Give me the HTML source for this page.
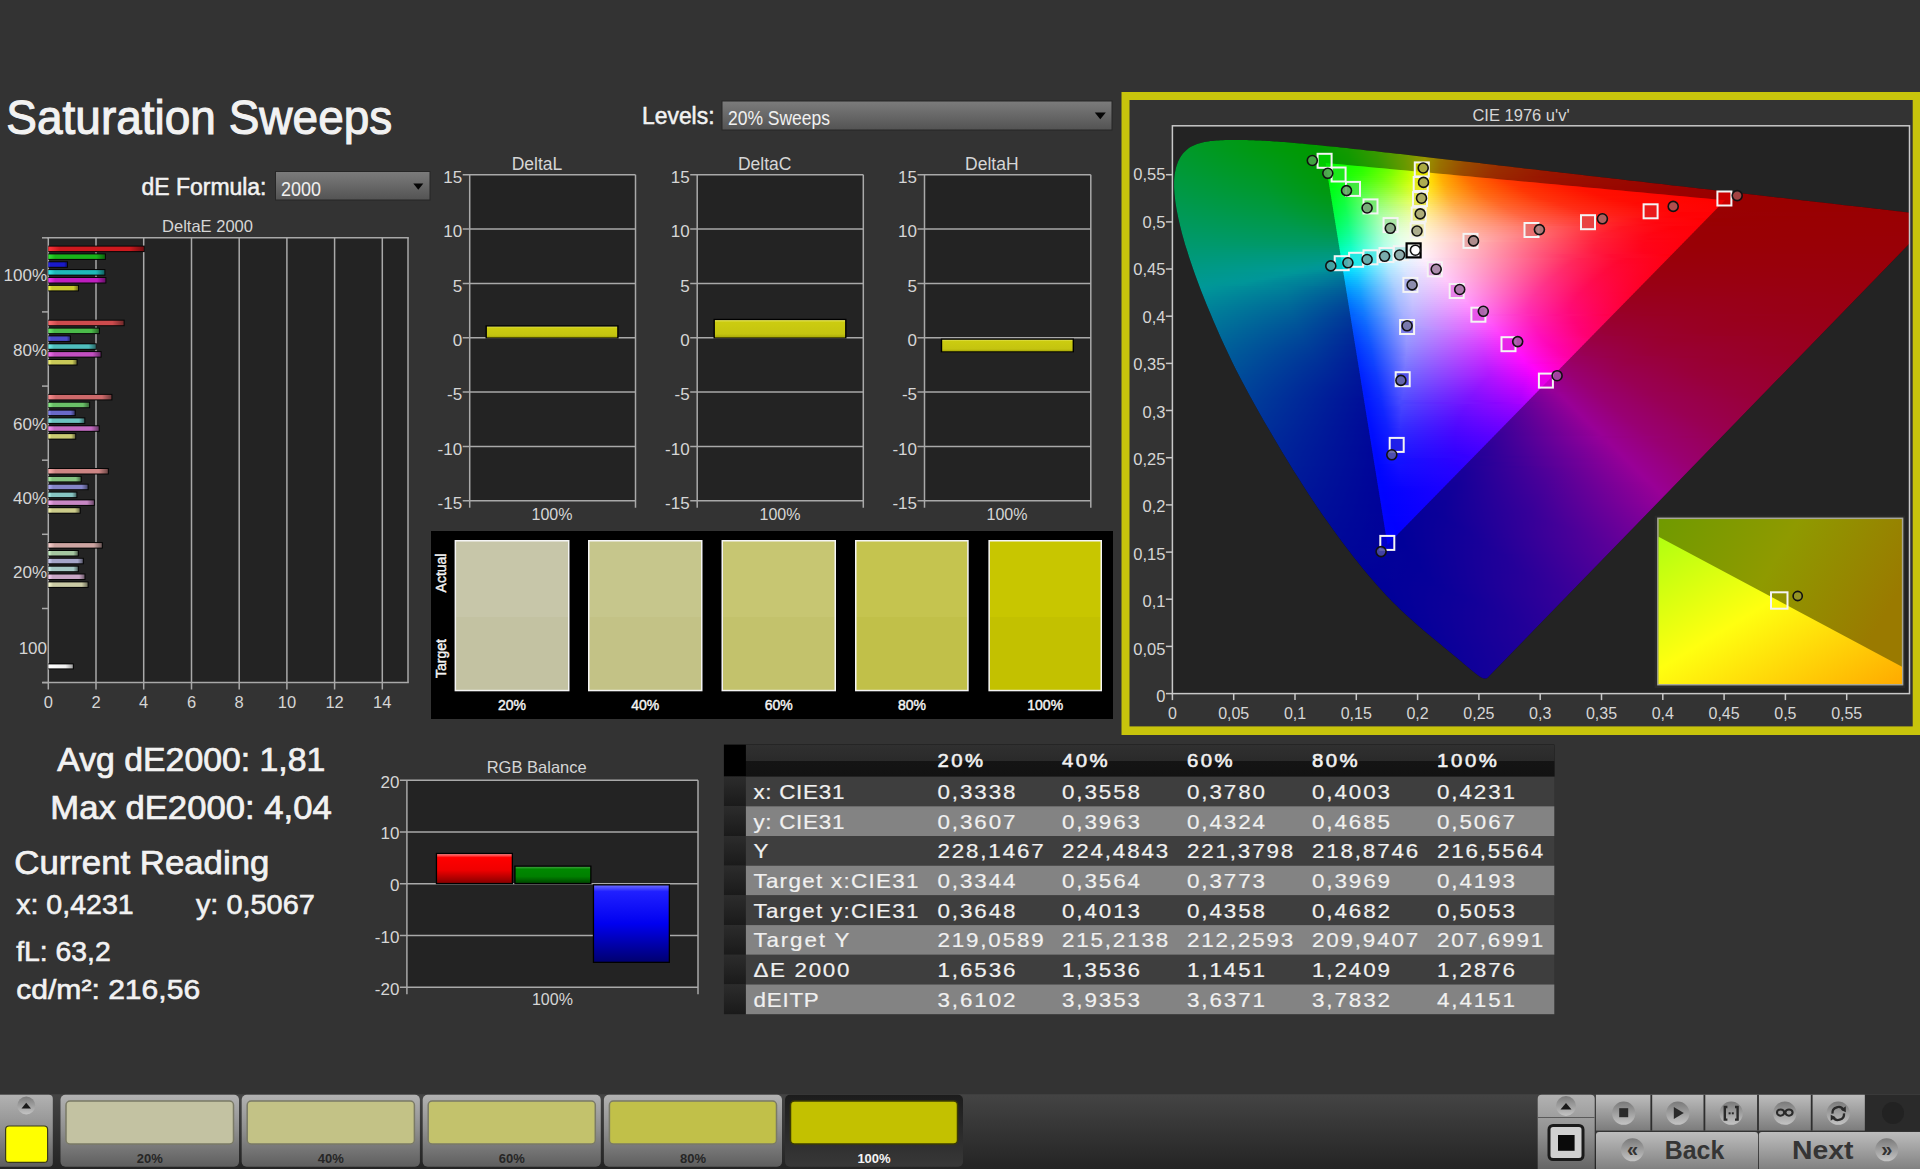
<!DOCTYPE html>
<html><head><meta charset="utf-8"><title>Saturation Sweeps</title>
<style>html,body{margin:0;padding:0;width:1920px;height:1169px;overflow:hidden;background:#333333;font-family:"Liberation Sans", sans-serif;}</style>
</head><body><svg width="1920" height="1169" viewBox="0 0 1920 1169" style="position:absolute;left:0;top:0;font-family:'Liberation Sans', sans-serif"><defs><linearGradient id="dd" x1="0" y1="0" x2="0" y2="1"><stop offset="0" stop-color="#7c7c7c"/><stop offset="1" stop-color="#535353"/></linearGradient><linearGradient id="b00" x1="0" y1="0" x2="1" y2="0"><stop offset="0" stop-color="rgb(255, 53, 59)"/><stop offset="0.12" stop-color="rgb(205, 25, 30)"/><stop offset="0.85" stop-color="rgb(205, 25, 30)"/><stop offset="1" stop-color="rgb(112, 13, 16)"/></linearGradient><linearGradient id="b01" x1="0" y1="0" x2="1" y2="0"><stop offset="0" stop-color="rgb(53, 231, 53)"/><stop offset="0.12" stop-color="rgb(25, 180, 25)"/><stop offset="0.85" stop-color="rgb(25, 180, 25)"/><stop offset="1" stop-color="rgb(13, 99, 13)"/></linearGradient><linearGradient id="b02" x1="0" y1="0" x2="1" y2="0"><stop offset="0" stop-color="rgb(53, 53, 254)"/><stop offset="0.12" stop-color="rgb(25, 25, 200)"/><stop offset="0.85" stop-color="rgb(25, 25, 200)"/><stop offset="1" stop-color="rgb(13, 13, 110)"/></linearGradient><linearGradient id="b03" x1="0" y1="0" x2="1" y2="0"><stop offset="0" stop-color="rgb(59, 237, 237)"/><stop offset="0.12" stop-color="rgb(30, 185, 185)"/><stop offset="0.85" stop-color="rgb(30, 185, 185)"/><stop offset="1" stop-color="rgb(16, 101, 101)"/></linearGradient><linearGradient id="b04" x1="0" y1="0" x2="1" y2="0"><stop offset="0" stop-color="rgb(243, 59, 243)"/><stop offset="0.12" stop-color="rgb(190, 30, 190)"/><stop offset="0.85" stop-color="rgb(190, 30, 190)"/><stop offset="1" stop-color="rgb(104, 16, 104)"/></linearGradient><linearGradient id="b05" x1="0" y1="0" x2="1" y2="0"><stop offset="0" stop-color="rgb(254, 254, 76)"/><stop offset="0.12" stop-color="rgb(200, 200, 45)"/><stop offset="0.85" stop-color="rgb(200, 200, 45)"/><stop offset="1" stop-color="rgb(110, 110, 24)"/></linearGradient><linearGradient id="b10" x1="0" y1="0" x2="1" y2="0"><stop offset="0" stop-color="rgb(255, 111, 113)"/><stop offset="0.12" stop-color="rgb(205, 75, 77)"/><stop offset="0.85" stop-color="rgb(205, 75, 77)"/><stop offset="1" stop-color="rgb(112, 41, 42)"/></linearGradient><linearGradient id="b11" x1="0" y1="0" x2="1" y2="0"><stop offset="0" stop-color="rgb(111, 240, 110)"/><stop offset="0.12" stop-color="rgb(75, 187, 74)"/><stop offset="0.85" stop-color="rgb(75, 187, 74)"/><stop offset="1" stop-color="rgb(41, 102, 40)"/></linearGradient><linearGradient id="b12" x1="0" y1="0" x2="1" y2="0"><stop offset="0" stop-color="rgb(111, 111, 254)"/><stop offset="0.12" stop-color="rgb(75, 75, 200)"/><stop offset="0.85" stop-color="rgb(75, 75, 200)"/><stop offset="1" stop-color="rgb(41, 41, 110)"/></linearGradient><linearGradient id="b13" x1="0" y1="0" x2="1" y2="0"><stop offset="0" stop-color="rgb(115, 243, 242)"/><stop offset="0.12" stop-color="rgb(79, 190, 189)"/><stop offset="0.85" stop-color="rgb(79, 190, 189)"/><stop offset="1" stop-color="rgb(43, 104, 103)"/></linearGradient><linearGradient id="b14" x1="0" y1="0" x2="1" y2="0"><stop offset="0" stop-color="rgb(248, 115, 245)"/><stop offset="0.12" stop-color="rgb(194, 79, 192)"/><stop offset="0.85" stop-color="rgb(194, 79, 192)"/><stop offset="1" stop-color="rgb(106, 43, 105)"/></linearGradient><linearGradient id="b15" x1="0" y1="0" x2="1" y2="0"><stop offset="0" stop-color="rgb(255, 255, 126)"/><stop offset="0.12" stop-color="rgb(201, 201, 88)"/><stop offset="0.85" stop-color="rgb(201, 201, 88)"/><stop offset="1" stop-color="rgb(110, 110, 48)"/></linearGradient><linearGradient id="b20" x1="0" y1="0" x2="1" y2="0"><stop offset="0" stop-color="rgb(255, 145, 146)"/><stop offset="0.12" stop-color="rgb(205, 105, 106)"/><stop offset="0.85" stop-color="rgb(205, 105, 106)"/><stop offset="1" stop-color="rgb(112, 57, 58)"/></linearGradient><linearGradient id="b21" x1="0" y1="0" x2="1" y2="0"><stop offset="0" stop-color="rgb(145, 244, 143)"/><stop offset="0.12" stop-color="rgb(105, 191, 103)"/><stop offset="0.85" stop-color="rgb(105, 191, 103)"/><stop offset="1" stop-color="rgb(57, 105, 56)"/></linearGradient><linearGradient id="b22" x1="0" y1="0" x2="1" y2="0"><stop offset="0" stop-color="rgb(145, 145, 254)"/><stop offset="0.12" stop-color="rgb(105, 105, 200)"/><stop offset="0.85" stop-color="rgb(105, 105, 200)"/><stop offset="1" stop-color="rgb(57, 57, 110)"/></linearGradient><linearGradient id="b23" x1="0" y1="0" x2="1" y2="0"><stop offset="0" stop-color="rgb(149, 248, 244)"/><stop offset="0.12" stop-color="rgb(108, 194, 191)"/><stop offset="0.85" stop-color="rgb(108, 194, 191)"/><stop offset="1" stop-color="rgb(59, 106, 105)"/></linearGradient><linearGradient id="b24" x1="0" y1="0" x2="1" y2="0"><stop offset="0" stop-color="rgb(250, 149, 248)"/><stop offset="0.12" stop-color="rgb(196, 108, 194)"/><stop offset="0.85" stop-color="rgb(196, 108, 194)"/><stop offset="1" stop-color="rgb(107, 59, 106)"/></linearGradient><linearGradient id="b25" x1="0" y1="0" x2="1" y2="0"><stop offset="0" stop-color="rgb(255, 255, 156)"/><stop offset="0.12" stop-color="rgb(202, 202, 114)"/><stop offset="0.85" stop-color="rgb(202, 202, 114)"/><stop offset="1" stop-color="rgb(111, 111, 62)"/></linearGradient><linearGradient id="b30" x1="0" y1="0" x2="1" y2="0"><stop offset="0" stop-color="rgb(255, 177, 176)"/><stop offset="0.12" stop-color="rgb(205, 133, 132)"/><stop offset="0.85" stop-color="rgb(205, 133, 132)"/><stop offset="1" stop-color="rgb(112, 73, 72)"/></linearGradient><linearGradient id="b31" x1="0" y1="0" x2="1" y2="0"><stop offset="0" stop-color="rgb(177, 249, 174)"/><stop offset="0.12" stop-color="rgb(133, 195, 130)"/><stop offset="0.85" stop-color="rgb(133, 195, 130)"/><stop offset="1" stop-color="rgb(73, 107, 71)"/></linearGradient><linearGradient id="b32" x1="0" y1="0" x2="1" y2="0"><stop offset="0" stop-color="rgb(177, 177, 254)"/><stop offset="0.12" stop-color="rgb(133, 133, 200)"/><stop offset="0.85" stop-color="rgb(133, 133, 200)"/><stop offset="1" stop-color="rgb(73, 73, 110)"/></linearGradient><linearGradient id="b33" x1="0" y1="0" x2="1" y2="0"><stop offset="0" stop-color="rgb(180, 251, 248)"/><stop offset="0.12" stop-color="rgb(135, 197, 194)"/><stop offset="0.85" stop-color="rgb(135, 197, 194)"/><stop offset="1" stop-color="rgb(74, 108, 106)"/></linearGradient><linearGradient id="b34" x1="0" y1="0" x2="1" y2="0"><stop offset="0" stop-color="rgb(253, 180, 250)"/><stop offset="0.12" stop-color="rgb(199, 135, 196)"/><stop offset="0.85" stop-color="rgb(199, 135, 196)"/><stop offset="1" stop-color="rgb(109, 74, 107)"/></linearGradient><linearGradient id="b35" x1="0" y1="0" x2="1" y2="0"><stop offset="0" stop-color="rgb(255, 255, 183)"/><stop offset="0.12" stop-color="rgb(203, 203, 138)"/><stop offset="0.85" stop-color="rgb(203, 203, 138)"/><stop offset="1" stop-color="rgb(111, 111, 75)"/></linearGradient><linearGradient id="b40" x1="0" y1="0" x2="1" y2="0"><stop offset="0" stop-color="rgb(255, 214, 211)"/><stop offset="0.12" stop-color="rgb(205, 165, 162)"/><stop offset="0.85" stop-color="rgb(205, 165, 162)"/><stop offset="1" stop-color="rgb(112, 90, 89)"/></linearGradient><linearGradient id="b41" x1="0" y1="0" x2="1" y2="0"><stop offset="0" stop-color="rgb(214, 253, 210)"/><stop offset="0.12" stop-color="rgb(165, 199, 161)"/><stop offset="0.85" stop-color="rgb(165, 199, 161)"/><stop offset="1" stop-color="rgb(90, 109, 88)"/></linearGradient><linearGradient id="b42" x1="0" y1="0" x2="1" y2="0"><stop offset="0" stop-color="rgb(214, 214, 254)"/><stop offset="0.12" stop-color="rgb(165, 165, 200)"/><stop offset="0.85" stop-color="rgb(165, 165, 200)"/><stop offset="1" stop-color="rgb(90, 90, 110)"/></linearGradient><linearGradient id="b43" x1="0" y1="0" x2="1" y2="0"><stop offset="0" stop-color="rgb(215, 254, 250)"/><stop offset="0.12" stop-color="rgb(166, 200, 196)"/><stop offset="0.85" stop-color="rgb(166, 200, 196)"/><stop offset="1" stop-color="rgb(91, 110, 107)"/></linearGradient><linearGradient id="b44" x1="0" y1="0" x2="1" y2="0"><stop offset="0" stop-color="rgb(255, 215, 251)"/><stop offset="0.12" stop-color="rgb(201, 166, 197)"/><stop offset="0.85" stop-color="rgb(201, 166, 197)"/><stop offset="1" stop-color="rgb(110, 91, 108)"/></linearGradient><linearGradient id="b45" x1="0" y1="0" x2="1" y2="0"><stop offset="0" stop-color="rgb(255, 255, 214)"/><stop offset="0.12" stop-color="rgb(203, 203, 165)"/><stop offset="0.85" stop-color="rgb(203, 203, 165)"/><stop offset="1" stop-color="rgb(111, 111, 90)"/></linearGradient><linearGradient id="bw" x1="0" y1="0" x2="1" y2="0"><stop offset="0" stop-color="#ffffff"/><stop offset="0.7" stop-color="#f0f0f0"/><stop offset="1" stop-color="#a0a0a0"/></linearGradient><linearGradient id="yb" x1="0" y1="0" x2="0" y2="1"><stop offset="0" stop-color="#e6e660"/><stop offset="0.12" stop-color="#cccc10"/><stop offset="0.8" stop-color="#c4c410"/><stop offset="1" stop-color="#a8a808"/></linearGradient><clipPath id="loc"><path d="M1487.3 678.1 L1487.3 678.1 L1487.2 678.1 L1487.2 678.1 L1487.1 678.1 L1487.0 678.1 L1486.9 678.1 L1486.8 678.2 L1486.7 678.2 L1486.7 678.2 L1486.6 678.3 L1486.5 678.3 L1486.4 678.4 L1486.3 678.4 L1486.2 678.5 L1486.1 678.5 L1486.0 678.6 L1485.8 678.6 L1485.7 678.6 L1485.5 678.6 L1485.3 678.6 L1485.1 678.7 L1484.9 678.6 L1484.7 678.6 L1484.4 678.6 L1484.1 678.5 L1483.8 678.4 L1483.5 678.4 L1483.1 678.3 L1482.8 678.1 L1482.4 678.0 L1482.0 677.8 L1481.6 677.7 L1481.3 677.5 L1480.9 677.3 L1480.5 677.0 L1480.1 676.8 L1479.7 676.5 L1479.3 676.2 L1478.9 675.9 L1478.4 675.6 L1478.0 675.2 L1477.5 674.9 L1477.0 674.5 L1476.5 674.1 L1475.9 673.7 L1475.3 673.2 L1474.7 672.8 L1474.1 672.3 L1473.4 671.7 L1472.7 671.2 L1472.0 670.6 L1471.3 670.0 L1470.5 669.4 L1469.7 668.7 L1468.9 668.1 L1468.0 667.3 L1467.1 666.6 L1466.2 665.8 L1465.3 665.0 L1464.3 664.2 L1463.4 663.4 L1462.3 662.5 L1461.3 661.6 L1460.2 660.7 L1459.1 659.7 L1457.9 658.8 L1456.8 657.8 L1455.5 656.8 L1454.3 655.8 L1453.0 654.7 L1451.7 653.6 L1450.3 652.4 L1448.8 651.2 L1447.3 650.0 L1445.8 648.7 L1444.2 647.4 L1442.5 646.0 L1440.8 644.6 L1439.1 643.2 L1437.4 641.7 L1435.5 640.2 L1433.7 638.7 L1431.8 637.2 L1429.9 635.6 L1427.9 633.9 L1425.9 632.2 L1423.8 630.5 L1421.6 628.6 L1419.4 626.7 L1417.2 624.7 L1414.9 622.7 L1412.5 620.6 L1410.1 618.5 L1407.6 616.2 L1405.1 613.9 L1402.5 611.4 L1399.8 608.9 L1397.2 606.3 L1394.5 603.7 L1391.7 600.9 L1388.9 598.1 L1385.9 595.0 L1382.8 591.6 L1379.6 588.0 L1376.2 584.2 L1372.6 580.1 L1368.9 575.8 L1365.1 571.3 L1361.2 566.6 L1357.3 561.6 L1353.2 556.5 L1349.1 551.1 L1344.8 545.6 L1340.5 539.8 L1336.1 533.8 L1331.6 527.5 L1327.0 521.1 L1322.3 514.5 L1317.7 507.7 L1313.0 500.7 L1308.2 493.5 L1303.4 486.0 L1298.5 478.3 L1293.5 470.5 L1288.6 462.5 L1283.7 454.4 L1278.8 446.2 L1273.9 438.1 L1269.1 429.8 L1264.2 421.4 L1259.4 412.9 L1254.5 404.3 L1249.8 395.7 L1245.1 387.1 L1240.6 378.6 L1236.3 370.3 L1232.2 361.9 L1228.2 353.6 L1224.3 345.2 L1220.5 336.9 L1216.9 328.7 L1213.4 320.7 L1210.1 312.8 L1206.9 305.2 L1203.9 297.7 L1201.0 290.4 L1198.3 283.2 L1195.7 276.2 L1193.3 269.4 L1191.0 262.8 L1188.9 256.4 L1187.0 250.3 L1185.1 244.4 L1183.5 238.8 L1182.0 233.4 L1180.7 228.3 L1179.5 223.3 L1178.4 218.5 L1177.5 213.9 L1176.6 209.5 L1175.9 205.3 L1175.3 201.3 L1174.9 197.6 L1174.5 194.0 L1174.3 190.6 L1174.1 187.3 L1174.1 184.2 L1174.1 181.1 L1174.3 178.2 L1174.5 175.5 L1174.9 172.8 L1175.4 170.4 L1175.9 168.0 L1176.6 165.8 L1177.3 163.7 L1178.1 161.6 L1179.0 159.7 L1179.9 157.9 L1181.0 156.2 L1182.2 154.6 L1183.4 153.1 L1184.7 151.7 L1186.0 150.4 L1187.4 149.2 L1188.9 148.1 L1190.4 147.1 L1192.0 146.2 L1193.7 145.4 L1195.4 144.7 L1197.1 144.1 L1198.9 143.5 L1200.7 142.9 L1202.6 142.4 L1204.5 142.0 L1206.4 141.7 L1208.4 141.4 L1210.4 141.1 L1212.4 140.9 L1214.5 140.8 L1216.5 140.6 L1218.6 140.4 L1220.7 140.3 L1222.9 140.2 L1225.1 140.1 L1227.2 140.1 L1229.4 140.0 L1231.6 140.0 L1233.8 140.0 L1236.0 140.0 L1238.1 140.0 L1240.3 140.0 L1242.5 140.0 L1244.6 140.1 L1246.8 140.1 L1249.0 140.2 L1251.3 140.2 L1253.5 140.3 L1255.7 140.4 L1258.0 140.5 L1260.3 140.6 L1262.5 140.7 L1264.9 140.8 L1267.2 140.9 L1269.5 141.1 L1271.9 141.2 L1274.3 141.4 L1276.7 141.5 L1279.2 141.7 L1281.6 141.9 L1284.1 142.1 L1286.6 142.3 L1289.2 142.5 L1291.8 142.7 L1294.4 142.9 L1297.0 143.2 L1299.6 143.4 L1302.3 143.6 L1305.0 143.9 L1307.8 144.2 L1310.6 144.4 L1313.4 144.7 L1316.2 145.0 L1319.1 145.3 L1322.0 145.6 L1325.0 145.9 L1328.0 146.2 L1331.0 146.5 L1334.1 146.8 L1337.2 147.1 L1340.4 147.5 L1343.5 147.8 L1346.8 148.1 L1350.0 148.5 L1353.4 148.9 L1356.7 149.2 L1360.1 149.6 L1363.6 150.0 L1367.0 150.4 L1370.6 150.7 L1374.2 151.1 L1377.8 151.5 L1381.4 152.0 L1385.2 152.4 L1388.9 152.8 L1392.7 153.2 L1396.6 153.7 L1400.5 154.1 L1404.4 154.6 L1408.4 155.0 L1412.5 155.5 L1416.6 155.9 L1420.8 156.4 L1425.0 156.9 L1429.2 157.4 L1433.5 157.9 L1437.9 158.4 L1442.3 158.9 L1446.7 159.4 L1451.2 159.9 L1455.8 160.4 L1460.4 161.0 L1465.1 161.5 L1469.8 162.0 L1474.5 162.6 L1479.3 163.1 L1484.2 163.7 L1489.1 164.3 L1494.0 164.8 L1499.0 165.4 L1504.1 166.0 L1509.2 166.6 L1514.3 167.2 L1519.5 167.8 L1524.7 168.4 L1529.9 169.0 L1535.2 169.6 L1540.5 170.2 L1545.9 170.8 L1551.3 171.4 L1556.8 172.0 L1562.3 172.7 L1567.7 173.3 L1573.3 173.9 L1578.8 174.6 L1584.3 175.2 L1590.0 175.9 L1595.6 176.5 L1601.2 177.2 L1606.9 177.8 L1612.5 178.5 L1618.1 179.1 L1623.7 179.7 L1629.2 180.4 L1634.7 181.0 L1640.1 181.6 L1645.6 182.3 L1651.0 182.9 L1656.4 183.5 L1661.7 184.1 L1667.1 184.7 L1672.5 185.4 L1677.8 186.0 L1683.2 186.6 L1688.6 187.2 L1693.9 187.8 L1699.1 188.4 L1704.3 189.0 L1709.4 189.6 L1714.4 190.2 L1719.3 190.7 L1724.2 191.3 L1729.0 191.8 L1733.7 192.4 L1738.4 192.9 L1743.0 193.4 L1747.5 194.0 L1752.0 194.5 L1756.4 195.0 L1760.8 195.5 L1765.0 196.0 L1769.2 196.5 L1773.4 196.9 L1777.4 197.4 L1781.3 197.8 L1785.2 198.3 L1789.0 198.7 L1792.7 199.2 L1796.4 199.6 L1799.9 200.0 L1803.4 200.4 L1806.8 200.8 L1810.2 201.2 L1813.4 201.5 L1816.6 201.9 L1819.8 202.3 L1822.8 202.6 L1825.8 203.0 L1828.7 203.3 L1831.5 203.6 L1834.4 203.9 L1837.1 204.3 L1839.8 204.6 L1842.4 204.9 L1844.9 205.2 L1847.4 205.4 L1849.9 205.7 L1852.3 206.0 L1854.6 206.3 L1857.0 206.5 L1859.3 206.8 L1861.6 207.1 L1863.8 207.3 L1866.0 207.6 L1868.1 207.8 L1870.2 208.1 L1872.3 208.3 L1874.2 208.5 L1876.1 208.7 L1877.8 208.9 L1879.5 209.1 L1881.2 209.3 L1883.1 209.6 L1885.0 209.8 L1887.2 210.0 L1889.6 210.3 L1892.3 210.6 L1895.1 210.9 L1898.0 211.3 L1900.9 211.6 L1903.7 211.9 L1906.3 212.2 L1908.6 212.5 L1910.6 212.7 L1912.4 212.9 L1914.0 213.1 L1915.5 213.3 L1917.0 213.5 L1918.4 213.6 L1919.8 213.8 L1921.2 213.9 L1922.8 214.1 L1924.3 214.3 L1925.9 214.5 L1927.4 214.7 L1928.8 214.8 L1930.2 215.0 L1931.4 215.1 L1932.5 215.2 L1933.3 215.3 L1934.1 215.4 L1934.7 215.5 L1935.3 215.6 L1935.7 215.6 L1936.1 215.7 L1936.4 215.7 L1936.6 215.7 Z"/></clipPath><clipPath id="plotc"><rect x="1172.4" y="125.8" width="737.0999999999999" height="567.8000000000001"/></clipPath><linearGradient id="g0" gradientUnits="userSpaceOnUse" x1="1233" y1="0" x2="1243" y2="0"><stop offset="0.0500" stop-color="#00ff23"/><stop offset="1.0500" stop-color="#00ff1e"/></linearGradient><linearGradient id="g1" gradientUnits="userSpaceOnUse" x1="1204" y1="0" x2="1284" y2="0"><stop offset="0.0063" stop-color="#00ff34"/><stop offset="1.0063" stop-color="#00ff07"/></linearGradient><linearGradient id="g2" gradientUnits="userSpaceOnUse" x1="1196" y1="0" x2="1308" y2="0"><stop offset="0.0045" stop-color="#00ff3a"/><stop offset="0.9866" stop-color="#00ff00"/><stop offset="1.0045" stop-color="#01ff00"/></linearGradient><linearGradient id="g3" gradientUnits="userSpaceOnUse" x1="1191" y1="0" x2="1327" y2="0"><stop offset="0.0037" stop-color="#00ff3e"/><stop offset="0.8640" stop-color="#00ff00"/><stop offset="1.0037" stop-color="#0dff00"/></linearGradient><linearGradient id="g4" gradientUnits="userSpaceOnUse" x1="1188" y1="0" x2="1346" y2="0"><stop offset="0.0032" stop-color="#00ff41"/><stop offset="0.7753" stop-color="#01ff00"/><stop offset="0.9652" stop-color="#1bff00"/><stop offset="1.0032" stop-color="#24ff00"/></linearGradient><linearGradient id="g5" gradientUnits="userSpaceOnUse" x1="1185" y1="0" x2="1366" y2="0"><stop offset="0.0028" stop-color="#00ff44"/><stop offset="0.7099" stop-color="#01ff00"/><stop offset="0.8702" stop-color="#1cff00"/><stop offset="1.0028" stop-color="#47ff00"/></linearGradient><linearGradient id="g6" gradientUnits="userSpaceOnUse" x1="1182" y1="0" x2="1384" y2="0"><stop offset="0.0025" stop-color="#00ff47"/><stop offset="0.5173" stop-color="#00ff0d"/><stop offset="0.6856" stop-color="#03ff00"/><stop offset="0.8342" stop-color="#26ff00"/><stop offset="0.9876" stop-color="#6aff00"/><stop offset="1.0025" stop-color="#72ff00"/></linearGradient><linearGradient id="g7" gradientUnits="userSpaceOnUse" x1="1181" y1="0" x2="1399" y2="0"><stop offset="0.0023" stop-color="#00ff49"/><stop offset="0.4610" stop-color="#00ff12"/><stop offset="0.6353" stop-color="#02ff00"/><stop offset="0.7683" stop-color="#21ff00"/><stop offset="0.9060" stop-color="#60ff00"/><stop offset="1.0023" stop-color="#9fff00"/></linearGradient><linearGradient id="g8" gradientUnits="userSpaceOnUse" x1="1180" y1="0" x2="1419" y2="0"><stop offset="0.0021" stop-color="#00ff4c"/><stop offset="0.4121" stop-color="#00ff16"/><stop offset="0.5879" stop-color="#01ff00"/><stop offset="0.7050" stop-color="#1fff00"/><stop offset="0.8305" stop-color="#5eff00"/><stop offset="0.9477" stop-color="#b7ff00"/><stop offset="1.0021" stop-color="#eaff00"/></linearGradient><linearGradient id="g9" gradientUnits="userSpaceOnUse" x1="1177" y1="0" x2="1436" y2="0"><stop offset="0.0019" stop-color="#00ff4f"/><stop offset="0.3764" stop-color="#00ff1b"/><stop offset="0.5579" stop-color="#01ff00"/><stop offset="0.6622" stop-color="#1dff00"/><stop offset="0.7741" stop-color="#5aff00"/><stop offset="0.8822" stop-color="#b2ff00"/><stop offset="0.9556" stop-color="#fffd00"/><stop offset="1.0019" stop-color="#ffce00"/></linearGradient><linearGradient id="g10" gradientUnits="userSpaceOnUse" x1="1176" y1="0" x2="1454" y2="0"><stop offset="0.0018" stop-color="#00ff51"/><stop offset="0.3471" stop-color="#00ff1e"/><stop offset="0.5270" stop-color="#01ff00"/><stop offset="0.6205" stop-color="#1bff00"/><stop offset="0.7248" stop-color="#58ff00"/><stop offset="0.8219" stop-color="#aeff00"/><stop offset="0.8939" stop-color="#fffc00"/><stop offset="0.9622" stop-color="#ffb700"/><stop offset="1.0018" stop-color="#ff9a00"/></linearGradient><linearGradient id="g11" gradientUnits="userSpaceOnUse" x1="1176" y1="0" x2="1468" y2="0"><stop offset="0.0017" stop-color="#00ff53"/><stop offset="0.3271" stop-color="#00ff21"/><stop offset="0.5086" stop-color="#01ff00"/><stop offset="0.5976" stop-color="#1cff00"/><stop offset="0.6935" stop-color="#58ff00"/><stop offset="0.7860" stop-color="#b1ff00"/><stop offset="0.8510" stop-color="#fffb00"/><stop offset="0.9127" stop-color="#ffb800"/><stop offset="1.0017" stop-color="#ff7c00"/></linearGradient><linearGradient id="g12" gradientUnits="userSpaceOnUse" x1="1175" y1="0" x2="1487" y2="0"><stop offset="0.0016" stop-color="#00ff55"/><stop offset="0.3029" stop-color="#00ff25"/><stop offset="0.4856" stop-color="#01ff00"/><stop offset="0.5657" stop-color="#1bff00"/><stop offset="0.6522" stop-color="#56ff00"/><stop offset="0.7356" stop-color="#acff00"/><stop offset="0.7965" stop-color="#ffff00"/><stop offset="0.8542" stop-color="#ffb900"/><stop offset="0.9343" stop-color="#ff7e00"/><stop offset="1.0016" stop-color="#ff5e00"/></linearGradient><linearGradient id="g13" gradientUnits="userSpaceOnUse" x1="1174" y1="0" x2="1507" y2="0"><stop offset="0.0015" stop-color="#00ff58"/><stop offset="0.2838" stop-color="#00ff28"/><stop offset="0.4610" stop-color="#00ff00"/><stop offset="0.5330" stop-color="#19ff00"/><stop offset="0.6141" stop-color="#54ff00"/><stop offset="0.6922" stop-color="#abff00"/><stop offset="0.7492" stop-color="#fffe00"/><stop offset="0.8003" stop-color="#ffba00"/><stop offset="0.8724" stop-color="#ff7f00"/><stop offset="0.9805" stop-color="#ff4e00"/><stop offset="1.0015" stop-color="#ff4700"/></linearGradient><linearGradient id="g14" gradientUnits="userSpaceOnUse" x1="1173" y1="0" x2="1522" y2="0"><stop offset="0.0014" stop-color="#00ff5a"/><stop offset="0.2708" stop-color="#00ff2b"/><stop offset="0.4484" stop-color="#01ff00"/><stop offset="0.5201" stop-color="#1bff00"/><stop offset="0.5946" stop-color="#57ff00"/><stop offset="0.6662" stop-color="#aeff00"/><stop offset="0.7178" stop-color="#fffd00"/><stop offset="0.7665" stop-color="#ffb900"/><stop offset="0.8352" stop-color="#ff7d00"/><stop offset="0.9355" stop-color="#ff4d00"/><stop offset="1.0014" stop-color="#ff3a00"/></linearGradient><linearGradient id="g15" gradientUnits="userSpaceOnUse" x1="1173" y1="0" x2="1538" y2="0"><stop offset="0.0014" stop-color="#00ff5c"/><stop offset="0.2562" stop-color="#00ff2e"/><stop offset="0.4288" stop-color="#01ff01"/><stop offset="0.5082" stop-color="#23ff00"/><stop offset="0.5658" stop-color="#52ff00"/><stop offset="0.6342" stop-color="#a9ff00"/><stop offset="0.6863" stop-color="#fffc00"/><stop offset="0.7329" stop-color="#ffb700"/><stop offset="0.7959" stop-color="#ff7d00"/><stop offset="0.8918" stop-color="#ff4c00"/><stop offset="1.0014" stop-color="#ff2e00"/></linearGradient><linearGradient id="g16" gradientUnits="userSpaceOnUse" x1="1173" y1="0" x2="1554" y2="0"><stop offset="0.0013" stop-color="#00ff5e"/><stop offset="0.2454" stop-color="#00ff30"/><stop offset="0.4134" stop-color="#02ff02"/><stop offset="0.4921" stop-color="#29ff01"/><stop offset="0.5604" stop-color="#66ff00"/><stop offset="0.6181" stop-color="#baff00"/><stop offset="0.6575" stop-color="#fffb00"/><stop offset="0.6995" stop-color="#ffb800"/><stop offset="0.7598" stop-color="#ff7d00"/><stop offset="0.8491" stop-color="#ff4c00"/><stop offset="0.9934" stop-color="#ff2600"/><stop offset="1.0013" stop-color="#ff2500"/></linearGradient><linearGradient id="g17" gradientUnits="userSpaceOnUse" x1="1172" y1="0" x2="1576" y2="0"><stop offset="0.0012" stop-color="#00ff60"/><stop offset="0.2314" stop-color="#00ff33"/><stop offset="0.3923" stop-color="#01ff04"/><stop offset="0.4691" stop-color="#2dff02"/><stop offset="0.5359" stop-color="#70ff01"/><stop offset="0.5903" stop-color="#c2ff00"/><stop offset="0.6200" stop-color="#ffff00"/><stop offset="0.6597" stop-color="#ffb900"/><stop offset="0.7141" stop-color="#ff7e00"/><stop offset="0.7958" stop-color="#ff4d00"/><stop offset="0.9270" stop-color="#ff2700"/><stop offset="1.0012" stop-color="#ff1b00"/></linearGradient><linearGradient id="g18" gradientUnits="userSpaceOnUse" x1="1172" y1="0" x2="1592" y2="0"><stop offset="0.0012" stop-color="#00ff62"/><stop offset="0.2226" stop-color="#00ff36"/><stop offset="0.3774" stop-color="#01ff05"/><stop offset="0.4536" stop-color="#32ff04"/><stop offset="0.5179" stop-color="#77ff02"/><stop offset="0.5702" stop-color="#c9ff01"/><stop offset="0.5964" stop-color="#fffe00"/><stop offset="0.6345" stop-color="#ffb700"/><stop offset="0.6869" stop-color="#ff7c00"/><stop offset="0.7631" stop-color="#ff4c00"/><stop offset="0.8893" stop-color="#ff2600"/><stop offset="1.0012" stop-color="#ff1600"/></linearGradient><linearGradient id="g19" gradientUnits="userSpaceOnUse" x1="1172" y1="0" x2="1609" y2="0"><stop offset="0.0011" stop-color="#00ff64"/><stop offset="0.2140" stop-color="#00ff38"/><stop offset="0.3627" stop-color="#01ff07"/><stop offset="0.4382" stop-color="#37ff07"/><stop offset="0.5023" stop-color="#81ff04"/><stop offset="0.5526" stop-color="#d5ff02"/><stop offset="0.5732" stop-color="#fffd01"/><stop offset="0.6144" stop-color="#ffb100"/><stop offset="0.6625" stop-color="#ff7800"/><stop offset="0.7380" stop-color="#ff4800"/><stop offset="0.8616" stop-color="#ff2300"/><stop offset="1.0011" stop-color="#ff1100"/></linearGradient><linearGradient id="g20" gradientUnits="userSpaceOnUse" x1="1172" y1="0" x2="1626" y2="0"><stop offset="0.0011" stop-color="#00ff67"/><stop offset="0.2059" stop-color="#00ff3b"/><stop offset="0.3491" stop-color="#01ff08"/><stop offset="0.3910" stop-color="#1fff0d"/><stop offset="0.4615" stop-color="#67ff08"/><stop offset="0.5165" stop-color="#baff05"/><stop offset="0.5518" stop-color="#fffc03"/><stop offset="0.5914" stop-color="#ffb201"/><stop offset="0.6443" stop-color="#ff7200"/><stop offset="0.6993" stop-color="#ff4b00"/><stop offset="0.8117" stop-color="#ff2500"/><stop offset="1.0011" stop-color="#ff0d00"/></linearGradient><linearGradient id="g21" gradientUnits="userSpaceOnUse" x1="1172" y1="0" x2="1643" y2="0"><stop offset="0.0011" stop-color="#00ff69"/><stop offset="0.1985" stop-color="#00ff3e"/><stop offset="0.3365" stop-color="#01ff0a"/><stop offset="0.3726" stop-color="#1eff13"/><stop offset="0.4448" stop-color="#6aff0d"/><stop offset="0.5000" stop-color="#c0ff08"/><stop offset="0.5318" stop-color="#fffb06"/><stop offset="0.5722" stop-color="#ffb103"/><stop offset="0.6274" stop-color="#ff6f01"/><stop offset="0.6975" stop-color="#ff3e00"/><stop offset="0.8227" stop-color="#ff1c00"/><stop offset="1.0011" stop-color="#ff0a00"/></linearGradient><linearGradient id="g22" gradientUnits="userSpaceOnUse" x1="1172" y1="0" x2="1659" y2="0"><stop offset="0.0010" stop-color="#00ff6b"/><stop offset="0.1920" stop-color="#00ff41"/><stop offset="0.3255" stop-color="#00ff0c"/><stop offset="0.3480" stop-color="#12ff16"/><stop offset="0.4343" stop-color="#74ff11"/><stop offset="0.4877" stop-color="#cbff0d"/><stop offset="0.5144" stop-color="#fffb0a"/><stop offset="0.5554" stop-color="#ffaf05"/><stop offset="0.6109" stop-color="#ff6e02"/><stop offset="0.6869" stop-color="#ff3900"/><stop offset="0.7772" stop-color="#ff1e00"/><stop offset="1.0010" stop-color="#ff0700"/></linearGradient><linearGradient id="g23" gradientUnits="userSpaceOnUse" x1="1172" y1="0" x2="1680" y2="0"><stop offset="0.0010" stop-color="#00ff6d"/><stop offset="0.1841" stop-color="#00ff43"/><stop offset="0.3120" stop-color="#00ff0e"/><stop offset="0.3337" stop-color="#11ff19"/><stop offset="0.3553" stop-color="#2dff1e"/><stop offset="0.4262" stop-color="#86ff16"/><stop offset="0.4774" stop-color="#e1ff11"/><stop offset="0.4931" stop-color="#fffa0f"/><stop offset="0.5344" stop-color="#ffae08"/><stop offset="0.5896" stop-color="#ff6d03"/><stop offset="0.6644" stop-color="#ff3900"/><stop offset="0.7530" stop-color="#ff1b00"/><stop offset="0.9892" stop-color="#ff0500"/><stop offset="1.0010" stop-color="#ff0500"/></linearGradient><linearGradient id="g24" gradientUnits="userSpaceOnUse" x1="1172" y1="0" x2="1696" y2="0"><stop offset="0.0010" stop-color="#00ff6f"/><stop offset="0.1784" stop-color="#00ff46"/><stop offset="0.3044" stop-color="#01ff11"/><stop offset="0.3254" stop-color="#13ff1e"/><stop offset="0.3426" stop-color="#2eff25"/><stop offset="0.4151" stop-color="#8dff1d"/><stop offset="0.4666" stop-color="#ebff17"/><stop offset="0.4781" stop-color="#fff915"/><stop offset="0.5200" stop-color="#ffad0b"/><stop offset="0.5754" stop-color="#ff6d05"/><stop offset="0.6517" stop-color="#ff3801"/><stop offset="0.7529" stop-color="#ff1500"/><stop offset="1.0010" stop-color="#ff0300"/></linearGradient><linearGradient id="g25" gradientUnits="userSpaceOnUse" x1="1172" y1="0" x2="1712" y2="0"><stop offset="0.0009" stop-color="#00ff71"/><stop offset="0.1750" stop-color="#00ff48"/><stop offset="0.2954" stop-color="#00ff13"/><stop offset="0.3157" stop-color="#12ff21"/><stop offset="0.3343" stop-color="#33ff2d"/><stop offset="0.4065" stop-color="#96ff23"/><stop offset="0.4583" stop-color="#f9ff1d"/><stop offset="0.4676" stop-color="#fff11a"/><stop offset="0.5102" stop-color="#ffa70f"/><stop offset="0.5676" stop-color="#ff6707"/><stop offset="0.6472" stop-color="#ff3302"/><stop offset="0.7602" stop-color="#ff1000"/><stop offset="1.0009" stop-color="#ff0200"/></linearGradient><linearGradient id="g26" gradientUnits="userSpaceOnUse" x1="1172" y1="0" x2="1731" y2="0"><stop offset="0.0009" stop-color="#00ff73"/><stop offset="0.1691" stop-color="#00ff4b"/><stop offset="0.2800" stop-color="#00ff16"/><stop offset="0.3014" stop-color="#0cff21"/><stop offset="0.3265" stop-color="#3bff34"/><stop offset="0.3998" stop-color="#a6ff2a"/><stop offset="0.4463" stop-color="#fffc24"/><stop offset="0.4875" stop-color="#ffb115"/><stop offset="0.5429" stop-color="#ff6f0a"/><stop offset="0.6199" stop-color="#ff3903"/><stop offset="0.7254" stop-color="#ff1400"/><stop offset="0.8810" stop-color="#ff0400"/><stop offset="1.0009" stop-color="#ff0100"/></linearGradient><linearGradient id="g27" gradientUnits="userSpaceOnUse" x1="1172" y1="0" x2="1750" y2="0"><stop offset="0.0009" stop-color="#00ff76"/><stop offset="0.1635" stop-color="#00ff4e"/><stop offset="0.2673" stop-color="#00ff1b"/><stop offset="0.2794" stop-color="#01ff1b"/><stop offset="0.2984" stop-color="#17ff2b"/><stop offset="0.3175" stop-color="#41ff3d"/><stop offset="0.3919" stop-color="#b2ff32"/><stop offset="0.4317" stop-color="#fffc2c"/><stop offset="0.4732" stop-color="#ffb11b"/><stop offset="0.5303" stop-color="#ff6e0d"/><stop offset="0.6081" stop-color="#ff3704"/><stop offset="0.7154" stop-color="#ff1200"/><stop offset="0.8625" stop-color="#ff0300"/><stop offset="1.0009" stop-color="#ff0000"/></linearGradient><linearGradient id="g28" gradientUnits="userSpaceOnUse" x1="1172" y1="0" x2="1768" y2="0"><stop offset="0.0008" stop-color="#00ff78"/><stop offset="0.1602" stop-color="#00ff51"/><stop offset="0.2592" stop-color="#00ff1e"/><stop offset="0.2693" stop-color="#00ff1c"/><stop offset="0.2878" stop-color="#13ff2d"/><stop offset="0.3112" stop-color="#49ff45"/><stop offset="0.3851" stop-color="#beff3a"/><stop offset="0.4186" stop-color="#fffb35"/><stop offset="0.4606" stop-color="#ffb021"/><stop offset="0.5193" stop-color="#ff6c11"/><stop offset="0.5982" stop-color="#ff3606"/><stop offset="0.7055" stop-color="#ff1101"/><stop offset="0.8599" stop-color="#ff0200"/><stop offset="1.0008" stop-color="#ff0000"/></linearGradient><linearGradient id="g29" gradientUnits="userSpaceOnUse" x1="1172" y1="0" x2="1784" y2="0"><stop offset="0.0008" stop-color="#00ff7a"/><stop offset="0.1560" stop-color="#00ff54"/><stop offset="0.2508" stop-color="#00ff23"/><stop offset="0.2623" stop-color="#00ff1f"/><stop offset="0.2802" stop-color="#12ff30"/><stop offset="0.3064" stop-color="#52ff4e"/><stop offset="0.3799" stop-color="#caff43"/><stop offset="0.4077" stop-color="#fffb3e"/><stop offset="0.4502" stop-color="#ffb027"/><stop offset="0.5090" stop-color="#ff6d15"/><stop offset="0.5891" stop-color="#ff3608"/><stop offset="0.6969" stop-color="#ff1001"/><stop offset="0.8554" stop-color="#ff0100"/><stop offset="1.0008" stop-color="#ff0000"/></linearGradient><linearGradient id="g30" gradientUnits="userSpaceOnUse" x1="1172" y1="0" x2="1802" y2="0"><stop offset="0.0008" stop-color="#00ff7c"/><stop offset="0.1532" stop-color="#00ff57"/><stop offset="0.2437" stop-color="#00ff27"/><stop offset="0.2563" stop-color="#01ff23"/><stop offset="0.2738" stop-color="#14ff36"/><stop offset="0.3008" stop-color="#5bff56"/><stop offset="0.3754" stop-color="#d9ff4c"/><stop offset="0.3944" stop-color="#fffe49"/><stop offset="0.4373" stop-color="#ffb22f"/><stop offset="0.4960" stop-color="#ff6e19"/><stop offset="0.5770" stop-color="#ff360a"/><stop offset="0.6833" stop-color="#ff1102"/><stop offset="0.8405" stop-color="#ff0100"/><stop offset="1.0008" stop-color="#ff0001"/></linearGradient><linearGradient id="g31" gradientUnits="userSpaceOnUse" x1="1172" y1="0" x2="1819" y2="0"><stop offset="0.0008" stop-color="#00ff7f"/><stop offset="0.1491" stop-color="#00ff5a"/><stop offset="0.2372" stop-color="#00ff2a"/><stop offset="0.2481" stop-color="#00ff25"/><stop offset="0.2651" stop-color="#11ff38"/><stop offset="0.2867" stop-color="#49ff55"/><stop offset="0.2975" stop-color="#66ff5f"/><stop offset="0.3717" stop-color="#e7ff55"/><stop offset="0.3841" stop-color="#fffd53"/><stop offset="0.4274" stop-color="#ffb236"/><stop offset="0.4876" stop-color="#ff6e1e"/><stop offset="0.5696" stop-color="#ff350c"/><stop offset="0.6777" stop-color="#ff0f03"/><stop offset="0.8369" stop-color="#ff0000"/><stop offset="1.0008" stop-color="#ff0001"/></linearGradient><linearGradient id="g32" gradientUnits="userSpaceOnUse" x1="1173" y1="0" x2="1837" y2="0"><stop offset="0.0008" stop-color="#00ff81"/><stop offset="0.1453" stop-color="#00ff5d"/><stop offset="0.2297" stop-color="#00ff2e"/><stop offset="0.2417" stop-color="#00ff29"/><stop offset="0.2583" stop-color="#13ff3d"/><stop offset="0.2809" stop-color="#52ff5e"/><stop offset="0.2914" stop-color="#6fff68"/><stop offset="0.3652" stop-color="#f2ff5f"/><stop offset="0.3742" stop-color="#fff95b"/><stop offset="0.4194" stop-color="#ffae3c"/><stop offset="0.4827" stop-color="#ff6921"/><stop offset="0.5670" stop-color="#ff310e"/><stop offset="0.6770" stop-color="#ff0d03"/><stop offset="0.8381" stop-color="#ff0000"/><stop offset="1.0008" stop-color="#ff0002"/></linearGradient><linearGradient id="g33" gradientUnits="userSpaceOnUse" x1="1173" y1="0" x2="1855" y2="0"><stop offset="0.0007" stop-color="#00ff83"/><stop offset="0.1430" stop-color="#00ff5f"/><stop offset="0.2236" stop-color="#00ff32"/><stop offset="0.2353" stop-color="#00ff2d"/><stop offset="0.2515" stop-color="#12ff41"/><stop offset="0.2720" stop-color="#4cff60"/><stop offset="0.2852" stop-color="#76ff71"/><stop offset="0.3600" stop-color="#fcff68"/><stop offset="0.4142" stop-color="#ffa841"/><stop offset="0.4802" stop-color="#ff6424"/><stop offset="0.5682" stop-color="#ff2d0f"/><stop offset="0.6796" stop-color="#ff0a03"/><stop offset="0.8453" stop-color="#ff0000"/><stop offset="1.0007" stop-color="#ff0002"/></linearGradient><linearGradient id="g34" gradientUnits="userSpaceOnUse" x1="1173" y1="0" x2="1871" y2="0"><stop offset="0.0007" stop-color="#00ff86"/><stop offset="0.1411" stop-color="#00ff62"/><stop offset="0.2199" stop-color="#00ff36"/><stop offset="0.2299" stop-color="#00ff30"/><stop offset="0.2457" stop-color="#11ff45"/><stop offset="0.2658" stop-color="#4bff64"/><stop offset="0.2815" stop-color="#7eff7a"/><stop offset="0.3546" stop-color="#fffc71"/><stop offset="0.4004" stop-color="#ffb04c"/><stop offset="0.4663" stop-color="#ff6a2b"/><stop offset="0.5537" stop-color="#ff3013"/><stop offset="0.6626" stop-color="#ff0c05"/><stop offset="0.8116" stop-color="#ff0001"/><stop offset="1.0007" stop-color="#ff0003"/></linearGradient><linearGradient id="g35" gradientUnits="userSpaceOnUse" x1="1173" y1="0" x2="1888" y2="0"><stop offset="0.0007" stop-color="#00ff88"/><stop offset="0.1392" stop-color="#00ff65"/><stop offset="0.2147" stop-color="#00ff3a"/><stop offset="0.2259" stop-color="#00ff35"/><stop offset="0.2413" stop-color="#13ff4b"/><stop offset="0.2622" stop-color="#54ff6d"/><stop offset="0.2776" stop-color="#87ff83"/><stop offset="0.3462" stop-color="#fffb7b"/><stop offset="0.3937" stop-color="#ffaf53"/><stop offset="0.4622" stop-color="#ff672f"/><stop offset="0.5517" stop-color="#ff2e15"/><stop offset="0.6608" stop-color="#ff0a06"/><stop offset="0.7993" stop-color="#ff0001"/><stop offset="1.0007" stop-color="#ff0003"/></linearGradient><linearGradient id="g36" gradientUnits="userSpaceOnUse" x1="1174" y1="0" x2="1906" y2="0"><stop offset="0.0007" stop-color="#00ff8a"/><stop offset="0.1359" stop-color="#00ff68"/><stop offset="0.2097" stop-color="#00ff3d"/><stop offset="0.2193" stop-color="#00ff39"/><stop offset="0.2343" stop-color="#12ff4f"/><stop offset="0.2534" stop-color="#4dff6f"/><stop offset="0.2725" stop-color="#90ff8c"/><stop offset="0.3367" stop-color="#fffb84"/><stop offset="0.3846" stop-color="#ffb05a"/><stop offset="0.4542" stop-color="#ff6734"/><stop offset="0.5458" stop-color="#ff2d17"/><stop offset="0.6551" stop-color="#ff0907"/><stop offset="0.7780" stop-color="#ff0001"/><stop offset="1.0007" stop-color="#ff0004"/></linearGradient><linearGradient id="g37" gradientUnits="userSpaceOnUse" x1="1174" y1="0" x2="1910" y2="0"><stop offset="0.0007" stop-color="#00ff8d"/><stop offset="0.1365" stop-color="#00ff6b"/><stop offset="0.2099" stop-color="#00ff41"/><stop offset="0.2181" stop-color="#00ff3d"/><stop offset="0.2330" stop-color="#11ff54"/><stop offset="0.2520" stop-color="#4cff74"/><stop offset="0.2738" stop-color="#98ff94"/><stop offset="0.3336" stop-color="#fffd8f"/><stop offset="0.3838" stop-color="#ffb062"/><stop offset="0.4572" stop-color="#ff6739"/><stop offset="0.5523" stop-color="#ff2b1a"/><stop offset="0.6678" stop-color="#ff0607"/><stop offset="0.8186" stop-color="#ff0002"/><stop offset="1.0007" stop-color="#ff0004"/></linearGradient><linearGradient id="g38" gradientUnits="userSpaceOnUse" x1="1175" y1="0" x2="1910" y2="0"><stop offset="0.0007" stop-color="#00ff8f"/><stop offset="0.1381" stop-color="#00ff6e"/><stop offset="0.2102" stop-color="#00ff45"/><stop offset="0.2184" stop-color="#00ff43"/><stop offset="0.2333" stop-color="#14ff5a"/><stop offset="0.2537" stop-color="#55ff7d"/><stop offset="0.2755" stop-color="#a0ff9c"/><stop offset="0.3327" stop-color="#fffd98"/><stop offset="0.3844" stop-color="#ffb169"/><stop offset="0.4619" stop-color="#ff663d"/><stop offset="0.5612" stop-color="#ff291c"/><stop offset="0.6878" stop-color="#ff0204"/><stop offset="1.0007" stop-color="#ff0005"/></linearGradient><linearGradient id="g39" gradientUnits="userSpaceOnUse" x1="1175" y1="0" x2="1910" y2="0"><stop offset="0.0007" stop-color="#00ff91"/><stop offset="0.1395" stop-color="#00ff71"/><stop offset="0.2116" stop-color="#00ff49"/><stop offset="0.2197" stop-color="#01ff49"/><stop offset="0.2347" stop-color="#16ff61"/><stop offset="0.2565" stop-color="#5eff86"/><stop offset="0.2769" stop-color="#a5ffa4"/><stop offset="0.3327" stop-color="#fffca1"/><stop offset="0.3871" stop-color="#ffb070"/><stop offset="0.4687" stop-color="#ff6542"/><stop offset="0.5721" stop-color="#ff271e"/><stop offset="0.6850" stop-color="#ff0205"/><stop offset="1.0007" stop-color="#ff0005"/></linearGradient><linearGradient id="g40" gradientUnits="userSpaceOnUse" x1="1175" y1="0" x2="1910" y2="0"><stop offset="0.0007" stop-color="#00ff94"/><stop offset="0.1408" stop-color="#00ff75"/><stop offset="0.2129" stop-color="#00ff4d"/><stop offset="0.2197" stop-color="#01ff4e"/><stop offset="0.2347" stop-color="#15ff66"/><stop offset="0.2551" stop-color="#58ff88"/><stop offset="0.2796" stop-color="#adffac"/><stop offset="0.3327" stop-color="#fffca9"/><stop offset="0.3898" stop-color="#ffb076"/><stop offset="0.4769" stop-color="#ff6245"/><stop offset="0.5844" stop-color="#ff2521"/><stop offset="0.6755" stop-color="#ff0307"/><stop offset="0.8170" stop-color="#ff0003"/><stop offset="1.0007" stop-color="#ff0005"/></linearGradient><linearGradient id="g41" gradientUnits="userSpaceOnUse" x1="1176" y1="0" x2="1910" y2="0"><stop offset="0.0007" stop-color="#00ff96"/><stop offset="0.1424" stop-color="#00ff78"/><stop offset="0.2132" stop-color="#00ff51"/><stop offset="0.2200" stop-color="#01ff54"/><stop offset="0.2350" stop-color="#17ff6d"/><stop offset="0.2582" stop-color="#66ff93"/><stop offset="0.2813" stop-color="#b4ffb3"/><stop offset="0.3317" stop-color="#fffcb0"/><stop offset="0.3917" stop-color="#ffaf7c"/><stop offset="0.4843" stop-color="#ff6049"/><stop offset="0.6328" stop-color="#ff0e13"/><stop offset="0.7132" stop-color="#ff0003"/><stop offset="1.0007" stop-color="#ff0006"/></linearGradient><linearGradient id="g42" gradientUnits="userSpaceOnUse" x1="1176" y1="0" x2="1910" y2="0"><stop offset="0.0007" stop-color="#00ff99"/><stop offset="0.1451" stop-color="#00ff7b"/><stop offset="0.2187" stop-color="#00ff57"/><stop offset="0.2337" stop-color="#13ff6f"/><stop offset="0.2527" stop-color="#50ff8f"/><stop offset="0.2800" stop-color="#b0ffb6"/><stop offset="0.3304" stop-color="#fffeb9"/><stop offset="0.3917" stop-color="#ffb284"/><stop offset="0.4884" stop-color="#ff614e"/><stop offset="0.6410" stop-color="#ff0a11"/><stop offset="0.7323" stop-color="#ff0003"/><stop offset="1.0007" stop-color="#ff0006"/></linearGradient><linearGradient id="g43" gradientUnits="userSpaceOnUse" x1="1177" y1="0" x2="1910" y2="0"><stop offset="0.0007" stop-color="#00ff9b"/><stop offset="0.1467" stop-color="#00ff7e"/><stop offset="0.2176" stop-color="#00ff5c"/><stop offset="0.2326" stop-color="#12ff74"/><stop offset="0.2517" stop-color="#4fff93"/><stop offset="0.2790" stop-color="#b0ffb9"/><stop offset="0.2926" stop-color="#cbffc0"/><stop offset="0.3308" stop-color="#fffbbf"/><stop offset="0.3963" stop-color="#ffaf88"/><stop offset="0.5014" stop-color="#ff5c4f"/><stop offset="0.5859" stop-color="#ff2529"/><stop offset="0.6528" stop-color="#ff060e"/><stop offset="0.7483" stop-color="#ff0004"/><stop offset="1.0007" stop-color="#ff0007"/></linearGradient><linearGradient id="g44" gradientUnits="userSpaceOnUse" x1="1177" y1="0" x2="1910" y2="0"><stop offset="0.0007" stop-color="#00ff9e"/><stop offset="0.1494" stop-color="#00ff81"/><stop offset="0.2176" stop-color="#00ff61"/><stop offset="0.2326" stop-color="#12ff79"/><stop offset="0.2517" stop-color="#4eff98"/><stop offset="0.2790" stop-color="#afffbd"/><stop offset="0.2926" stop-color="#cdffc6"/><stop offset="0.3308" stop-color="#fffbc5"/><stop offset="0.3990" stop-color="#ffae8d"/><stop offset="0.5109" stop-color="#ff5952"/><stop offset="0.5709" stop-color="#ff2f33"/><stop offset="0.6378" stop-color="#ff0a13"/><stop offset="0.7306" stop-color="#ff0004"/><stop offset="1.0007" stop-color="#ff0007"/></linearGradient><linearGradient id="g45" gradientUnits="userSpaceOnUse" x1="1177" y1="0" x2="1910" y2="0"><stop offset="0.0007" stop-color="#00ffa0"/><stop offset="0.1521" stop-color="#00ff85"/><stop offset="0.2190" stop-color="#00ff68"/><stop offset="0.2340" stop-color="#14ff81"/><stop offset="0.2544" stop-color="#57ffa1"/><stop offset="0.2804" stop-color="#b2ffc2"/><stop offset="0.2954" stop-color="#d2ffcc"/><stop offset="0.3308" stop-color="#fffbcb"/><stop offset="0.4004" stop-color="#ffb093"/><stop offset="0.5191" stop-color="#ff5856"/><stop offset="0.6078" stop-color="#ff1520"/><stop offset="0.6787" stop-color="#ff0109"/><stop offset="0.8206" stop-color="#ff0006"/><stop offset="1.0007" stop-color="#ff0007"/></linearGradient><linearGradient id="g46" gradientUnits="userSpaceOnUse" x1="1178" y1="0" x2="1910" y2="0"><stop offset="0.0007" stop-color="#00ffa3"/><stop offset="0.1537" stop-color="#00ff89"/><stop offset="0.2179" stop-color="#00ff6e"/><stop offset="0.2329" stop-color="#13ff86"/><stop offset="0.2520" stop-color="#51ffa4"/><stop offset="0.2794" stop-color="#b2ffc6"/><stop offset="0.2971" stop-color="#d8ffd2"/><stop offset="0.3299" stop-color="#fffbd1"/><stop offset="0.4023" stop-color="#ffb098"/><stop offset="0.5294" stop-color="#ff4e52"/><stop offset="0.6031" stop-color="#ff1623"/><stop offset="0.6742" stop-color="#ff010a"/><stop offset="0.7807" stop-color="#ff0006"/><stop offset="1.0007" stop-color="#ff0008"/></linearGradient><linearGradient id="g47" gradientUnits="userSpaceOnUse" x1="1178" y1="0" x2="1910" y2="0"><stop offset="0.0007" stop-color="#00ffa5"/><stop offset="0.1578" stop-color="#00ff8c"/><stop offset="0.2179" stop-color="#00ff74"/><stop offset="0.2329" stop-color="#12ff8c"/><stop offset="0.2520" stop-color="#50ffa9"/><stop offset="0.2794" stop-color="#b1ffca"/><stop offset="0.2985" stop-color="#dbffd7"/><stop offset="0.3286" stop-color="#fffcd7"/><stop offset="0.4023" stop-color="#ffb29e"/><stop offset="0.5130" stop-color="#ff5c60"/><stop offset="0.5922" stop-color="#ff1b29"/><stop offset="0.6605" stop-color="#ff030e"/><stop offset="0.7411" stop-color="#ff0006"/><stop offset="1.0007" stop-color="#ff0008"/></linearGradient><linearGradient id="g48" gradientUnits="userSpaceOnUse" x1="1179" y1="0" x2="1910" y2="0"><stop offset="0.0007" stop-color="#00ffa8"/><stop offset="0.1607" stop-color="#00ff90"/><stop offset="0.2182" stop-color="#00ff7c"/><stop offset="0.2332" stop-color="#14ff93"/><stop offset="0.2538" stop-color="#59ffb1"/><stop offset="0.2798" stop-color="#b4ffcf"/><stop offset="0.3003" stop-color="#e0ffdc"/><stop offset="0.3276" stop-color="#fffcdc"/><stop offset="0.4042" stop-color="#ffb2a3"/><stop offset="0.4959" stop-color="#ff6a6e"/><stop offset="0.5821" stop-color="#ff1f30"/><stop offset="0.6491" stop-color="#ff0411"/><stop offset="0.7285" stop-color="#ff0006"/><stop offset="1.0007" stop-color="#ff0009"/></linearGradient><linearGradient id="g49" gradientUnits="userSpaceOnUse" x1="1180" y1="0" x2="1910" y2="0"><stop offset="0.0007" stop-color="#00ffab"/><stop offset="0.1651" stop-color="#00ff93"/><stop offset="0.2171" stop-color="#00ff82"/><stop offset="0.2322" stop-color="#14ff99"/><stop offset="0.2514" stop-color="#52ffb5"/><stop offset="0.2788" stop-color="#b4ffd3"/><stop offset="0.3007" stop-color="#e2ffe0"/><stop offset="0.3267" stop-color="#fffce0"/><stop offset="0.4048" stop-color="#ffb2a8"/><stop offset="0.4815" stop-color="#ff767a"/><stop offset="0.5760" stop-color="#ff2134"/><stop offset="0.6418" stop-color="#ff0514"/><stop offset="0.7212" stop-color="#ff0007"/><stop offset="1.0007" stop-color="#ff0009"/></linearGradient><linearGradient id="g50" gradientUnits="userSpaceOnUse" x1="1180" y1="0" x2="1910" y2="0"><stop offset="0.0007" stop-color="#00ffad"/><stop offset="0.1705" stop-color="#00ff97"/><stop offset="0.2171" stop-color="#00ff88"/><stop offset="0.2322" stop-color="#13ff9f"/><stop offset="0.2514" stop-color="#51ffba"/><stop offset="0.2788" stop-color="#b3ffd7"/><stop offset="0.3007" stop-color="#e3ffe4"/><stop offset="0.3267" stop-color="#fffbe4"/><stop offset="0.4062" stop-color="#ffb3ac"/><stop offset="0.4719" stop-color="#ff7d83"/><stop offset="0.5705" stop-color="#ff2438"/><stop offset="0.6363" stop-color="#ff0617"/><stop offset="0.7144" stop-color="#ff0007"/><stop offset="1.0007" stop-color="#ff000a"/></linearGradient><linearGradient id="g51" gradientUnits="userSpaceOnUse" x1="1181" y1="0" x2="1910" y2="0"><stop offset="0.0007" stop-color="#00ffb0"/><stop offset="0.1763" stop-color="#00ff9b"/><stop offset="0.2174" stop-color="#00ff91"/><stop offset="0.2325" stop-color="#15ffa7"/><stop offset="0.2531" stop-color="#5bffc2"/><stop offset="0.2791" stop-color="#b7ffdb"/><stop offset="0.3011" stop-color="#e5ffe8"/><stop offset="0.3258" stop-color="#fffbe8"/><stop offset="0.4067" stop-color="#ffb4b0"/><stop offset="0.4945" stop-color="#ff6472"/><stop offset="0.5768" stop-color="#ff1d35"/><stop offset="0.6440" stop-color="#ff0314"/><stop offset="0.7154" stop-color="#ff0008"/><stop offset="1.0007" stop-color="#ff000a"/></linearGradient><linearGradient id="g52" gradientUnits="userSpaceOnUse" x1="1181" y1="0" x2="1910" y2="0"><stop offset="0.0007" stop-color="#00ffb3"/><stop offset="0.1831" stop-color="#00ff9f"/><stop offset="0.2174" stop-color="#00ff98"/><stop offset="0.2311" stop-color="#11ffac"/><stop offset="0.2490" stop-color="#4affc3"/><stop offset="0.2778" stop-color="#b2ffde"/><stop offset="0.2997" stop-color="#e3ffea"/><stop offset="0.3258" stop-color="#fffbeb"/><stop offset="0.4067" stop-color="#ffb6b5"/><stop offset="0.5645" stop-color="#ff243e"/><stop offset="0.6303" stop-color="#ff061a"/><stop offset="0.7071" stop-color="#ff0009"/><stop offset="1.0007" stop-color="#ff000a"/></linearGradient><linearGradient id="g53" gradientUnits="userSpaceOnUse" x1="1182" y1="0" x2="1910" y2="0"><stop offset="0.0007" stop-color="#00ffb6"/><stop offset="0.1916" stop-color="#00ffa4"/><stop offset="0.2177" stop-color="#01ffa1"/><stop offset="0.2315" stop-color="#13ffb4"/><stop offset="0.2507" stop-color="#53ffcb"/><stop offset="0.2768" stop-color="#b2ffe2"/><stop offset="0.2988" stop-color="#e3ffed"/><stop offset="0.3235" stop-color="#fffcf0"/><stop offset="0.4842" stop-color="#ff6a7c"/><stop offset="0.5694" stop-color="#ff1f3b"/><stop offset="0.6353" stop-color="#ff0418"/><stop offset="0.7067" stop-color="#ff0009"/><stop offset="1.0007" stop-color="#ff000b"/></linearGradient><linearGradient id="g54" gradientUnits="userSpaceOnUse" x1="1183" y1="0" x2="1910" y2="0"><stop offset="0.0007" stop-color="#00ffb8"/><stop offset="0.2029" stop-color="#00ffa8"/><stop offset="0.2166" stop-color="#00ffa8"/><stop offset="0.2304" stop-color="#12ffbb"/><stop offset="0.2497" stop-color="#52ffd1"/><stop offset="0.2772" stop-color="#b5ffe7"/><stop offset="0.2992" stop-color="#e5fff1"/><stop offset="0.3226" stop-color="#fffcf3"/><stop offset="0.4835" stop-color="#ff687d"/><stop offset="0.5660" stop-color="#ff1f3d"/><stop offset="0.6320" stop-color="#ff041a"/><stop offset="0.7022" stop-color="#ff000a"/><stop offset="1.0007" stop-color="#ff000b"/></linearGradient><linearGradient id="g55" gradientUnits="userSpaceOnUse" x1="1183" y1="0" x2="1910" y2="0"><stop offset="0.0007" stop-color="#00ffbb"/><stop offset="0.2166" stop-color="#00ffb0"/><stop offset="0.2304" stop-color="#12ffc2"/><stop offset="0.2483" stop-color="#4bffd5"/><stop offset="0.2758" stop-color="#b1ffea"/><stop offset="0.2978" stop-color="#e3fff3"/><stop offset="0.3226" stop-color="#fffcf5"/><stop offset="0.4849" stop-color="#ff657d"/><stop offset="0.5660" stop-color="#ff1e3e"/><stop offset="0.6320" stop-color="#ff041a"/><stop offset="0.6994" stop-color="#ff000b"/><stop offset="1.0007" stop-color="#ff000c"/></linearGradient><linearGradient id="g56" gradientUnits="userSpaceOnUse" x1="1184" y1="0" x2="1908" y2="0"><stop offset="0.0007" stop-color="#00ffbe"/><stop offset="0.2175" stop-color="#01ffb9"/><stop offset="0.2314" stop-color="#14ffca"/><stop offset="0.2507" stop-color="#55ffdd"/><stop offset="0.2769" stop-color="#b4ffef"/><stop offset="0.2990" stop-color="#e5fff7"/><stop offset="0.3225" stop-color="#fffcf8"/><stop offset="0.4883" stop-color="#ff607c"/><stop offset="0.5670" stop-color="#ff1c3f"/><stop offset="0.6333" stop-color="#ff031b"/><stop offset="0.6982" stop-color="#ff000c"/><stop offset="1.0007" stop-color="#ff000c"/></linearGradient><linearGradient id="g57" gradientUnits="userSpaceOnUse" x1="1184" y1="0" x2="1906" y2="0"><stop offset="0.0007" stop-color="#00ffc1"/><stop offset="0.2181" stop-color="#00ffc2"/><stop offset="0.2320" stop-color="#13ffd1"/><stop offset="0.2514" stop-color="#54ffe3"/><stop offset="0.2777" stop-color="#b4fff3"/><stop offset="0.2999" stop-color="#e5fffa"/><stop offset="0.3234" stop-color="#fffbfb"/><stop offset="0.4924" stop-color="#ff5b7b"/><stop offset="0.5686" stop-color="#ff1b40"/><stop offset="0.6350" stop-color="#ff031b"/><stop offset="0.6974" stop-color="#ff000d"/><stop offset="1.0007" stop-color="#ff000d"/></linearGradient><linearGradient id="g58" gradientUnits="userSpaceOnUse" x1="1184" y1="0" x2="1904" y2="0"><stop offset="0.0007" stop-color="#00ffc4"/><stop offset="0.2201" stop-color="#01ffcc"/><stop offset="0.2340" stop-color="#15ffda"/><stop offset="0.2535" stop-color="#58ffea"/><stop offset="0.2799" stop-color="#b7fff8"/><stop offset="0.3021" stop-color="#e7fffd"/><stop offset="0.3257" stop-color="#fffafc"/><stop offset="0.4993" stop-color="#ff5378"/><stop offset="0.5715" stop-color="#ff1940"/><stop offset="0.6396" stop-color="#ff021b"/><stop offset="0.6979" stop-color="#ff000e"/><stop offset="1.0007" stop-color="#ff000d"/></linearGradient><linearGradient id="g59" gradientUnits="userSpaceOnUse" x1="1185" y1="0" x2="1902" y2="0"><stop offset="0.0007" stop-color="#00ffc7"/><stop offset="0.2183" stop-color="#00ffd3"/><stop offset="0.2322" stop-color="#11ffe1"/><stop offset="0.2503" stop-color="#4cffee"/><stop offset="0.2782" stop-color="#b2fffb"/><stop offset="0.2992" stop-color="#e2feff"/><stop offset="0.3285" stop-color="#fff6fc"/><stop offset="0.5279" stop-color="#ff3762"/><stop offset="0.5934" stop-color="#ff0d33"/><stop offset="0.6729" stop-color="#ff0010"/><stop offset="1.0007" stop-color="#ff000e"/></linearGradient><linearGradient id="g60" gradientUnits="userSpaceOnUse" x1="1186" y1="0" x2="1900" y2="0"><stop offset="0.0007" stop-color="#00ffca"/><stop offset="0.2080" stop-color="#00ffd9"/><stop offset="0.2262" stop-color="#06ffe4"/><stop offset="0.2416" stop-color="#2cfff0"/><stop offset="0.2780" stop-color="#b2ffff"/><stop offset="0.3004" stop-color="#e1fbff"/><stop offset="0.3312" stop-color="#fff3fc"/><stop offset="0.5301" stop-color="#ff3462"/><stop offset="0.5959" stop-color="#ff0c33"/><stop offset="0.6800" stop-color="#ff0010"/><stop offset="1.0007" stop-color="#ff000e"/></linearGradient><linearGradient id="g61" gradientUnits="userSpaceOnUse" x1="1187" y1="0" x2="1898" y2="0"><stop offset="0.0007" stop-color="#00ffcd"/><stop offset="0.1920" stop-color="#00ffde"/><stop offset="0.2243" stop-color="#04ffec"/><stop offset="0.2384" stop-color="#22fff5"/><stop offset="0.2736" stop-color="#a1fbff"/><stop offset="0.2947" stop-color="#d5f8ff"/><stop offset="0.3270" stop-color="#fcf4ff"/><stop offset="0.4662" stop-color="#ff7198"/><stop offset="0.5520" stop-color="#ff2252"/><stop offset="0.6181" stop-color="#ff0528"/><stop offset="0.6871" stop-color="#ff0011"/><stop offset="1.0007" stop-color="#ff000f"/></linearGradient><linearGradient id="g62" gradientUnits="userSpaceOnUse" x1="1188" y1="0" x2="1896" y2="0"><stop offset="0.0007" stop-color="#00ffd0"/><stop offset="0.1801" stop-color="#00ffe3"/><stop offset="0.2239" stop-color="#04fff5"/><stop offset="0.2380" stop-color="#21fffd"/><stop offset="0.2790" stop-color="#aff6ff"/><stop offset="0.3016" stop-color="#def4ff"/><stop offset="0.3369" stop-color="#ffedfc"/><stop offset="0.5431" stop-color="#ff285b"/><stop offset="0.6081" stop-color="#ff072e"/><stop offset="0.6815" stop-color="#ff0012"/><stop offset="1.0007" stop-color="#ff0010"/></linearGradient><linearGradient id="g63" gradientUnits="userSpaceOnUse" x1="1189" y1="0" x2="1894" y2="0"><stop offset="0.0007" stop-color="#00ffd4"/><stop offset="0.1695" stop-color="#00ffe8"/><stop offset="0.2234" stop-color="#03ffff"/><stop offset="0.2390" stop-color="#23f8ff"/><stop offset="0.2801" stop-color="#aff2ff"/><stop offset="0.3028" stop-color="#def1ff"/><stop offset="0.3397" stop-color="#ffe9fc"/><stop offset="0.5411" stop-color="#ff285e"/><stop offset="0.6064" stop-color="#ff0730"/><stop offset="0.6801" stop-color="#ff0013"/><stop offset="1.0007" stop-color="#ff0010"/></linearGradient><linearGradient id="g64" gradientUnits="userSpaceOnUse" x1="1189" y1="0" x2="1892" y2="0"><stop offset="0.0007" stop-color="#00ffd7"/><stop offset="0.1629" stop-color="#00ffed"/><stop offset="0.2155" stop-color="#00faff"/><stop offset="0.2297" stop-color="#0af4ff"/><stop offset="0.2468" stop-color="#37efff"/><stop offset="0.2809" stop-color="#aceeff"/><stop offset="0.3037" stop-color="#dbefff"/><stop offset="0.3421" stop-color="#ffe8fe"/><stop offset="0.5384" stop-color="#ff2962"/><stop offset="0.6038" stop-color="#ff0834"/><stop offset="0.6792" stop-color="#ff0014"/><stop offset="1.0007" stop-color="#ff0011"/></linearGradient><linearGradient id="g65" gradientUnits="userSpaceOnUse" x1="1190" y1="0" x2="1891" y2="0"><stop offset="0.0007" stop-color="#00ffda"/><stop offset="0.1548" stop-color="#00fff2"/><stop offset="0.1990" stop-color="#00faff"/><stop offset="0.2261" stop-color="#05ecff"/><stop offset="0.2418" stop-color="#27e9ff"/><stop offset="0.2817" stop-color="#adeaff"/><stop offset="0.3046" stop-color="#dbecff"/><stop offset="0.3459" stop-color="#ffe3fc"/><stop offset="0.5357" stop-color="#ff2a65"/><stop offset="0.6013" stop-color="#ff0836"/><stop offset="0.6769" stop-color="#ff0015"/><stop offset="1.0007" stop-color="#ff0011"/></linearGradient><linearGradient id="g66" gradientUnits="userSpaceOnUse" x1="1190" y1="0" x2="1889" y2="0"><stop offset="0.0007" stop-color="#00ffdd"/><stop offset="0.1495" stop-color="#00fff6"/><stop offset="0.1867" stop-color="#00f9ff"/><stop offset="0.2268" stop-color="#05e3ff"/><stop offset="0.2425" stop-color="#25e2ff"/><stop offset="0.2840" stop-color="#ade7ff"/><stop offset="0.3069" stop-color="#dae9ff"/><stop offset="0.3498" stop-color="#ffdffc"/><stop offset="0.5329" stop-color="#ff2b6a"/><stop offset="0.5973" stop-color="#ff093a"/><stop offset="0.6745" stop-color="#ff0017"/><stop offset="1.0007" stop-color="#ff0012"/></linearGradient><linearGradient id="g67" gradientUnits="userSpaceOnUse" x1="1191" y1="0" x2="1887" y2="0"><stop offset="0.0007" stop-color="#00ffe1"/><stop offset="0.1430" stop-color="#00fffb"/><stop offset="0.1861" stop-color="#00f1ff"/><stop offset="0.2263" stop-color="#04dbff"/><stop offset="0.2421" stop-color="#23dcff"/><stop offset="0.2838" stop-color="#aae3ff"/><stop offset="0.3068" stop-color="#d8e7ff"/><stop offset="0.3527" stop-color="#ffdcfd"/><stop offset="0.5309" stop-color="#ff2c6d"/><stop offset="0.5955" stop-color="#ff093d"/><stop offset="0.6731" stop-color="#ff0018"/><stop offset="1.0007" stop-color="#ff0012"/></linearGradient><linearGradient id="g68" gradientUnits="userSpaceOnUse" x1="1192" y1="0" x2="1885" y2="0"><stop offset="0.0007" stop-color="#00ffe4"/><stop offset="0.1479" stop-color="#00fbff"/><stop offset="0.2244" stop-color="#02d3ff"/><stop offset="0.2403" stop-color="#1dd5ff"/><stop offset="0.2864" stop-color="#afe1ff"/><stop offset="0.3110" stop-color="#dbe4ff"/><stop offset="0.3571" stop-color="#ffd7fb"/><stop offset="0.5289" stop-color="#ff2c70"/><stop offset="0.5938" stop-color="#ff093f"/><stop offset="0.6717" stop-color="#ff0019"/><stop offset="1.0007" stop-color="#ff0013"/></linearGradient><linearGradient id="g69" gradientUnits="userSpaceOnUse" x1="1192" y1="0" x2="1883" y2="0"><stop offset="0.0007" stop-color="#00ffe8"/><stop offset="0.1324" stop-color="#00fbff"/><stop offset="0.2091" stop-color="#00d3ff"/><stop offset="0.2265" stop-color="#03cbff"/><stop offset="0.2424" stop-color="#1fcfff"/><stop offset="0.2873" stop-color="#acddff"/><stop offset="0.3119" stop-color="#d9e2ff"/><stop offset="0.3611" stop-color="#ffd3fb"/><stop offset="0.5260" stop-color="#ff2e75"/><stop offset="0.5912" stop-color="#ff0943"/><stop offset="0.6693" stop-color="#ff001b"/><stop offset="1.0007" stop-color="#ff0014"/></linearGradient><linearGradient id="g70" gradientUnits="userSpaceOnUse" x1="1193" y1="0" x2="1881" y2="0"><stop offset="0.0007" stop-color="#00ffeb"/><stop offset="0.1156" stop-color="#00fbff"/><stop offset="0.1999" stop-color="#00d2ff"/><stop offset="0.2246" stop-color="#02c3ff"/><stop offset="0.2406" stop-color="#1ac8ff"/><stop offset="0.2885" stop-color="#addaff"/><stop offset="0.3132" stop-color="#d9e0ff"/><stop offset="0.3641" stop-color="#ffcffb"/><stop offset="0.5240" stop-color="#ff2e79"/><stop offset="0.5894" stop-color="#ff0a45"/><stop offset="0.6679" stop-color="#ff001c"/><stop offset="1.0007" stop-color="#ff0014"/></linearGradient><linearGradient id="g71" gradientUnits="userSpaceOnUse" x1="1193" y1="0" x2="1879" y2="0"><stop offset="0.0007" stop-color="#00ffef"/><stop offset="0.0999" stop-color="#00fbff"/><stop offset="0.1902" stop-color="#00d2ff"/><stop offset="0.2238" stop-color="#01bcff"/><stop offset="0.2398" stop-color="#15c2ff"/><stop offset="0.2646" stop-color="#5fcdff"/><stop offset="0.2923" stop-color="#b1d8ff"/><stop offset="0.3171" stop-color="#daddff"/><stop offset="0.3681" stop-color="#ffccfb"/><stop offset="0.5211" stop-color="#ff307e"/><stop offset="0.5867" stop-color="#ff0a49"/><stop offset="0.6669" stop-color="#ff001e"/><stop offset="1.0007" stop-color="#ff0015"/></linearGradient><linearGradient id="g72" gradientUnits="userSpaceOnUse" x1="1194" y1="0" x2="1877" y2="0"><stop offset="0.0007" stop-color="#00fff2"/><stop offset="0.0842" stop-color="#00faff"/><stop offset="0.1808" stop-color="#00d2ff"/><stop offset="0.2233" stop-color="#00b4ff"/><stop offset="0.2394" stop-color="#13bcff"/><stop offset="0.2628" stop-color="#57c8ff"/><stop offset="0.2906" stop-color="#abd5ff"/><stop offset="0.3155" stop-color="#d7dbff"/><stop offset="0.3712" stop-color="#ffc8fb"/><stop offset="0.5190" stop-color="#ff3181"/><stop offset="0.5835" stop-color="#ff0b4d"/><stop offset="0.6654" stop-color="#ff0020"/><stop offset="1.0007" stop-color="#ff0016"/></linearGradient><linearGradient id="g73" gradientUnits="userSpaceOnUse" x1="1195" y1="0" x2="1875" y2="0"><stop offset="0.0007" stop-color="#00fff6"/><stop offset="0.0699" stop-color="#00f9ff"/><stop offset="0.1728" stop-color="#00d0ff"/><stop offset="0.2243" stop-color="#01aeff"/><stop offset="0.2404" stop-color="#15b7ff"/><stop offset="0.2654" stop-color="#5ec5ff"/><stop offset="0.2934" stop-color="#afd3ff"/><stop offset="0.3184" stop-color="#d8d9ff"/><stop offset="0.3743" stop-color="#ffc3fb"/><stop offset="0.5169" stop-color="#ff3185"/><stop offset="0.5816" stop-color="#ff0b50"/><stop offset="0.6640" stop-color="#ff0021"/><stop offset="1.0007" stop-color="#ff0016"/></linearGradient><linearGradient id="g74" gradientUnits="userSpaceOnUse" x1="1196" y1="0" x2="1873" y2="0"><stop offset="0.0007" stop-color="#00fffa"/><stop offset="0.0687" stop-color="#00f5ff"/><stop offset="0.1721" stop-color="#00cbff"/><stop offset="0.2238" stop-color="#01a8ff"/><stop offset="0.2400" stop-color="#14b1ff"/><stop offset="0.2637" stop-color="#56c0ff"/><stop offset="0.2932" stop-color="#acd0ff"/><stop offset="0.3183" stop-color="#d6d7ff"/><stop offset="0.3774" stop-color="#ffbffb"/><stop offset="0.5148" stop-color="#ff3289"/><stop offset="0.5798" stop-color="#ff0b53"/><stop offset="0.6625" stop-color="#ff0023"/><stop offset="1.0007" stop-color="#ff0017"/></linearGradient><linearGradient id="g75" gradientUnits="userSpaceOnUse" x1="1197" y1="0" x2="1871" y2="0"><stop offset="0.0007" stop-color="#00fffe"/><stop offset="0.1239" stop-color="#00ddff"/><stop offset="0.2040" stop-color="#00afff"/><stop offset="0.2233" stop-color="#00a1ff"/><stop offset="0.2396" stop-color="#12acff"/><stop offset="0.2634" stop-color="#54bbff"/><stop offset="0.2930" stop-color="#aacdff"/><stop offset="0.3182" stop-color="#d4d5ff"/><stop offset="0.3806" stop-color="#ffbbfb"/><stop offset="0.5126" stop-color="#ff328d"/><stop offset="0.5779" stop-color="#ff0b56"/><stop offset="0.6610" stop-color="#ff0025"/><stop offset="1.0007" stop-color="#ff0018"/></linearGradient><linearGradient id="g76" gradientUnits="userSpaceOnUse" x1="1198" y1="0" x2="1869" y2="0"><stop offset="0.0007" stop-color="#00fdff"/><stop offset="0.1319" stop-color="#00d5ff"/><stop offset="0.2094" stop-color="#00a4ff"/><stop offset="0.2243" stop-color="#019cff"/><stop offset="0.2422" stop-color="#17a8ff"/><stop offset="0.2705" stop-color="#69bcff"/><stop offset="0.2973" stop-color="#b1ccff"/><stop offset="0.3212" stop-color="#d5d2ff"/><stop offset="0.3838" stop-color="#ffb6fb"/><stop offset="0.5104" stop-color="#ff3391"/><stop offset="0.5760" stop-color="#ff0b59"/><stop offset="0.6595" stop-color="#ff0027"/><stop offset="1.0007" stop-color="#ff0019"/></linearGradient><linearGradient id="g77" gradientUnits="userSpaceOnUse" x1="1199" y1="0" x2="1867" y2="0"><stop offset="0.0007" stop-color="#00f9ff"/><stop offset="0.1310" stop-color="#00d0ff"/><stop offset="0.2088" stop-color="#009fff"/><stop offset="0.2238" stop-color="#0196ff"/><stop offset="0.2418" stop-color="#15a3ff"/><stop offset="0.2687" stop-color="#61b8ff"/><stop offset="0.2972" stop-color="#afc9ff"/><stop offset="0.3211" stop-color="#d3cfff"/><stop offset="0.3870" stop-color="#ffb1fb"/><stop offset="0.5082" stop-color="#ff3395"/><stop offset="0.5741" stop-color="#ff0c5d"/><stop offset="0.6579" stop-color="#ff0028"/><stop offset="1.0007" stop-color="#ff0019"/></linearGradient><linearGradient id="g78" gradientUnits="userSpaceOnUse" x1="1199" y1="0" x2="1865" y2="0"><stop offset="0.0008" stop-color="#00f5ff"/><stop offset="0.1314" stop-color="#00ccff"/><stop offset="0.2095" stop-color="#009aff"/><stop offset="0.2245" stop-color="#0091ff"/><stop offset="0.2425" stop-color="#149eff"/><stop offset="0.2680" stop-color="#5ab3ff"/><stop offset="0.2965" stop-color="#a9c6ff"/><stop offset="0.3206" stop-color="#d0cdff"/><stop offset="0.3911" stop-color="#ffadfb"/><stop offset="0.5068" stop-color="#ff3499"/><stop offset="0.5713" stop-color="#ff0c61"/><stop offset="0.6539" stop-color="#ff002b"/><stop offset="1.0008" stop-color="#ff001a"/></linearGradient><linearGradient id="g79" gradientUnits="userSpaceOnUse" x1="1200" y1="0" x2="1863" y2="0"><stop offset="0.0008" stop-color="#00f2ff"/><stop offset="0.1305" stop-color="#00c7ff"/><stop offset="0.2089" stop-color="#0095ff"/><stop offset="0.2240" stop-color="#008bff"/><stop offset="0.2421" stop-color="#139aff"/><stop offset="0.2662" stop-color="#53aeff"/><stop offset="0.2964" stop-color="#a7c3ff"/><stop offset="0.3205" stop-color="#cecbff"/><stop offset="0.3944" stop-color="#ffa8fb"/><stop offset="0.5060" stop-color="#ff339b"/><stop offset="0.5709" stop-color="#ff0c63"/><stop offset="0.6554" stop-color="#ff002c"/><stop offset="1.0008" stop-color="#ff001b"/></linearGradient><linearGradient id="g80" gradientUnits="userSpaceOnUse" x1="1200" y1="0" x2="1861" y2="0"><stop offset="0.0008" stop-color="#00eeff"/><stop offset="0.1309" stop-color="#00c3ff"/><stop offset="0.2110" stop-color="#008fff"/><stop offset="0.2247" stop-color="#0086ff"/><stop offset="0.2428" stop-color="#1295ff"/><stop offset="0.2670" stop-color="#50aaff"/><stop offset="0.2988" stop-color="#a8c1ff"/><stop offset="0.3215" stop-color="#ccc9ff"/><stop offset="0.3971" stop-color="#ffa4fc"/><stop offset="0.5045" stop-color="#ff34a0"/><stop offset="0.5696" stop-color="#ff0c67"/><stop offset="0.6528" stop-color="#ff002f"/><stop offset="1.0008" stop-color="#ff001c"/></linearGradient><linearGradient id="g81" gradientUnits="userSpaceOnUse" x1="1201" y1="0" x2="1859" y2="0"><stop offset="0.0008" stop-color="#00ebff"/><stop offset="0.1315" stop-color="#00bfff"/><stop offset="0.2120" stop-color="#008aff"/><stop offset="0.2257" stop-color="#0082ff"/><stop offset="0.2439" stop-color="#1392ff"/><stop offset="0.2698" stop-color="#57a9ff"/><stop offset="0.3002" stop-color="#a9c0ff"/><stop offset="0.3214" stop-color="#cac7ff"/><stop offset="0.4005" stop-color="#ff9ffc"/><stop offset="0.5038" stop-color="#ff33a3"/><stop offset="0.5691" stop-color="#ff0c69"/><stop offset="0.6527" stop-color="#ff0031"/><stop offset="0.9947" stop-color="#ff001d"/><stop offset="1.0008" stop-color="#ff001c"/></linearGradient><linearGradient id="g82" gradientUnits="userSpaceOnUse" x1="1202" y1="0" x2="1858" y2="0"><stop offset="0.0008" stop-color="#00e7ff"/><stop offset="0.1303" stop-color="#00bbff"/><stop offset="0.2111" stop-color="#0086ff"/><stop offset="0.2248" stop-color="#007dff"/><stop offset="0.2431" stop-color="#128dff"/><stop offset="0.2675" stop-color="#50a4ff"/><stop offset="0.2995" stop-color="#a6bdff"/><stop offset="0.3209" stop-color="#c8c4ff"/><stop offset="0.4017" stop-color="#ff9cfe"/><stop offset="0.5008" stop-color="#ff34a7"/><stop offset="0.5663" stop-color="#ff0c6d"/><stop offset="0.6502" stop-color="#ff0033"/><stop offset="0.9703" stop-color="#ff001e"/><stop offset="1.0008" stop-color="#ff001d"/></linearGradient><linearGradient id="g83" gradientUnits="userSpaceOnUse" x1="1203" y1="0" x2="1856" y2="0"><stop offset="0.0008" stop-color="#00e4ff"/><stop offset="0.1309" stop-color="#00b6ff"/><stop offset="0.2121" stop-color="#0080ff"/><stop offset="0.2243" stop-color="#0078ff"/><stop offset="0.2427" stop-color="#1189ff"/><stop offset="0.2672" stop-color="#4da0ff"/><stop offset="0.2994" stop-color="#a4baff"/><stop offset="0.3208" stop-color="#c6c2ff"/><stop offset="0.4051" stop-color="#ff96fe"/><stop offset="0.5000" stop-color="#ff33aa"/><stop offset="0.5643" stop-color="#ff0c70"/><stop offset="0.6485" stop-color="#ff0035"/><stop offset="0.9502" stop-color="#ff0020"/><stop offset="1.0008" stop-color="#ff001e"/></linearGradient><linearGradient id="g84" gradientUnits="userSpaceOnUse" x1="1203" y1="0" x2="1854" y2="0"><stop offset="0.0008" stop-color="#00e1ff"/><stop offset="0.1313" stop-color="#00b2ff"/><stop offset="0.2143" stop-color="#007bff"/><stop offset="0.2266" stop-color="#0075ff"/><stop offset="0.2450" stop-color="#1286ff"/><stop offset="0.2696" stop-color="#4f9eff"/><stop offset="0.3018" stop-color="#a5b9ff"/><stop offset="0.3218" stop-color="#c4c0ff"/><stop offset="0.4094" stop-color="#ff91fe"/><stop offset="0.5015" stop-color="#ff31ac"/><stop offset="0.5661" stop-color="#ff0b72"/><stop offset="0.6475" stop-color="#ff0038"/><stop offset="0.9316" stop-color="#ff0021"/><stop offset="1.0008" stop-color="#ff001f"/></linearGradient><linearGradient id="g85" gradientUnits="userSpaceOnUse" x1="1204" y1="0" x2="1852" y2="0"><stop offset="0.0008" stop-color="#00ddff"/><stop offset="0.1319" stop-color="#00aeff"/><stop offset="0.2153" stop-color="#0076ff"/><stop offset="0.2261" stop-color="#0071ff"/><stop offset="0.2446" stop-color="#1182ff"/><stop offset="0.2693" stop-color="#4d9bff"/><stop offset="0.3017" stop-color="#a3b6ff"/><stop offset="0.3218" stop-color="#c2bdff"/><stop offset="0.4113" stop-color="#ff8dff"/><stop offset="0.5008" stop-color="#ff30af"/><stop offset="0.5656" stop-color="#ff0b74"/><stop offset="0.6474" stop-color="#ff003a"/><stop offset="0.9190" stop-color="#ff0023"/><stop offset="1.0008" stop-color="#ff0020"/></linearGradient><linearGradient id="g86" gradientUnits="userSpaceOnUse" x1="1205" y1="0" x2="1850" y2="0"><stop offset="0.0008" stop-color="#00daff"/><stop offset="0.1310" stop-color="#00abff"/><stop offset="0.2147" stop-color="#0073ff"/><stop offset="0.2256" stop-color="#006cff"/><stop offset="0.2442" stop-color="#107eff"/><stop offset="0.2690" stop-color="#4b97ff"/><stop offset="0.3031" stop-color="#a4b5ff"/><stop offset="0.3217" stop-color="#c0bbff"/><stop offset="0.4147" stop-color="#ff87ff"/><stop offset="0.5000" stop-color="#ff2fb2"/><stop offset="0.5651" stop-color="#ff0a77"/><stop offset="0.6457" stop-color="#ff003c"/><stop offset="0.9031" stop-color="#ff0025"/><stop offset="1.0008" stop-color="#ff0021"/></linearGradient><linearGradient id="g87" gradientUnits="userSpaceOnUse" x1="1206" y1="0" x2="1848" y2="0"><stop offset="0.0008" stop-color="#00d6ff"/><stop offset="0.1316" stop-color="#00a6ff"/><stop offset="0.2173" stop-color="#006dff"/><stop offset="0.2266" stop-color="#006aff"/><stop offset="0.2453" stop-color="#117cff"/><stop offset="0.2702" stop-color="#4d95ff"/><stop offset="0.3045" stop-color="#a5b4ff"/><stop offset="0.3217" stop-color="#bdb8ff"/><stop offset="0.4167" stop-color="#fe83ff"/><stop offset="0.5023" stop-color="#ff2cb3"/><stop offset="0.5662" stop-color="#ff0978"/><stop offset="0.6441" stop-color="#ff003f"/><stop offset="0.8871" stop-color="#ff0026"/><stop offset="1.0008" stop-color="#ff0022"/></linearGradient><linearGradient id="g88" gradientUnits="userSpaceOnUse" x1="1207" y1="0" x2="1846" y2="0"><stop offset="0.0008" stop-color="#00d3ff"/><stop offset="0.1322" stop-color="#00a2ff"/><stop offset="0.2183" stop-color="#0068ff"/><stop offset="0.2277" stop-color="#0167ff"/><stop offset="0.2480" stop-color="#167bff"/><stop offset="0.2778" stop-color="#619aff"/><stop offset="0.3075" stop-color="#a9b3ff"/><stop offset="0.3232" stop-color="#bcb5ff"/><stop offset="0.4202" stop-color="#fe7dff"/><stop offset="0.5031" stop-color="#ff2ab4"/><stop offset="0.5673" stop-color="#ff0879"/><stop offset="0.6440" stop-color="#ff0042"/><stop offset="0.8787" stop-color="#ff0028"/><stop offset="1.0008" stop-color="#ff0022"/></linearGradient><linearGradient id="g89" gradientUnits="userSpaceOnUse" x1="1208" y1="0" x2="1844" y2="0"><stop offset="0.0008" stop-color="#00d0ff"/><stop offset="0.1329" stop-color="#009eff"/><stop offset="0.2193" stop-color="#0064ff"/><stop offset="0.2272" stop-color="#0063ff"/><stop offset="0.2476" stop-color="#1478ff"/><stop offset="0.2759" stop-color="#5a95ff"/><stop offset="0.3074" stop-color="#a7b1ff"/><stop offset="0.3231" stop-color="#bab3ff"/><stop offset="0.4206" stop-color="#fb7aff"/><stop offset="0.4835" stop-color="#ff39ca"/><stop offset="0.5480" stop-color="#ff0f8d"/><stop offset="0.6266" stop-color="#ff004c"/><stop offset="0.6879" stop-color="#ff003c"/><stop offset="0.9819" stop-color="#ff0024"/><stop offset="1.0008" stop-color="#ff0023"/></linearGradient><linearGradient id="g90" gradientUnits="userSpaceOnUse" x1="1209" y1="0" x2="1842" y2="0"><stop offset="0.0008" stop-color="#00cdff"/><stop offset="0.1335" stop-color="#009aff"/><stop offset="0.2220" stop-color="#005eff"/><stop offset="0.2425" stop-color="#0c6fff"/><stop offset="0.2646" stop-color="#3a87ff"/><stop offset="0.3041" stop-color="#9facff"/><stop offset="0.3199" stop-color="#b6b2ff"/><stop offset="0.4194" stop-color="#f777ff"/><stop offset="0.4368" stop-color="#ff67f8"/><stop offset="0.5095" stop-color="#ff23b4"/><stop offset="0.5742" stop-color="#ff0678"/><stop offset="0.6422" stop-color="#ff0047"/><stop offset="0.8570" stop-color="#ff002c"/><stop offset="1.0008" stop-color="#ff0024"/></linearGradient><linearGradient id="g91" gradientUnits="userSpaceOnUse" x1="1210" y1="0" x2="1840" y2="0"><stop offset="0.0008" stop-color="#00caff"/><stop offset="0.1325" stop-color="#0097ff"/><stop offset="0.2214" stop-color="#005bff"/><stop offset="0.2421" stop-color="#0b6cff"/><stop offset="0.2643" stop-color="#3883ff"/><stop offset="0.3056" stop-color="#a0abff"/><stop offset="0.3198" stop-color="#b4afff"/><stop offset="0.4214" stop-color="#f573ff"/><stop offset="0.4389" stop-color="#ff63f9"/><stop offset="0.5103" stop-color="#ff22b6"/><stop offset="0.5754" stop-color="#ff0579"/><stop offset="0.6405" stop-color="#ff004a"/><stop offset="0.8452" stop-color="#ff002e"/><stop offset="1.0008" stop-color="#ff0025"/></linearGradient><linearGradient id="g92" gradientUnits="userSpaceOnUse" x1="1211" y1="0" x2="1838" y2="0"><stop offset="0.0008" stop-color="#00c6ff"/><stop offset="0.1332" stop-color="#0094ff"/><stop offset="0.2257" stop-color="#0058ff"/><stop offset="0.2464" stop-color="#116dff"/><stop offset="0.2719" stop-color="#4a89ff"/><stop offset="0.3070" stop-color="#a1aaff"/><stop offset="0.3198" stop-color="#b2adff"/><stop offset="0.4234" stop-color="#f46eff"/><stop offset="0.4426" stop-color="#ff5df9"/><stop offset="0.5128" stop-color="#ff1fb6"/><stop offset="0.5797" stop-color="#ff0478"/><stop offset="0.6388" stop-color="#ff004d"/><stop offset="0.8349" stop-color="#ff0030"/><stop offset="1.0008" stop-color="#ff0026"/></linearGradient><linearGradient id="g93" gradientUnits="userSpaceOnUse" x1="1211" y1="0" x2="1836" y2="0"><stop offset="0.0008" stop-color="#00c4ff"/><stop offset="0.1352" stop-color="#0090ff"/><stop offset="0.2264" stop-color="#0055ff"/><stop offset="0.2472" stop-color="#106aff"/><stop offset="0.2728" stop-color="#4886ff"/><stop offset="0.3080" stop-color="#9fa8ff"/><stop offset="0.3208" stop-color="#b0abff"/><stop offset="0.4264" stop-color="#f269ff"/><stop offset="0.4456" stop-color="#ff59fb"/><stop offset="0.5144" stop-color="#ff1db9"/><stop offset="0.5816" stop-color="#ff0379"/><stop offset="0.6376" stop-color="#ff0050"/><stop offset="0.8248" stop-color="#ff0033"/><stop offset="1.0008" stop-color="#ff0027"/></linearGradient><linearGradient id="g94" gradientUnits="userSpaceOnUse" x1="1212" y1="0" x2="1834" y2="0"><stop offset="0.0008" stop-color="#00c1ff"/><stop offset="0.1359" stop-color="#008cff"/><stop offset="0.2275" stop-color="#0053ff"/><stop offset="0.2484" stop-color="#1168ff"/><stop offset="0.2757" stop-color="#4f86ff"/><stop offset="0.3095" stop-color="#a0a7ff"/><stop offset="0.3240" stop-color="#b0a7ff"/><stop offset="0.4317" stop-color="#f362ff"/><stop offset="0.4510" stop-color="#ff52f9"/><stop offset="0.5185" stop-color="#ff1ab8"/><stop offset="0.5860" stop-color="#ff0378"/><stop offset="0.6375" stop-color="#ff0053"/><stop offset="0.8191" stop-color="#ff0035"/><stop offset="1.0008" stop-color="#ff0028"/></linearGradient><linearGradient id="g95" gradientUnits="userSpaceOnUse" x1="1213" y1="0" x2="1832" y2="0"><stop offset="0.0008" stop-color="#00beff"/><stop offset="0.1365" stop-color="#0089ff"/><stop offset="0.2270" stop-color="#0050ff"/><stop offset="0.2480" stop-color="#1065ff"/><stop offset="0.2738" stop-color="#4882ff"/><stop offset="0.3110" stop-color="#a1a6ff"/><stop offset="0.3417" stop-color="#b79bff"/><stop offset="0.4370" stop-color="#f55cff"/><stop offset="0.4548" stop-color="#ff4cf9"/><stop offset="0.5210" stop-color="#ff17b8"/><stop offset="0.5905" stop-color="#ff0277"/><stop offset="0.6357" stop-color="#ff0056"/><stop offset="0.8086" stop-color="#ff0037"/><stop offset="1.0008" stop-color="#ff0029"/></linearGradient><linearGradient id="g96" gradientUnits="userSpaceOnUse" x1="1214" y1="0" x2="1830" y2="0"><stop offset="0.0008" stop-color="#00bbff"/><stop offset="0.1372" stop-color="#0085ff"/><stop offset="0.2265" stop-color="#004dff"/><stop offset="0.2476" stop-color="#0f62ff"/><stop offset="0.2735" stop-color="#467fff"/><stop offset="0.3109" stop-color="#a0a3ff"/><stop offset="0.3531" stop-color="#bb92ff"/><stop offset="0.4424" stop-color="#f655ff"/><stop offset="0.4586" stop-color="#ff47f9"/><stop offset="0.5235" stop-color="#ff15b9"/><stop offset="0.5950" stop-color="#ff0175"/><stop offset="0.6356" stop-color="#ff0059"/><stop offset="0.8044" stop-color="#ff0039"/><stop offset="1.0008" stop-color="#ff002a"/></linearGradient><linearGradient id="g97" gradientUnits="userSpaceOnUse" x1="1215" y1="0" x2="1828" y2="0"><stop offset="0.0008" stop-color="#00b8ff"/><stop offset="0.1378" stop-color="#0082ff"/><stop offset="0.2276" stop-color="#004bff"/><stop offset="0.2488" stop-color="#1161ff"/><stop offset="0.2765" stop-color="#4d7fff"/><stop offset="0.3124" stop-color="#a1a2ff"/><stop offset="0.4038" stop-color="#d66eff"/><stop offset="0.4592" stop-color="#ff45fc"/><stop offset="0.5245" stop-color="#ff14bb"/><stop offset="0.5962" stop-color="#ff0177"/><stop offset="0.6338" stop-color="#ff005d"/><stop offset="0.7953" stop-color="#ff003c"/><stop offset="1.0008" stop-color="#ff002b"/></linearGradient><linearGradient id="g98" gradientUnits="userSpaceOnUse" x1="1216" y1="0" x2="1827" y2="0"><stop offset="0.0008" stop-color="#00b5ff"/><stop offset="0.1383" stop-color="#007fff"/><stop offset="0.2267" stop-color="#0048ff"/><stop offset="0.2480" stop-color="#105eff"/><stop offset="0.2741" stop-color="#467bff"/><stop offset="0.3118" stop-color="#9fa0ff"/><stop offset="0.4100" stop-color="#d766ff"/><stop offset="0.4624" stop-color="#ff3ffc"/><stop offset="0.5262" stop-color="#ff12bc"/><stop offset="0.5998" stop-color="#ff0175"/><stop offset="0.6342" stop-color="#ff005f"/><stop offset="0.7930" stop-color="#ff003e"/><stop offset="1.0008" stop-color="#ff002c"/></linearGradient><linearGradient id="g99" gradientUnits="userSpaceOnUse" x1="1217" y1="0" x2="1825" y2="0"><stop offset="0.0008" stop-color="#00b2ff"/><stop offset="0.1390" stop-color="#007bff"/><stop offset="0.2262" stop-color="#0045ff"/><stop offset="0.2475" stop-color="#0f5bff"/><stop offset="0.2738" stop-color="#4478ff"/><stop offset="0.3117" stop-color="#9d9eff"/><stop offset="0.4169" stop-color="#d95eff"/><stop offset="0.4663" stop-color="#ff3afc"/><stop offset="0.5304" stop-color="#ff0fbb"/><stop offset="0.6077" stop-color="#ff0071"/><stop offset="0.6521" stop-color="#ff005c"/><stop offset="0.8248" stop-color="#ff003c"/><stop offset="1.0008" stop-color="#ff002e"/></linearGradient><linearGradient id="g100" gradientUnits="userSpaceOnUse" x1="1218" y1="0" x2="1823" y2="0"><stop offset="0.0008" stop-color="#00b0ff"/><stop offset="0.1397" stop-color="#0078ff"/><stop offset="0.2273" stop-color="#0044ff"/><stop offset="0.2488" stop-color="#105aff"/><stop offset="0.2752" stop-color="#4777ff"/><stop offset="0.3116" stop-color="#9b9cff"/><stop offset="0.4273" stop-color="#dd54ff"/><stop offset="0.4702" stop-color="#ff35fc"/><stop offset="0.5331" stop-color="#ff0dbc"/><stop offset="0.6140" stop-color="#ff006f"/><stop offset="0.7314" stop-color="#ff004c"/><stop offset="0.9893" stop-color="#ff002f"/><stop offset="1.0008" stop-color="#ff002f"/></linearGradient><linearGradient id="g101" gradientUnits="userSpaceOnUse" x1="1218" y1="0" x2="1821" y2="0"><stop offset="0.0008" stop-color="#00adff"/><stop offset="0.1418" stop-color="#0075ff"/><stop offset="0.2280" stop-color="#0042ff"/><stop offset="0.2512" stop-color="#1259ff"/><stop offset="0.2794" stop-color="#4d78ff"/><stop offset="0.3126" stop-color="#999aff"/><stop offset="0.4386" stop-color="#e149ff"/><stop offset="0.4751" stop-color="#ff30fc"/><stop offset="0.5381" stop-color="#ff0bbb"/><stop offset="0.6227" stop-color="#ff006d"/><stop offset="0.7570" stop-color="#ff0049"/><stop offset="1.0008" stop-color="#ff0030"/></linearGradient><linearGradient id="g102" gradientUnits="userSpaceOnUse" x1="1219" y1="0" x2="1819" y2="0"><stop offset="0.0008" stop-color="#00abff"/><stop offset="0.1425" stop-color="#0072ff"/><stop offset="0.2275" stop-color="#003fff"/><stop offset="0.2508" stop-color="#1156ff"/><stop offset="0.2792" stop-color="#4b75ff"/><stop offset="0.3125" stop-color="#9798ff"/><stop offset="0.4392" stop-color="#de46ff"/><stop offset="0.4792" stop-color="#ff2bfc"/><stop offset="0.5425" stop-color="#ff09ba"/><stop offset="0.6208" stop-color="#ff0072"/><stop offset="0.7508" stop-color="#ff004c"/><stop offset="1.0008" stop-color="#ff0031"/></linearGradient><linearGradient id="g103" gradientUnits="userSpaceOnUse" x1="1220" y1="0" x2="1817" y2="0"><stop offset="0.0008" stop-color="#00a8ff"/><stop offset="0.1432" stop-color="#006fff"/><stop offset="0.2286" stop-color="#003eff"/><stop offset="0.2521" stop-color="#1255ff"/><stop offset="0.2806" stop-color="#4d75ff"/><stop offset="0.3124" stop-color="#9595ff"/><stop offset="0.4397" stop-color="#db43ff"/><stop offset="0.4832" stop-color="#ff27fc"/><stop offset="0.5469" stop-color="#ff07b9"/><stop offset="0.6189" stop-color="#ff0076"/><stop offset="0.7446" stop-color="#ff0050"/><stop offset="0.9958" stop-color="#ff0033"/><stop offset="1.0008" stop-color="#ff0032"/></linearGradient><linearGradient id="g104" gradientUnits="userSpaceOnUse" x1="1221" y1="0" x2="1815" y2="0"><stop offset="0.0008" stop-color="#00a5ff"/><stop offset="0.1456" stop-color="#006bff"/><stop offset="0.2281" stop-color="#003bff"/><stop offset="0.2517" stop-color="#1152ff"/><stop offset="0.2803" stop-color="#4b72ff"/><stop offset="0.3123" stop-color="#9393ff"/><stop offset="0.4402" stop-color="#d840ff"/><stop offset="0.4874" stop-color="#ff23fc"/><stop offset="0.5530" stop-color="#ff05b6"/><stop offset="0.6187" stop-color="#ff007a"/><stop offset="0.7416" stop-color="#ff0053"/><stop offset="0.9840" stop-color="#ff0035"/><stop offset="1.0008" stop-color="#ff0033"/></linearGradient><linearGradient id="g105" gradientUnits="userSpaceOnUse" x1="1222" y1="0" x2="1813" y2="0"><stop offset="0.0008" stop-color="#00a3ff"/><stop offset="0.1464" stop-color="#0068ff"/><stop offset="0.2276" stop-color="#0039ff"/><stop offset="0.2513" stop-color="#1050ff"/><stop offset="0.2800" stop-color="#4970ff"/><stop offset="0.3122" stop-color="#9190ff"/><stop offset="0.4408" stop-color="#d53eff"/><stop offset="0.4915" stop-color="#ff1ffc"/><stop offset="0.5575" stop-color="#ff04b5"/><stop offset="0.6168" stop-color="#ff007f"/><stop offset="0.7352" stop-color="#ff0057"/><stop offset="0.9636" stop-color="#ff0037"/><stop offset="1.0008" stop-color="#ff0035"/></linearGradient><linearGradient id="g106" gradientUnits="userSpaceOnUse" x1="1223" y1="0" x2="1811" y2="0"><stop offset="0.0009" stop-color="#00a0ff"/><stop offset="0.1471" stop-color="#0065ff"/><stop offset="0.2287" stop-color="#0038ff"/><stop offset="0.2526" stop-color="#114fff"/><stop offset="0.2815" stop-color="#4b6fff"/><stop offset="0.3121" stop-color="#8f8dff"/><stop offset="0.4430" stop-color="#d33aff"/><stop offset="0.4957" stop-color="#ff1bfc"/><stop offset="0.5638" stop-color="#ff03b3"/><stop offset="0.6165" stop-color="#ff0083"/><stop offset="0.7321" stop-color="#ff005a"/><stop offset="0.9515" stop-color="#ff003a"/><stop offset="1.0009" stop-color="#ff0036"/></linearGradient><linearGradient id="g107" gradientUnits="userSpaceOnUse" x1="1224" y1="0" x2="1809" y2="0"><stop offset="0.0009" stop-color="#009dff"/><stop offset="0.1496" stop-color="#0062ff"/><stop offset="0.2282" stop-color="#0036ff"/><stop offset="0.2521" stop-color="#104cff"/><stop offset="0.2812" stop-color="#496cff"/><stop offset="0.3120" stop-color="#8c8bff"/><stop offset="0.4436" stop-color="#d037ff"/><stop offset="0.5000" stop-color="#ff17fc"/><stop offset="0.5701" stop-color="#ff02b0"/><stop offset="0.6162" stop-color="#ff0087"/><stop offset="0.7291" stop-color="#ff005d"/><stop offset="0.9410" stop-color="#ff003c"/><stop offset="1.0009" stop-color="#ff0037"/></linearGradient><linearGradient id="g108" gradientUnits="userSpaceOnUse" x1="1225" y1="0" x2="1807" y2="0"><stop offset="0.0009" stop-color="#009bff"/><stop offset="0.1503" stop-color="#005fff"/><stop offset="0.2277" stop-color="#0034ff"/><stop offset="0.2517" stop-color="#0f4aff"/><stop offset="0.2809" stop-color="#476aff"/><stop offset="0.3119" stop-color="#8a88ff"/><stop offset="0.4442" stop-color="#cd34ff"/><stop offset="0.5043" stop-color="#ff14fc"/><stop offset="0.5765" stop-color="#ff01ad"/><stop offset="0.6160" stop-color="#ff008b"/><stop offset="0.7259" stop-color="#ff0060"/><stop offset="0.9287" stop-color="#ff003f"/><stop offset="1.0009" stop-color="#ff0038"/></linearGradient><linearGradient id="g109" gradientUnits="userSpaceOnUse" x1="1226" y1="0" x2="1805" y2="0"><stop offset="0.0009" stop-color="#0098ff"/><stop offset="0.1511" stop-color="#005cff"/><stop offset="0.2288" stop-color="#0033ff"/><stop offset="0.2530" stop-color="#1149ff"/><stop offset="0.2824" stop-color="#4a69ff"/><stop offset="0.3117" stop-color="#8885ff"/><stop offset="0.4465" stop-color="#cb31ff"/><stop offset="0.5086" stop-color="#ff11fc"/><stop offset="0.5829" stop-color="#ff00aa"/><stop offset="0.6209" stop-color="#ff008c"/><stop offset="0.7314" stop-color="#ff0061"/><stop offset="0.9352" stop-color="#ff0040"/><stop offset="1.0009" stop-color="#ff003a"/></linearGradient><linearGradient id="g110" gradientUnits="userSpaceOnUse" x1="1227" y1="0" x2="1803" y2="0"><stop offset="0.0009" stop-color="#0096ff"/><stop offset="0.1536" stop-color="#0059ff"/><stop offset="0.2283" stop-color="#0031ff"/><stop offset="0.2526" stop-color="#1047ff"/><stop offset="0.2821" stop-color="#4867ff"/><stop offset="0.3099" stop-color="#8484ff"/><stop offset="0.4470" stop-color="#c82eff"/><stop offset="0.5130" stop-color="#ff0efc"/><stop offset="0.5911" stop-color="#ff00a6"/><stop offset="0.6606" stop-color="#ff007c"/><stop offset="0.7977" stop-color="#ff0055"/><stop offset="1.0009" stop-color="#ff003b"/></linearGradient><linearGradient id="g111" gradientUnits="userSpaceOnUse" x1="1228" y1="0" x2="1801" y2="0"><stop offset="0.0009" stop-color="#0094ff"/><stop offset="0.1545" stop-color="#0056ff"/><stop offset="0.2277" stop-color="#002fff"/><stop offset="0.2522" stop-color="#0f45ff"/><stop offset="0.2818" stop-color="#4665ff"/><stop offset="0.3098" stop-color="#8281ff"/><stop offset="0.4494" stop-color="#c62bff"/><stop offset="0.5175" stop-color="#ff0cfc"/><stop offset="0.6012" stop-color="#ff00a1"/><stop offset="0.6955" stop-color="#ff0072"/><stop offset="0.8578" stop-color="#ff004d"/><stop offset="1.0009" stop-color="#ff003d"/></linearGradient><linearGradient id="g112" gradientUnits="userSpaceOnUse" x1="1229" y1="0" x2="1799" y2="0"><stop offset="0.0009" stop-color="#0091ff"/><stop offset="0.1570" stop-color="#0053ff"/><stop offset="0.2289" stop-color="#002eff"/><stop offset="0.2535" stop-color="#1044ff"/><stop offset="0.2833" stop-color="#4864ff"/><stop offset="0.3096" stop-color="#807eff"/><stop offset="0.4500" stop-color="#c328ff"/><stop offset="0.5167" stop-color="#fc0bff"/><stop offset="0.6026" stop-color="#ff00a4"/><stop offset="0.6956" stop-color="#ff0075"/><stop offset="0.8553" stop-color="#ff004f"/><stop offset="1.0009" stop-color="#ff003e"/></linearGradient><linearGradient id="g113" gradientUnits="userSpaceOnUse" x1="1230" y1="0" x2="1797" y2="0"><stop offset="0.0009" stop-color="#008fff"/><stop offset="0.1578" stop-color="#0050ff"/><stop offset="0.2284" stop-color="#002cff"/><stop offset="0.2531" stop-color="#0f42ff"/><stop offset="0.2831" stop-color="#4662ff"/><stop offset="0.3095" stop-color="#7d7cff"/><stop offset="0.4524" stop-color="#c125ff"/><stop offset="0.5194" stop-color="#fa0aff"/><stop offset="0.5582" stop-color="#ff02d7"/><stop offset="0.6076" stop-color="#ff00a5"/><stop offset="0.7011" stop-color="#ff0076"/><stop offset="0.8616" stop-color="#ff0050"/><stop offset="1.0009" stop-color="#ff003f"/></linearGradient><linearGradient id="g114" gradientUnits="userSpaceOnUse" x1="1231" y1="0" x2="1795" y2="0"><stop offset="0.0009" stop-color="#008dff"/><stop offset="0.1605" stop-color="#004dff"/><stop offset="0.2278" stop-color="#002bff"/><stop offset="0.2527" stop-color="#0f40ff"/><stop offset="0.2810" stop-color="#405eff"/><stop offset="0.3094" stop-color="#7b79ff"/><stop offset="0.4530" stop-color="#be23ff"/><stop offset="0.5204" stop-color="#f608ff"/><stop offset="0.5346" stop-color="#ff05f7"/><stop offset="0.6037" stop-color="#ff00ad"/><stop offset="0.6941" stop-color="#ff007c"/><stop offset="0.8466" stop-color="#ff0055"/><stop offset="1.0009" stop-color="#ff0041"/></linearGradient><linearGradient id="g115" gradientUnits="userSpaceOnUse" x1="1232" y1="0" x2="1794" y2="0"><stop offset="0.0009" stop-color="#008aff"/><stop offset="0.1628" stop-color="#004aff"/><stop offset="0.2286" stop-color="#002aff"/><stop offset="0.2536" stop-color="#103fff"/><stop offset="0.2838" stop-color="#465fff"/><stop offset="0.3087" stop-color="#7976ff"/><stop offset="0.4546" stop-color="#bb20ff"/><stop offset="0.5222" stop-color="#f407ff"/><stop offset="0.5365" stop-color="#ff04f9"/><stop offset="0.6005" stop-color="#ff00b3"/><stop offset="0.6877" stop-color="#ff0082"/><stop offset="0.8319" stop-color="#ff0059"/><stop offset="1.0009" stop-color="#ff0042"/></linearGradient><linearGradient id="g116" gradientUnits="userSpaceOnUse" x1="1233" y1="0" x2="1792" y2="0"><stop offset="0.0009" stop-color="#0088ff"/><stop offset="0.1637" stop-color="#0048ff"/><stop offset="0.2281" stop-color="#0028ff"/><stop offset="0.2531" stop-color="#0f3dff"/><stop offset="0.2835" stop-color="#455dff"/><stop offset="0.3068" stop-color="#7574ff"/><stop offset="0.4553" stop-color="#b81eff"/><stop offset="0.5233" stop-color="#f006ff"/><stop offset="0.5394" stop-color="#ff03fb"/><stop offset="0.6020" stop-color="#ff00b7"/><stop offset="0.6878" stop-color="#ff0085"/><stop offset="0.8292" stop-color="#ff005c"/><stop offset="1.0009" stop-color="#ff0044"/></linearGradient><linearGradient id="g117" gradientUnits="userSpaceOnUse" x1="1234" y1="0" x2="1790" y2="0"><stop offset="0.0009" stop-color="#0086ff"/><stop offset="0.1664" stop-color="#0044ff"/><stop offset="0.2275" stop-color="#0027ff"/><stop offset="0.2545" stop-color="#103dff"/><stop offset="0.2851" stop-color="#475dff"/><stop offset="0.3067" stop-color="#7372ff"/><stop offset="0.4577" stop-color="#b61bff"/><stop offset="0.5261" stop-color="#ee05ff"/><stop offset="0.5441" stop-color="#ff02fb"/><stop offset="0.6016" stop-color="#ff00bc"/><stop offset="0.6862" stop-color="#ff0089"/><stop offset="0.8246" stop-color="#ff005f"/><stop offset="1.0009" stop-color="#ff0045"/></linearGradient><linearGradient id="g118" gradientUnits="userSpaceOnUse" x1="1235" y1="0" x2="1788" y2="0"><stop offset="0.0009" stop-color="#0084ff"/><stop offset="0.1691" stop-color="#0041ff"/><stop offset="0.2288" stop-color="#0026ff"/><stop offset="0.2559" stop-color="#123cff"/><stop offset="0.2884" stop-color="#4d5eff"/><stop offset="0.3065" stop-color="#716fff"/><stop offset="0.4584" stop-color="#b319ff"/><stop offset="0.5271" stop-color="#ea04ff"/><stop offset="0.5488" stop-color="#ff01fb"/><stop offset="0.6049" stop-color="#ff00bf"/><stop offset="0.6899" stop-color="#ff008b"/><stop offset="0.8273" stop-color="#ff0061"/><stop offset="1.0009" stop-color="#ff0047"/></linearGradient><linearGradient id="g119" gradientUnits="userSpaceOnUse" x1="1236" y1="0" x2="1786" y2="0"><stop offset="0.0009" stop-color="#0081ff"/><stop offset="0.1718" stop-color="#003eff"/><stop offset="0.2282" stop-color="#0024ff"/><stop offset="0.2555" stop-color="#113aff"/><stop offset="0.2882" stop-color="#4b5cff"/><stop offset="0.3064" stop-color="#6e6cff"/><stop offset="0.4609" stop-color="#b117ff"/><stop offset="0.5300" stop-color="#e803ff"/><stop offset="0.5536" stop-color="#ff01fb"/><stop offset="0.6100" stop-color="#ff00bf"/><stop offset="0.6955" stop-color="#ff008c"/><stop offset="0.8355" stop-color="#ff0061"/><stop offset="1.0009" stop-color="#ff0048"/></linearGradient><linearGradient id="g120" gradientUnits="userSpaceOnUse" x1="1237" y1="0" x2="1784" y2="0"><stop offset="0.0009" stop-color="#007fff"/><stop offset="0.1728" stop-color="#003cff"/><stop offset="0.2276" stop-color="#0023ff"/><stop offset="0.2550" stop-color="#1038ff"/><stop offset="0.2861" stop-color="#4558ff"/><stop offset="0.3062" stop-color="#6c6aff"/><stop offset="0.4598" stop-color="#ac16ff"/><stop offset="0.5311" stop-color="#e303ff"/><stop offset="0.5585" stop-color="#ff00fb"/><stop offset="0.6152" stop-color="#ff00c0"/><stop offset="0.7029" stop-color="#ff008c"/><stop offset="0.8455" stop-color="#ff0061"/><stop offset="1.0009" stop-color="#ff004a"/></linearGradient><linearGradient id="g121" gradientUnits="userSpaceOnUse" x1="1238" y1="0" x2="1782" y2="0"><stop offset="0.0009" stop-color="#007dff"/><stop offset="0.1756" stop-color="#0039ff"/><stop offset="0.2289" stop-color="#0023ff"/><stop offset="0.2564" stop-color="#1138ff"/><stop offset="0.2895" stop-color="#4b5aff"/><stop offset="0.3061" stop-color="#6a67ff"/><stop offset="0.4568" stop-color="#a715ff"/><stop offset="0.5303" stop-color="#dd03ff"/><stop offset="0.5634" stop-color="#ff00fb"/><stop offset="0.6222" stop-color="#ff00c0"/><stop offset="0.7123" stop-color="#ff008c"/><stop offset="0.8575" stop-color="#ff0061"/><stop offset="1.0009" stop-color="#ff004b"/></linearGradient><linearGradient id="g122" gradientUnits="userSpaceOnUse" x1="1239" y1="0" x2="1780" y2="0"><stop offset="0.0009" stop-color="#007bff"/><stop offset="0.1784" stop-color="#0037ff"/><stop offset="0.2283" stop-color="#0021ff"/><stop offset="0.2560" stop-color="#1036ff"/><stop offset="0.2874" stop-color="#4656ff"/><stop offset="0.3041" stop-color="#6665ff"/><stop offset="0.4538" stop-color="#a215ff"/><stop offset="0.5296" stop-color="#d802ff"/><stop offset="0.5684" stop-color="#ff00fb"/><stop offset="0.6294" stop-color="#ff00bf"/><stop offset="0.7218" stop-color="#ff008b"/><stop offset="0.8715" stop-color="#ff0061"/><stop offset="1.0009" stop-color="#ff004d"/></linearGradient><linearGradient id="g123" gradientUnits="userSpaceOnUse" x1="1240" y1="0" x2="1778" y2="0"><stop offset="0.0009" stop-color="#0079ff"/><stop offset="0.1831" stop-color="#0033ff"/><stop offset="0.2296" stop-color="#0021ff"/><stop offset="0.2574" stop-color="#1136ff"/><stop offset="0.2909" stop-color="#4c57ff"/><stop offset="0.3039" stop-color="#6463ff"/><stop offset="0.4507" stop-color="#9d15ff"/><stop offset="0.5288" stop-color="#d202ff"/><stop offset="0.5734" stop-color="#ff00fb"/><stop offset="0.6366" stop-color="#ff00be"/><stop offset="0.7314" stop-color="#ff008b"/><stop offset="0.8857" stop-color="#ff0060"/><stop offset="1.0009" stop-color="#ff004f"/></linearGradient><linearGradient id="g124" gradientUnits="userSpaceOnUse" x1="1241" y1="0" x2="1776" y2="0"><stop offset="0.0009" stop-color="#0077ff"/><stop offset="0.1860" stop-color="#0030ff"/><stop offset="0.2290" stop-color="#001fff"/><stop offset="0.2570" stop-color="#1134ff"/><stop offset="0.2907" stop-color="#4a55ff"/><stop offset="0.3037" stop-color="#6260ff"/><stop offset="0.4477" stop-color="#9815ff"/><stop offset="0.5280" stop-color="#cc02ff"/><stop offset="0.5785" stop-color="#ff00fb"/><stop offset="0.6421" stop-color="#ff00bf"/><stop offset="0.7374" stop-color="#ff008c"/><stop offset="0.8925" stop-color="#ff0061"/><stop offset="1.0009" stop-color="#ff0051"/></linearGradient><linearGradient id="g125" gradientUnits="userSpaceOnUse" x1="1242" y1="0" x2="1774" y2="0"><stop offset="0.0009" stop-color="#0075ff"/><stop offset="0.1889" stop-color="#002dff"/><stop offset="0.2284" stop-color="#001eff"/><stop offset="0.2566" stop-color="#1032ff"/><stop offset="0.2885" stop-color="#4451ff"/><stop offset="0.3036" stop-color="#5f5dff"/><stop offset="0.4464" stop-color="#9414ff"/><stop offset="0.5291" stop-color="#c802ff"/><stop offset="0.5836" stop-color="#ff00fb"/><stop offset="0.6494" stop-color="#ff00be"/><stop offset="0.7472" stop-color="#ff008b"/><stop offset="0.9070" stop-color="#ff0061"/><stop offset="1.0009" stop-color="#ff0052"/></linearGradient><linearGradient id="g126" gradientUnits="userSpaceOnUse" x1="1243" y1="0" x2="1772" y2="0"><stop offset="0.0009" stop-color="#0073ff"/><stop offset="0.1938" stop-color="#002aff"/><stop offset="0.2297" stop-color="#001eff"/><stop offset="0.2580" stop-color="#1132ff"/><stop offset="0.2921" stop-color="#4a53ff"/><stop offset="0.3034" stop-color="#5d5aff"/><stop offset="0.4433" stop-color="#8f14ff"/><stop offset="0.5284" stop-color="#c301ff"/><stop offset="0.5888" stop-color="#ff00fb"/><stop offset="0.6550" stop-color="#ff00bf"/><stop offset="0.7552" stop-color="#ff008b"/><stop offset="0.9178" stop-color="#ff0061"/><stop offset="1.0009" stop-color="#ff0054"/></linearGradient><linearGradient id="g127" gradientUnits="userSpaceOnUse" x1="1244" y1="0" x2="1770" y2="0"><stop offset="0.0010" stop-color="#0071ff"/><stop offset="0.1968" stop-color="#0027ff"/><stop offset="0.2291" stop-color="#001cff"/><stop offset="0.2576" stop-color="#1030ff"/><stop offset="0.2918" stop-color="#4951ff"/><stop offset="0.3032" stop-color="#5b58ff"/><stop offset="0.4401" stop-color="#8b14ff"/><stop offset="0.5276" stop-color="#bd01ff"/><stop offset="0.5865" stop-color="#fa00ff"/><stop offset="0.6074" stop-color="#ff00ed"/><stop offset="0.6816" stop-color="#ff00b2"/><stop offset="0.7937" stop-color="#ff0081"/><stop offset="0.9819" stop-color="#ff0059"/><stop offset="1.0010" stop-color="#ff0056"/></linearGradient><linearGradient id="g128" gradientUnits="userSpaceOnUse" x1="1245" y1="0" x2="1768" y2="0"><stop offset="0.0010" stop-color="#006fff"/><stop offset="0.2017" stop-color="#0024ff"/><stop offset="0.2304" stop-color="#001cff"/><stop offset="0.2591" stop-color="#1130ff"/><stop offset="0.2935" stop-color="#4b51ff"/><stop offset="0.3031" stop-color="#5855ff"/><stop offset="0.4388" stop-color="#8713ff"/><stop offset="0.5287" stop-color="#ba01ff"/><stop offset="0.5860" stop-color="#f300ff"/><stop offset="0.6013" stop-color="#ff00f9"/><stop offset="0.6721" stop-color="#ff00bd"/><stop offset="0.7772" stop-color="#ff008a"/><stop offset="0.9493" stop-color="#ff0060"/><stop offset="1.0010" stop-color="#ff0058"/></linearGradient><linearGradient id="g129" gradientUnits="userSpaceOnUse" x1="1246" y1="0" x2="1766" y2="0"><stop offset="0.0010" stop-color="#006dff"/><stop offset="0.2067" stop-color="#0021ff"/><stop offset="0.2298" stop-color="#001bff"/><stop offset="0.2587" stop-color="#112eff"/><stop offset="0.2933" stop-color="#494fff"/><stop offset="0.3029" stop-color="#5652ff"/><stop offset="0.4375" stop-color="#8312ff"/><stop offset="0.5279" stop-color="#b401ff"/><stop offset="0.5837" stop-color="#ea00ff"/><stop offset="0.6048" stop-color="#ff00fc"/><stop offset="0.6760" stop-color="#ff00bf"/><stop offset="0.7817" stop-color="#ff008b"/><stop offset="0.9548" stop-color="#ff0061"/><stop offset="1.0010" stop-color="#ff005a"/></linearGradient><linearGradient id="g130" gradientUnits="userSpaceOnUse" x1="1247" y1="0" x2="1764" y2="0"><stop offset="0.0010" stop-color="#006bff"/><stop offset="0.2137" stop-color="#001dff"/><stop offset="0.2311" stop-color="#001bff"/><stop offset="0.2602" stop-color="#122eff"/><stop offset="0.3008" stop-color="#5351ff"/><stop offset="0.4342" stop-color="#7f12ff"/><stop offset="0.5290" stop-color="#b001ff"/><stop offset="0.5851" stop-color="#e600ff"/><stop offset="0.6103" stop-color="#ff00fc"/><stop offset="0.6818" stop-color="#ff00bf"/><stop offset="0.7901" stop-color="#ff008c"/><stop offset="0.9662" stop-color="#ff0061"/><stop offset="1.0010" stop-color="#ff005c"/></linearGradient><linearGradient id="g131" gradientUnits="userSpaceOnUse" x1="1248" y1="0" x2="1763" y2="0"><stop offset="0.0010" stop-color="#0069ff"/><stop offset="0.2223" stop-color="#0018ff"/><stop offset="0.2534" stop-color="#0b28ff"/><stop offset="0.2845" stop-color="#3743ff"/><stop offset="0.3000" stop-color="#514eff"/><stop offset="0.4301" stop-color="#7b12ff"/><stop offset="0.5272" stop-color="#ab00ff"/><stop offset="0.5835" stop-color="#e100ff"/><stop offset="0.6146" stop-color="#ff00fc"/><stop offset="0.6883" stop-color="#ff00bf"/><stop offset="0.7990" stop-color="#ff008b"/><stop offset="0.9796" stop-color="#ff0061"/><stop offset="1.0010" stop-color="#ff005d"/></linearGradient><linearGradient id="g132" gradientUnits="userSpaceOnUse" x1="1249" y1="0" x2="1761" y2="0"><stop offset="0.0010" stop-color="#0067ff"/><stop offset="0.2295" stop-color="#0018ff"/><stop offset="0.2588" stop-color="#102bff"/><stop offset="0.2939" stop-color="#484bff"/><stop offset="0.3271" stop-color="#583dff"/><stop offset="0.4443" stop-color="#7d0cff"/><stop offset="0.5381" stop-color="#af00ff"/><stop offset="0.6201" stop-color="#ff00fc"/><stop offset="0.6943" stop-color="#ff00c0"/><stop offset="0.8057" stop-color="#ff008c"/><stop offset="0.9873" stop-color="#ff0061"/><stop offset="1.0010" stop-color="#ff005f"/></linearGradient><linearGradient id="g133" gradientUnits="userSpaceOnUse" x1="1250" y1="0" x2="1759" y2="0"><stop offset="0.0010" stop-color="#0066ff"/><stop offset="0.2289" stop-color="#0017ff"/><stop offset="0.2583" stop-color="#0f29ff"/><stop offset="0.2937" stop-color="#4649ff"/><stop offset="0.3782" stop-color="#6522ff"/><stop offset="0.4823" stop-color="#8a04ff"/><stop offset="0.5511" stop-color="#b500ff"/><stop offset="0.6257" stop-color="#ff00fc"/><stop offset="0.7024" stop-color="#ff00bf"/><stop offset="0.8163" stop-color="#ff008c"/><stop offset="1.0010" stop-color="#ff0061"/></linearGradient><linearGradient id="g134" gradientUnits="userSpaceOnUse" x1="1251" y1="0" x2="1757" y2="0"><stop offset="0.0010" stop-color="#0064ff"/><stop offset="0.2283" stop-color="#0016ff"/><stop offset="0.2579" stop-color="#0f28ff"/><stop offset="0.2915" stop-color="#4145ff"/><stop offset="0.3034" stop-color="#4c45ff"/><stop offset="0.4279" stop-color="#710fff"/><stop offset="0.5306" stop-color="#a000ff"/><stop offset="0.6314" stop-color="#ff00fc"/><stop offset="0.7085" stop-color="#ff00c0"/><stop offset="0.8251" stop-color="#ff008c"/><stop offset="1.0010" stop-color="#ff0063"/></linearGradient><linearGradient id="g135" gradientUnits="userSpaceOnUse" x1="1253" y1="0" x2="1755" y2="0"><stop offset="0.0010" stop-color="#0062ff"/><stop offset="0.2281" stop-color="#0016ff"/><stop offset="0.2580" stop-color="#1028ff"/><stop offset="0.2958" stop-color="#4745ff"/><stop offset="0.4213" stop-color="#6d0fff"/><stop offset="0.5289" stop-color="#9c00ff"/><stop offset="0.6365" stop-color="#ff00fc"/><stop offset="0.7161" stop-color="#ff00bf"/><stop offset="0.8357" stop-color="#ff008b"/><stop offset="1.0010" stop-color="#ff0065"/></linearGradient><linearGradient id="g136" gradientUnits="userSpaceOnUse" x1="1254" y1="0" x2="1753" y2="0"><stop offset="0.0010" stop-color="#0060ff"/><stop offset="0.2275" stop-color="#0015ff"/><stop offset="0.2575" stop-color="#0f26ff"/><stop offset="0.2956" stop-color="#4543ff"/><stop offset="0.4218" stop-color="#6a0eff"/><stop offset="0.5301" stop-color="#9800ff"/><stop offset="0.6423" stop-color="#ff00fc"/><stop offset="0.7224" stop-color="#ff00c0"/><stop offset="0.8427" stop-color="#ff008c"/><stop offset="1.0010" stop-color="#ff0067"/></linearGradient><linearGradient id="g137" gradientUnits="userSpaceOnUse" x1="1255" y1="0" x2="1751" y2="0"><stop offset="0.0010" stop-color="#005eff"/><stop offset="0.2288" stop-color="#0015ff"/><stop offset="0.2591" stop-color="#1026ff"/><stop offset="0.2954" stop-color="#4340ff"/><stop offset="0.4204" stop-color="#670dff"/><stop offset="0.5312" stop-color="#9400ff"/><stop offset="0.6482" stop-color="#ff00fc"/><stop offset="0.7308" stop-color="#ff00bf"/><stop offset="0.8538" stop-color="#ff008c"/><stop offset="1.0010" stop-color="#ff006a"/></linearGradient><linearGradient id="g138" gradientUnits="userSpaceOnUse" x1="1256" y1="0" x2="1749" y2="0"><stop offset="0.0010" stop-color="#005cff"/><stop offset="0.2282" stop-color="#0014ff"/><stop offset="0.2586" stop-color="#0f25ff"/><stop offset="0.2951" stop-color="#413eff"/><stop offset="0.4189" stop-color="#640dff"/><stop offset="0.5284" stop-color="#8f00ff"/><stop offset="0.6542" stop-color="#ff00fc"/><stop offset="0.7373" stop-color="#ff00c0"/><stop offset="0.8631" stop-color="#ff008c"/><stop offset="1.0010" stop-color="#ff006c"/></linearGradient><linearGradient id="g139" gradientUnits="userSpaceOnUse" x1="1258" y1="0" x2="1747" y2="0"><stop offset="0.0010" stop-color="#005aff"/><stop offset="0.2260" stop-color="#0013ff"/><stop offset="0.2587" stop-color="#1125ff"/><stop offset="0.2914" stop-color="#3e3dff"/><stop offset="0.4141" stop-color="#600dff"/><stop offset="0.5266" stop-color="#8b00ff"/><stop offset="0.6595" stop-color="#ff00fc"/><stop offset="0.7454" stop-color="#ff00bf"/><stop offset="0.8742" stop-color="#ff008b"/><stop offset="1.0010" stop-color="#ff006e"/></linearGradient><linearGradient id="g140" gradientUnits="userSpaceOnUse" x1="1259" y1="0" x2="1745" y2="0"><stop offset="0.0010" stop-color="#0058ff"/><stop offset="0.2274" stop-color="#0013ff"/><stop offset="0.2582" stop-color="#1023ff"/><stop offset="0.2912" stop-color="#3c3aff"/><stop offset="0.4146" stop-color="#5d0bff"/><stop offset="0.5257" stop-color="#8700ff"/><stop offset="0.6656" stop-color="#ff00fc"/><stop offset="0.7521" stop-color="#ff00c0"/><stop offset="0.8817" stop-color="#ff008c"/><stop offset="1.0010" stop-color="#ff0070"/></linearGradient><linearGradient id="g141" gradientUnits="userSpaceOnUse" x1="1260" y1="0" x2="1743" y2="0"><stop offset="0.0010" stop-color="#0057ff"/><stop offset="0.2267" stop-color="#0012ff"/><stop offset="0.2598" stop-color="#1123ff"/><stop offset="0.2909" stop-color="#3a38ff"/><stop offset="0.4130" stop-color="#5a0bff"/><stop offset="0.5228" stop-color="#8200ff"/><stop offset="0.6718" stop-color="#ff00fc"/><stop offset="0.7609" stop-color="#ff00bf"/><stop offset="0.8934" stop-color="#ff008c"/><stop offset="1.0010" stop-color="#ff0073"/></linearGradient><linearGradient id="g142" gradientUnits="userSpaceOnUse" x1="1261" y1="0" x2="1741" y2="0"><stop offset="0.0010" stop-color="#0055ff"/><stop offset="0.2260" stop-color="#0011ff"/><stop offset="0.2594" stop-color="#1022ff"/><stop offset="0.2906" stop-color="#3836ff"/><stop offset="0.4115" stop-color="#570aff"/><stop offset="0.5219" stop-color="#7e00ff"/><stop offset="0.6781" stop-color="#ff00fc"/><stop offset="0.7677" stop-color="#ff00c0"/><stop offset="0.9031" stop-color="#ff008c"/><stop offset="1.0010" stop-color="#ff0075"/></linearGradient><linearGradient id="g143" gradientUnits="userSpaceOnUse" x1="1262" y1="0" x2="1739" y2="0"><stop offset="0.0010" stop-color="#0054ff"/><stop offset="0.2275" stop-color="#0011ff"/><stop offset="0.2610" stop-color="#1222ff"/><stop offset="0.2904" stop-color="#3633ff"/><stop offset="0.4119" stop-color="#5509ff"/><stop offset="0.5189" stop-color="#7900ff"/><stop offset="0.6845" stop-color="#ff00fc"/><stop offset="0.7767" stop-color="#ff00bf"/><stop offset="0.9151" stop-color="#ff008c"/><stop offset="1.0010" stop-color="#ff0077"/></linearGradient><linearGradient id="g144" gradientUnits="userSpaceOnUse" x1="1263" y1="0" x2="1737" y2="0"><stop offset="0.0011" stop-color="#0052ff"/><stop offset="0.2268" stop-color="#0010ff"/><stop offset="0.2605" stop-color="#1120ff"/><stop offset="0.2901" stop-color="#3431ff"/><stop offset="0.4103" stop-color="#5209ff"/><stop offset="0.5179" stop-color="#7600ff"/><stop offset="0.6909" stop-color="#ff00fc"/><stop offset="0.7838" stop-color="#ff00c0"/><stop offset="0.9230" stop-color="#ff008c"/><stop offset="1.0011" stop-color="#ff007a"/></linearGradient><linearGradient id="g145" gradientUnits="userSpaceOnUse" x1="1265" y1="0" x2="1735" y2="0"><stop offset="0.0011" stop-color="#0050ff"/><stop offset="0.2245" stop-color="#000fff"/><stop offset="0.2585" stop-color="#101fff"/><stop offset="0.2862" stop-color="#3130ff"/><stop offset="0.4074" stop-color="#4f08ff"/><stop offset="0.5138" stop-color="#7100ff"/><stop offset="0.6968" stop-color="#ff00fd"/><stop offset="0.7926" stop-color="#ff00c0"/><stop offset="0.9351" stop-color="#ff008c"/><stop offset="1.0011" stop-color="#ff007c"/></linearGradient><linearGradient id="g146" gradientUnits="userSpaceOnUse" x1="1266" y1="0" x2="1733" y2="0"><stop offset="0.0011" stop-color="#004eff"/><stop offset="0.2259" stop-color="#000fff"/><stop offset="0.2602" stop-color="#111fff"/><stop offset="0.2880" stop-color="#302dff"/><stop offset="0.4079" stop-color="#4d07ff"/><stop offset="0.5107" stop-color="#6d00ff"/><stop offset="0.7034" stop-color="#ff00fd"/><stop offset="0.7998" stop-color="#ff00c0"/><stop offset="0.9454" stop-color="#ff008c"/><stop offset="1.0011" stop-color="#ff007f"/></linearGradient><linearGradient id="g147" gradientUnits="userSpaceOnUse" x1="1267" y1="0" x2="1731" y2="0"><stop offset="0.0011" stop-color="#004dff"/><stop offset="0.2252" stop-color="#000eff"/><stop offset="0.2597" stop-color="#101eff"/><stop offset="0.2856" stop-color="#2e2cff"/><stop offset="0.4062" stop-color="#4a07ff"/><stop offset="0.5097" stop-color="#6a00ff"/><stop offset="0.7123" stop-color="#ff00fb"/><stop offset="0.8114" stop-color="#ff00bf"/><stop offset="0.9601" stop-color="#ff008b"/><stop offset="1.0011" stop-color="#ff0082"/></linearGradient><linearGradient id="g148" gradientUnits="userSpaceOnUse" x1="1268" y1="0" x2="1730" y2="0"><stop offset="0.0011" stop-color="#004bff"/><stop offset="0.2262" stop-color="#000eff"/><stop offset="0.2608" stop-color="#121eff"/><stop offset="0.2846" stop-color="#2c2aff"/><stop offset="0.4058" stop-color="#4806ff"/><stop offset="0.5054" stop-color="#6500ff"/><stop offset="0.7175" stop-color="#ff00fb"/><stop offset="0.8193" stop-color="#ff00be"/><stop offset="0.9708" stop-color="#ff008b"/><stop offset="1.0011" stop-color="#ff0084"/></linearGradient><linearGradient id="g149" gradientUnits="userSpaceOnUse" x1="1269" y1="0" x2="1728" y2="0"><stop offset="0.0011" stop-color="#004aff"/><stop offset="0.2255" stop-color="#000dff"/><stop offset="0.2603" stop-color="#111cff"/><stop offset="0.2843" stop-color="#2a28ff"/><stop offset="0.4063" stop-color="#4606ff"/><stop offset="0.5022" stop-color="#6100ff"/><stop offset="0.7244" stop-color="#ff00fb"/><stop offset="0.8268" stop-color="#ff00bf"/><stop offset="0.9815" stop-color="#ff008b"/><stop offset="1.0011" stop-color="#ff0086"/></linearGradient><linearGradient id="g150" gradientUnits="userSpaceOnUse" x1="1270" y1="0" x2="1726" y2="0"><stop offset="0.0011" stop-color="#0048ff"/><stop offset="0.2248" stop-color="#000dff"/><stop offset="0.2599" stop-color="#101bff"/><stop offset="0.2840" stop-color="#2926ff"/><stop offset="0.4046" stop-color="#4305ff"/><stop offset="0.4989" stop-color="#5d00ff"/><stop offset="0.7204" stop-color="#fb00ff"/><stop offset="0.7818" stop-color="#ff00da"/><stop offset="0.9112" stop-color="#ff00a2"/><stop offset="1.0011" stop-color="#ff0089"/></linearGradient><linearGradient id="g151" gradientUnits="userSpaceOnUse" x1="1271" y1="0" x2="1724" y2="0"><stop offset="0.0011" stop-color="#0047ff"/><stop offset="0.2263" stop-color="#000dff"/><stop offset="0.2616" stop-color="#111bff"/><stop offset="0.2837" stop-color="#2724ff"/><stop offset="0.4051" stop-color="#4105ff"/><stop offset="0.4978" stop-color="#5b00ff"/><stop offset="0.7208" stop-color="#f600ff"/><stop offset="0.7428" stop-color="#ff00f8"/><stop offset="0.8510" stop-color="#ff00bc"/><stop offset="1.0011" stop-color="#ff008c"/></linearGradient><linearGradient id="g152" gradientUnits="userSpaceOnUse" x1="1272" y1="0" x2="1722" y2="0"><stop offset="0.0011" stop-color="#0046ff"/><stop offset="0.2256" stop-color="#000cff"/><stop offset="0.2611" stop-color="#111aff"/><stop offset="0.2833" stop-color="#2522ff"/><stop offset="0.4056" stop-color="#3f04ff"/><stop offset="0.4944" stop-color="#5700ff"/><stop offset="0.7167" stop-color="#ed00ff"/><stop offset="0.7478" stop-color="#ff00fa"/><stop offset="0.8567" stop-color="#ff00bd"/><stop offset="1.0011" stop-color="#ff008f"/></linearGradient><linearGradient id="g153" gradientUnits="userSpaceOnUse" x1="1273" y1="0" x2="1720" y2="0"><stop offset="0.0011" stop-color="#0044ff"/><stop offset="0.2271" stop-color="#000cff"/><stop offset="0.2629" stop-color="#121aff"/><stop offset="0.2830" stop-color="#2420ff"/><stop offset="0.4060" stop-color="#3d04ff"/><stop offset="0.4911" stop-color="#5300ff"/><stop offset="0.7125" stop-color="#e600ff"/><stop offset="0.7528" stop-color="#ff00fb"/><stop offset="0.8624" stop-color="#ff00bf"/><stop offset="1.0011" stop-color="#ff0092"/></linearGradient><linearGradient id="g154" gradientUnits="userSpaceOnUse" x1="1274" y1="0" x2="1718" y2="0"><stop offset="0.0011" stop-color="#0043ff"/><stop offset="0.2264" stop-color="#000bff"/><stop offset="0.2624" stop-color="#1119ff"/><stop offset="0.2827" stop-color="#221eff"/><stop offset="0.4065" stop-color="#3b03ff"/><stop offset="0.4876" stop-color="#5000ff"/><stop offset="0.7083" stop-color="#de00ff"/><stop offset="0.7601" stop-color="#ff00fb"/><stop offset="0.8727" stop-color="#ff00be"/><stop offset="1.0011" stop-color="#ff0095"/></linearGradient><linearGradient id="g155" gradientUnits="userSpaceOnUse" x1="1275" y1="0" x2="1716" y2="0"><stop offset="0.0011" stop-color="#0042ff"/><stop offset="0.2256" stop-color="#000aff"/><stop offset="0.2619" stop-color="#1017ff"/><stop offset="0.2823" stop-color="#211dff"/><stop offset="0.4070" stop-color="#3903ff"/><stop offset="0.4864" stop-color="#4d00ff"/><stop offset="0.7086" stop-color="#d900ff"/><stop offset="0.7676" stop-color="#ff00fb"/><stop offset="0.8810" stop-color="#ff00bf"/><stop offset="1.0011" stop-color="#ff0098"/></linearGradient><linearGradient id="g156" gradientUnits="userSpaceOnUse" x1="1277" y1="0" x2="1714" y2="0"><stop offset="0.0011" stop-color="#0040ff"/><stop offset="0.2254" stop-color="#000aff"/><stop offset="0.2620" stop-color="#1117ff"/><stop offset="0.2803" stop-color="#1f1bff"/><stop offset="0.4062" stop-color="#3702ff"/><stop offset="0.4817" stop-color="#4a00ff"/><stop offset="0.7037" stop-color="#d200ff"/><stop offset="0.7746" stop-color="#ff00fb"/><stop offset="0.8913" stop-color="#ff00bf"/><stop offset="1.0011" stop-color="#ff009b"/></linearGradient><linearGradient id="g157" gradientUnits="userSpaceOnUse" x1="1278" y1="0" x2="1712" y2="0"><stop offset="0.0012" stop-color="#003eff"/><stop offset="0.2247" stop-color="#000aff"/><stop offset="0.2615" stop-color="#1116ff"/><stop offset="0.2823" stop-color="#1e19ff"/><stop offset="0.4113" stop-color="#3602ff"/><stop offset="0.4804" stop-color="#4800ff"/><stop offset="0.7039" stop-color="#ce00ff"/><stop offset="0.7823" stop-color="#ff00fb"/><stop offset="0.8998" stop-color="#ff00bf"/><stop offset="1.0012" stop-color="#ff009e"/></linearGradient><linearGradient id="g158" gradientUnits="userSpaceOnUse" x1="1279" y1="0" x2="1710" y2="0"><stop offset="0.0012" stop-color="#003dff"/><stop offset="0.2239" stop-color="#0009ff"/><stop offset="0.2610" stop-color="#1015ff"/><stop offset="0.2819" stop-color="#1d17ff"/><stop offset="0.4118" stop-color="#3401ff"/><stop offset="0.4768" stop-color="#4500ff"/><stop offset="0.6995" stop-color="#c700ff"/><stop offset="0.7900" stop-color="#ff00fc"/><stop offset="0.9107" stop-color="#ff00bf"/><stop offset="1.0012" stop-color="#ff00a1"/></linearGradient><linearGradient id="g159" gradientUnits="userSpaceOnUse" x1="1280" y1="0" x2="1708" y2="0"><stop offset="0.0012" stop-color="#003cff"/><stop offset="0.2255" stop-color="#0009ff"/><stop offset="0.2629" stop-color="#1115ff"/><stop offset="0.2932" stop-color="#1e13ff"/><stop offset="0.4287" stop-color="#3500ff"/><stop offset="0.4801" stop-color="#4500ff"/><stop offset="0.7068" stop-color="#c700ff"/><stop offset="0.7979" stop-color="#ff00fc"/><stop offset="0.9194" stop-color="#ff00bf"/><stop offset="1.0012" stop-color="#ff00a4"/></linearGradient><linearGradient id="g160" gradientUnits="userSpaceOnUse" x1="1282" y1="0" x2="1706" y2="0"><stop offset="0.0012" stop-color="#003aff"/><stop offset="0.2229" stop-color="#0009ff"/><stop offset="0.2606" stop-color="#1014ff"/><stop offset="0.2983" stop-color="#1e10ff"/><stop offset="0.4375" stop-color="#3500ff"/><stop offset="0.5436" stop-color="#6500ff"/><stop offset="0.8054" stop-color="#ff00fc"/><stop offset="0.9304" stop-color="#ff00bf"/><stop offset="1.0012" stop-color="#ff00a7"/></linearGradient><linearGradient id="g161" gradientUnits="userSpaceOnUse" x1="1283" y1="0" x2="1704" y2="0"><stop offset="0.0012" stop-color="#0039ff"/><stop offset="0.2245" stop-color="#0009ff"/><stop offset="0.2625" stop-color="#1214ff"/><stop offset="0.3884" stop-color="#2b02ff"/><stop offset="0.4644" stop-color="#3c00ff"/><stop offset="0.6876" stop-color="#b400ff"/><stop offset="0.8135" stop-color="#ff00fc"/><stop offset="0.9394" stop-color="#ff00bf"/><stop offset="1.0012" stop-color="#ff00ab"/></linearGradient><linearGradient id="g162" gradientUnits="userSpaceOnUse" x1="1284" y1="0" x2="1702" y2="0"><stop offset="0.0012" stop-color="#0037ff"/><stop offset="0.2237" stop-color="#0008ff"/><stop offset="0.2620" stop-color="#1113ff"/><stop offset="0.4175" stop-color="#2e00ff"/><stop offset="0.4725" stop-color="#3f00ff"/><stop offset="0.7022" stop-color="#b900ff"/><stop offset="0.8218" stop-color="#ff00fc"/><stop offset="0.9510" stop-color="#ff00bf"/><stop offset="1.0012" stop-color="#ff00ae"/></linearGradient><linearGradient id="g163" gradientUnits="userSpaceOnUse" x1="1285" y1="0" x2="1700" y2="0"><stop offset="0.0012" stop-color="#0036ff"/><stop offset="0.2229" stop-color="#0008ff"/><stop offset="0.2614" stop-color="#1012ff"/><stop offset="0.4229" stop-color="#2d00ff"/><stop offset="0.5048" stop-color="#4c00ff"/><stop offset="0.7578" stop-color="#d600ff"/><stop offset="0.8301" stop-color="#ff00fc"/><stop offset="0.9602" stop-color="#ff00bf"/><stop offset="1.0012" stop-color="#ff00b2"/></linearGradient><linearGradient id="g164" gradientUnits="userSpaceOnUse" x1="1287" y1="0" x2="1698" y2="0"><stop offset="0.0012" stop-color="#0035ff"/><stop offset="0.2226" stop-color="#0007ff"/><stop offset="0.2713" stop-color="#1410ff"/><stop offset="0.4148" stop-color="#2a00ff"/><stop offset="0.4854" stop-color="#4300ff"/><stop offset="0.7311" stop-color="#c300ff"/><stop offset="0.8382" stop-color="#ff00fc"/><stop offset="0.9720" stop-color="#ff00bf"/><stop offset="1.0012" stop-color="#ff00b5"/></linearGradient><linearGradient id="g165" gradientUnits="userSpaceOnUse" x1="1288" y1="0" x2="1697" y2="0"><stop offset="0.0012" stop-color="#0033ff"/><stop offset="0.2213" stop-color="#0007ff"/><stop offset="0.2702" stop-color="#130fff"/><stop offset="0.4169" stop-color="#2900ff"/><stop offset="0.5587" stop-color="#6400ff"/><stop offset="0.8447" stop-color="#ff00fc"/><stop offset="0.9792" stop-color="#ff00bf"/><stop offset="1.0012" stop-color="#ff00b8"/></linearGradient><linearGradient id="g166" gradientUnits="userSpaceOnUse" x1="1289" y1="0" x2="1695" y2="0"><stop offset="0.0012" stop-color="#0032ff"/><stop offset="0.2204" stop-color="#0006ff"/><stop offset="0.2697" stop-color="#120eff"/><stop offset="0.4224" stop-color="#2800ff"/><stop offset="0.6244" stop-color="#8300ff"/><stop offset="0.8534" stop-color="#ff00fc"/><stop offset="0.9914" stop-color="#ff00bf"/><stop offset="1.0012" stop-color="#ff00bc"/></linearGradient><linearGradient id="g167" gradientUnits="userSpaceOnUse" x1="1290" y1="0" x2="1693" y2="0"><stop offset="0.0012" stop-color="#0031ff"/><stop offset="0.2221" stop-color="#0006ff"/><stop offset="0.2717" stop-color="#120cff"/><stop offset="0.4305" stop-color="#2a00ff"/><stop offset="0.6514" stop-color="#8e00ff"/><stop offset="0.8623" stop-color="#ff00fc"/><stop offset="1.0012" stop-color="#ff00bf"/></linearGradient><linearGradient id="g168" gradientUnits="userSpaceOnUse" x1="1292" y1="0" x2="1691" y2="0"><stop offset="0.0013" stop-color="#002fff"/><stop offset="0.2193" stop-color="#0006ff"/><stop offset="0.2694" stop-color="#110bff"/><stop offset="0.4348" stop-color="#2b00ff"/><stop offset="0.6604" stop-color="#9000ff"/><stop offset="0.8709" stop-color="#ff00fc"/><stop offset="1.0013" stop-color="#ff00c3"/></linearGradient><linearGradient id="g169" gradientUnits="userSpaceOnUse" x1="1293" y1="0" x2="1689" y2="0"><stop offset="0.0013" stop-color="#002eff"/><stop offset="0.2210" stop-color="#0106ff"/><stop offset="0.2715" stop-color="#100aff"/><stop offset="0.4306" stop-color="#2900ff"/><stop offset="0.6578" stop-color="#8c00ff"/><stop offset="0.8801" stop-color="#ff00fc"/><stop offset="1.0013" stop-color="#ff00c7"/></linearGradient><linearGradient id="g170" gradientUnits="userSpaceOnUse" x1="1294" y1="0" x2="1687" y2="0"><stop offset="0.0013" stop-color="#002dff"/><stop offset="0.2201" stop-color="#0005ff"/><stop offset="0.2710" stop-color="#0f09ff"/><stop offset="0.4288" stop-color="#2800ff"/><stop offset="0.6578" stop-color="#8900ff"/><stop offset="0.8893" stop-color="#ff00fc"/><stop offset="1.0013" stop-color="#ff00cb"/></linearGradient><linearGradient id="g171" gradientUnits="userSpaceOnUse" x1="1295" y1="0" x2="1685" y2="0"><stop offset="0.0013" stop-color="#002cff"/><stop offset="0.2192" stop-color="#0005ff"/><stop offset="0.2705" stop-color="#0e08ff"/><stop offset="0.4244" stop-color="#2600ff"/><stop offset="0.6526" stop-color="#8400ff"/><stop offset="0.8987" stop-color="#ff00fc"/><stop offset="1.0013" stop-color="#ff00cf"/></linearGradient><linearGradient id="g172" gradientUnits="userSpaceOnUse" x1="1297" y1="0" x2="1683" y2="0"><stop offset="0.0013" stop-color="#002bff"/><stop offset="0.2189" stop-color="#0105ff"/><stop offset="0.2707" stop-color="#0e07ff"/><stop offset="0.4184" stop-color="#2400ff"/><stop offset="0.6490" stop-color="#8000ff"/><stop offset="0.9080" stop-color="#ff00fc"/><stop offset="1.0013" stop-color="#ff00d3"/></linearGradient><linearGradient id="g173" gradientUnits="userSpaceOnUse" x1="1298" y1="0" x2="1681" y2="0"><stop offset="0.0013" stop-color="#002aff"/><stop offset="0.2180" stop-color="#0005ff"/><stop offset="0.2728" stop-color="#0d06ff"/><stop offset="0.4164" stop-color="#2200ff"/><stop offset="0.6488" stop-color="#7e00ff"/><stop offset="0.9204" stop-color="#ff00fb"/><stop offset="1.0013" stop-color="#ff00d7"/></linearGradient><linearGradient id="g174" gradientUnits="userSpaceOnUse" x1="1299" y1="0" x2="1679" y2="0"><stop offset="0.0013" stop-color="#0029ff"/><stop offset="0.2197" stop-color="#0105ff"/><stop offset="0.2803" stop-color="#0e05ff"/><stop offset="0.4145" stop-color="#2100ff"/><stop offset="0.6487" stop-color="#7b00ff"/><stop offset="0.9303" stop-color="#ff00fb"/><stop offset="1.0013" stop-color="#ff00dc"/></linearGradient><linearGradient id="g175" gradientUnits="userSpaceOnUse" x1="1300" y1="0" x2="1677" y2="0"><stop offset="0.0013" stop-color="#0028ff"/><stop offset="0.2188" stop-color="#0104ff"/><stop offset="0.2905" stop-color="#0e03ff"/><stop offset="0.4098" stop-color="#1f00ff"/><stop offset="0.6459" stop-color="#7800ff"/><stop offset="0.9403" stop-color="#ff00fb"/><stop offset="1.0013" stop-color="#ff00e0"/></linearGradient><linearGradient id="g176" gradientUnits="userSpaceOnUse" x1="1302" y1="0" x2="1675" y2="0"><stop offset="0.0013" stop-color="#0026ff"/><stop offset="0.2185" stop-color="#0104ff"/><stop offset="0.4115" stop-color="#2000ff"/><stop offset="0.6528" stop-color="#7900ff"/><stop offset="0.9504" stop-color="#ff00fb"/><stop offset="1.0013" stop-color="#ff00e5"/></linearGradient><linearGradient id="g177" gradientUnits="userSpaceOnUse" x1="1303" y1="0" x2="1673" y2="0"><stop offset="0.0014" stop-color="#0025ff"/><stop offset="0.2176" stop-color="#0104ff"/><stop offset="0.4068" stop-color="#1e00ff"/><stop offset="0.6473" stop-color="#7400ff"/><stop offset="0.9608" stop-color="#ff00fb"/><stop offset="1.0014" stop-color="#ff00e9"/></linearGradient><linearGradient id="g178" gradientUnits="userSpaceOnUse" x1="1305" y1="0" x2="1671" y2="0"><stop offset="0.0014" stop-color="#0024ff"/><stop offset="0.2145" stop-color="#0103ff"/><stop offset="0.4030" stop-color="#1d00ff"/><stop offset="0.6462" stop-color="#7200ff"/><stop offset="0.9713" stop-color="#ff00fb"/><stop offset="1.0014" stop-color="#ff00ee"/></linearGradient><linearGradient id="g179" gradientUnits="userSpaceOnUse" x1="1306" y1="0" x2="1669" y2="0"><stop offset="0.0014" stop-color="#0023ff"/><stop offset="0.2163" stop-color="#0103ff"/><stop offset="0.3981" stop-color="#1c00ff"/><stop offset="0.6433" stop-color="#6e00ff"/><stop offset="0.9821" stop-color="#ff00fb"/><stop offset="1.0014" stop-color="#ff00f3"/></linearGradient><linearGradient id="g180" gradientUnits="userSpaceOnUse" x1="1307" y1="0" x2="1667" y2="0"><stop offset="0.0014" stop-color="#0022ff"/><stop offset="0.2153" stop-color="#0103ff"/><stop offset="0.3958" stop-color="#1b00ff"/><stop offset="0.6431" stop-color="#6c00ff"/><stop offset="0.9931" stop-color="#ff00fb"/><stop offset="1.0014" stop-color="#ff00f7"/></linearGradient><linearGradient id="g181" gradientUnits="userSpaceOnUse" x1="1308" y1="0" x2="1666" y2="0"><stop offset="0.0014" stop-color="#0021ff"/><stop offset="0.2165" stop-color="#0103ff"/><stop offset="0.3925" stop-color="#1a00ff"/><stop offset="0.6411" stop-color="#6a00ff"/><stop offset="1.0014" stop-color="#ff00fb"/></linearGradient><linearGradient id="g182" gradientUnits="userSpaceOnUse" x1="1309" y1="0" x2="1664" y2="0"><stop offset="0.0014" stop-color="#0020ff"/><stop offset="0.2155" stop-color="#0103ff"/><stop offset="0.3873" stop-color="#1800ff"/><stop offset="0.6352" stop-color="#6600ff"/><stop offset="1.0014" stop-color="#fe00ff"/></linearGradient><linearGradient id="g183" gradientUnits="userSpaceOnUse" x1="1311" y1="0" x2="1662" y2="0"><stop offset="0.0014" stop-color="#001fff"/><stop offset="0.2151" stop-color="#0103ff"/><stop offset="0.3832" stop-color="#1700ff"/><stop offset="0.6368" stop-color="#6500ff"/><stop offset="1.0014" stop-color="#f900ff"/></linearGradient><linearGradient id="g184" gradientUnits="userSpaceOnUse" x1="1312" y1="0" x2="1660" y2="0"><stop offset="0.0014" stop-color="#001eff"/><stop offset="0.2141" stop-color="#0102ff"/><stop offset="0.3807" stop-color="#1600ff"/><stop offset="0.6365" stop-color="#6300ff"/><stop offset="1.0014" stop-color="#f400ff"/></linearGradient><linearGradient id="g185" gradientUnits="userSpaceOnUse" x1="1314" y1="0" x2="1658" y2="0"><stop offset="0.0015" stop-color="#001cff"/><stop offset="0.2137" stop-color="#0102ff"/><stop offset="0.3765" stop-color="#1600ff"/><stop offset="0.6352" stop-color="#6100ff"/><stop offset="1.0015" stop-color="#ef00ff"/></linearGradient><linearGradient id="g186" gradientUnits="userSpaceOnUse" x1="1315" y1="0" x2="1656" y2="0"><stop offset="0.0015" stop-color="#001cff"/><stop offset="0.2155" stop-color="#0102ff"/><stop offset="0.3739" stop-color="#1500ff"/><stop offset="0.6349" stop-color="#5f00ff"/><stop offset="1.0015" stop-color="#ea00ff"/></linearGradient><linearGradient id="g187" gradientUnits="userSpaceOnUse" x1="1316" y1="0" x2="1654" y2="0"><stop offset="0.0015" stop-color="#001bff"/><stop offset="0.2145" stop-color="#0102ff"/><stop offset="0.3743" stop-color="#1500ff"/><stop offset="0.6376" stop-color="#5e00ff"/><stop offset="1.0015" stop-color="#e600ff"/></linearGradient><linearGradient id="g188" gradientUnits="userSpaceOnUse" x1="1318" y1="0" x2="1652" y2="0"><stop offset="0.0015" stop-color="#001aff"/><stop offset="0.2141" stop-color="#0102ff"/><stop offset="0.3698" stop-color="#1400ff"/><stop offset="0.6362" stop-color="#5c00ff"/><stop offset="1.0015" stop-color="#e100ff"/></linearGradient><linearGradient id="g189" gradientUnits="userSpaceOnUse" x1="1319" y1="0" x2="1650" y2="0"><stop offset="0.0015" stop-color="#0019ff"/><stop offset="0.2160" stop-color="#0202ff"/><stop offset="0.3701" stop-color="#1400ff"/><stop offset="0.6420" stop-color="#5d00ff"/><stop offset="1.0015" stop-color="#dd00ff"/></linearGradient><linearGradient id="g190" gradientUnits="userSpaceOnUse" x1="1321" y1="0" x2="1648" y2="0"><stop offset="0.0015" stop-color="#0018ff"/><stop offset="0.2156" stop-color="#0201ff"/><stop offset="0.3716" stop-color="#1400ff"/><stop offset="0.6498" stop-color="#5e00ff"/><stop offset="1.0015" stop-color="#d800ff"/></linearGradient><linearGradient id="g191" gradientUnits="userSpaceOnUse" x1="1322" y1="0" x2="1646" y2="0"><stop offset="0.0015" stop-color="#0017ff"/><stop offset="0.2176" stop-color="#0201ff"/><stop offset="0.3812" stop-color="#1600ff"/><stop offset="0.6682" stop-color="#6200ff"/><stop offset="1.0015" stop-color="#d400ff"/></linearGradient><linearGradient id="g192" gradientUnits="userSpaceOnUse" x1="1323" y1="0" x2="1644" y2="0"><stop offset="0.0016" stop-color="#0016ff"/><stop offset="0.2196" stop-color="#0201ff"/><stop offset="0.3910" stop-color="#1800ff"/><stop offset="0.6869" stop-color="#6500ff"/><stop offset="1.0016" stop-color="#d000ff"/></linearGradient><linearGradient id="g193" gradientUnits="userSpaceOnUse" x1="1324" y1="0" x2="1642" y2="0"><stop offset="0.0016" stop-color="#0015ff"/><stop offset="0.2217" stop-color="#0200ff"/><stop offset="0.4041" stop-color="#1a00ff"/><stop offset="0.7123" stop-color="#6b00ff"/><stop offset="1.0016" stop-color="#cc00ff"/></linearGradient><linearGradient id="g194" gradientUnits="userSpaceOnUse" x1="1326" y1="0" x2="1640" y2="0"><stop offset="0.0016" stop-color="#0014ff"/><stop offset="0.2213" stop-color="#0200ff"/><stop offset="0.4124" stop-color="#1c00ff"/><stop offset="0.7309" stop-color="#6f00ff"/><stop offset="1.0016" stop-color="#c800ff"/></linearGradient><linearGradient id="g195" gradientUnits="userSpaceOnUse" x1="1327" y1="0" x2="1638" y2="0"><stop offset="0.0016" stop-color="#0014ff"/><stop offset="0.2235" stop-color="#0200ff"/><stop offset="0.4260" stop-color="#1e00ff"/><stop offset="0.7572" stop-color="#7500ff"/><stop offset="1.0016" stop-color="#c400ff"/></linearGradient><linearGradient id="g196" gradientUnits="userSpaceOnUse" x1="1329" y1="0" x2="1636" y2="0"><stop offset="0.0016" stop-color="#0012ff"/><stop offset="0.2231" stop-color="#0200ff"/><stop offset="0.4381" stop-color="#2100ff"/><stop offset="0.7834" stop-color="#7b00ff"/><stop offset="1.0016" stop-color="#c000ff"/></linearGradient><linearGradient id="g197" gradientUnits="userSpaceOnUse" x1="1331" y1="0" x2="1634" y2="0"><stop offset="0.0017" stop-color="#0011ff"/><stop offset="0.2228" stop-color="#0200ff"/><stop offset="0.4505" stop-color="#2300ff"/><stop offset="0.8069" stop-color="#7f00ff"/><stop offset="1.0017" stop-color="#bc00ff"/></linearGradient><linearGradient id="g198" gradientUnits="userSpaceOnUse" x1="1332" y1="0" x2="1633" y2="0"><stop offset="0.0017" stop-color="#0011ff"/><stop offset="0.2209" stop-color="#0100ff"/><stop offset="0.4568" stop-color="#2400ff"/><stop offset="0.8223" stop-color="#8200ff"/><stop offset="1.0017" stop-color="#b900ff"/></linearGradient><linearGradient id="g199" gradientUnits="userSpaceOnUse" x1="1334" y1="0" x2="1631" y2="0"><stop offset="0.0017" stop-color="#0010ff"/><stop offset="0.2205" stop-color="#0200ff"/><stop offset="0.4630" stop-color="#2500ff"/><stop offset="0.8401" stop-color="#8500ff"/><stop offset="1.0017" stop-color="#b600ff"/></linearGradient><linearGradient id="g200" gradientUnits="userSpaceOnUse" x1="1335" y1="0" x2="1629" y2="0"><stop offset="0.0017" stop-color="#000fff"/><stop offset="0.2228" stop-color="#0200ff"/><stop offset="0.4711" stop-color="#2700ff"/><stop offset="0.8554" stop-color="#8700ff"/><stop offset="1.0017" stop-color="#b200ff"/></linearGradient><linearGradient id="g201" gradientUnits="userSpaceOnUse" x1="1337" y1="0" x2="1627" y2="0"><stop offset="0.0017" stop-color="#000eff"/><stop offset="0.2224" stop-color="#0200ff"/><stop offset="0.4810" stop-color="#2800ff"/><stop offset="0.8776" stop-color="#8a00ff"/><stop offset="1.0017" stop-color="#ae00ff"/></linearGradient><linearGradient id="g202" gradientUnits="userSpaceOnUse" x1="1338" y1="0" x2="1625" y2="0"><stop offset="0.0017" stop-color="#000dff"/><stop offset="0.2247" stop-color="#0200ff"/><stop offset="0.4895" stop-color="#2900ff"/><stop offset="0.8972" stop-color="#8d00ff"/><stop offset="1.0017" stop-color="#ab00ff"/></linearGradient><linearGradient id="g203" gradientUnits="userSpaceOnUse" x1="1339" y1="0" x2="1623" y2="0"><stop offset="0.0018" stop-color="#000dff"/><stop offset="0.2271" stop-color="#0300ff"/><stop offset="0.4982" stop-color="#2a00ff"/><stop offset="0.9173" stop-color="#9000ff"/><stop offset="1.0018" stop-color="#a700ff"/></linearGradient><linearGradient id="g204" gradientUnits="userSpaceOnUse" x1="1341" y1="0" x2="1621" y2="0"><stop offset="0.0018" stop-color="#000cff"/><stop offset="0.2268" stop-color="#0300ff"/><stop offset="0.5054" stop-color="#2c00ff"/><stop offset="0.9339" stop-color="#9100ff"/><stop offset="1.0018" stop-color="#a400ff"/></linearGradient><linearGradient id="g205" gradientUnits="userSpaceOnUse" x1="1342" y1="0" x2="1619" y2="0"><stop offset="0.0018" stop-color="#000bff"/><stop offset="0.2292" stop-color="#0300ff"/><stop offset="0.5181" stop-color="#2d00ff"/><stop offset="0.9621" stop-color="#9600ff"/><stop offset="1.0018" stop-color="#a100ff"/></linearGradient><linearGradient id="g206" gradientUnits="userSpaceOnUse" x1="1344" y1="0" x2="1617" y2="0"><stop offset="0.0018" stop-color="#000bff"/><stop offset="0.2326" stop-color="#0400ff"/><stop offset="0.5293" stop-color="#2f00ff"/><stop offset="0.9872" stop-color="#9900ff"/><stop offset="1.0018" stop-color="#9d00ff"/></linearGradient><linearGradient id="g207" gradientUnits="userSpaceOnUse" x1="1345" y1="0" x2="1615" y2="0"><stop offset="0.0019" stop-color="#000aff"/><stop offset="0.2389" stop-color="#0500ff"/><stop offset="0.5463" stop-color="#3200ff"/><stop offset="1.0019" stop-color="#9a00ff"/></linearGradient><linearGradient id="g208" gradientUnits="userSpaceOnUse" x1="1347" y1="0" x2="1613" y2="0"><stop offset="0.0019" stop-color="#0009ff"/><stop offset="0.2462" stop-color="#0600ff"/><stop offset="0.5658" stop-color="#3500ff"/><stop offset="1.0019" stop-color="#9700ff"/></linearGradient><linearGradient id="g209" gradientUnits="userSpaceOnUse" x1="1349" y1="0" x2="1611" y2="0"><stop offset="0.0019" stop-color="#0008ff"/><stop offset="0.2576" stop-color="#0700ff"/><stop offset="0.5935" stop-color="#3900ff"/><stop offset="1.0019" stop-color="#9400ff"/></linearGradient><linearGradient id="g210" gradientUnits="userSpaceOnUse" x1="1350" y1="0" x2="1609" y2="0"><stop offset="0.0019" stop-color="#0008ff"/><stop offset="0.2568" stop-color="#0700ff"/><stop offset="0.6004" stop-color="#3a00ff"/><stop offset="1.0019" stop-color="#9100ff"/></linearGradient><linearGradient id="g211" gradientUnits="userSpaceOnUse" x1="1352" y1="0" x2="1607" y2="0"><stop offset="0.0020" stop-color="#0007ff"/><stop offset="0.2569" stop-color="#0700ff"/><stop offset="0.6098" stop-color="#3b00ff"/><stop offset="1.0020" stop-color="#8e00ff"/></linearGradient><linearGradient id="g212" gradientUnits="userSpaceOnUse" x1="1353" y1="0" x2="1605" y2="0"><stop offset="0.0020" stop-color="#0007ff"/><stop offset="0.2560" stop-color="#0700ff"/><stop offset="0.6171" stop-color="#3b00ff"/><stop offset="1.0020" stop-color="#8b00ff"/></linearGradient><linearGradient id="g213" gradientUnits="userSpaceOnUse" x1="1355" y1="0" x2="1603" y2="0"><stop offset="0.0020" stop-color="#0006ff"/><stop offset="0.2560" stop-color="#0800ff"/><stop offset="0.6270" stop-color="#3c00ff"/><stop offset="1.0020" stop-color="#8800ff"/></linearGradient><linearGradient id="g214" gradientUnits="userSpaceOnUse" x1="1357" y1="0" x2="1602" y2="0"><stop offset="0.0020" stop-color="#0005ff"/><stop offset="0.2551" stop-color="#0800ff"/><stop offset="0.6347" stop-color="#3d00ff"/><stop offset="1.0020" stop-color="#8600ff"/></linearGradient><linearGradient id="g215" gradientUnits="userSpaceOnUse" x1="1358" y1="0" x2="1600" y2="0"><stop offset="0.0021" stop-color="#0005ff"/><stop offset="0.2583" stop-color="#0800ff"/><stop offset="0.6467" stop-color="#3e00ff"/><stop offset="1.0021" stop-color="#8300ff"/></linearGradient><linearGradient id="g216" gradientUnits="userSpaceOnUse" x1="1360" y1="0" x2="1598" y2="0"><stop offset="0.0021" stop-color="#0004ff"/><stop offset="0.2626" stop-color="#0900ff"/><stop offset="0.6660" stop-color="#4000ff"/><stop offset="1.0021" stop-color="#8000ff"/></linearGradient><linearGradient id="g217" gradientUnits="userSpaceOnUse" x1="1361" y1="0" x2="1596" y2="0"><stop offset="0.0021" stop-color="#0004ff"/><stop offset="0.2617" stop-color="#0900ff"/><stop offset="0.6702" stop-color="#4000ff"/><stop offset="1.0021" stop-color="#7e00ff"/></linearGradient><linearGradient id="g218" gradientUnits="userSpaceOnUse" x1="1363" y1="0" x2="1594" y2="0"><stop offset="0.0022" stop-color="#0003ff"/><stop offset="0.2662" stop-color="#0a00ff"/><stop offset="0.6905" stop-color="#4200ff"/><stop offset="1.0022" stop-color="#7b00ff"/></linearGradient><linearGradient id="g219" gradientUnits="userSpaceOnUse" x1="1365" y1="0" x2="1592" y2="0"><stop offset="0.0022" stop-color="#0003ff"/><stop offset="0.2709" stop-color="#0b00ff"/><stop offset="0.7115" stop-color="#4500ff"/><stop offset="1.0022" stop-color="#7800ff"/></linearGradient><linearGradient id="g220" gradientUnits="userSpaceOnUse" x1="1366" y1="0" x2="1590" y2="0"><stop offset="0.0022" stop-color="#0003ff"/><stop offset="0.2746" stop-color="#0b00ff"/><stop offset="0.7254" stop-color="#4600ff"/><stop offset="1.0022" stop-color="#7600ff"/></linearGradient><linearGradient id="g221" gradientUnits="userSpaceOnUse" x1="1368" y1="0" x2="1588" y2="0"><stop offset="0.0023" stop-color="#0002ff"/><stop offset="0.2841" stop-color="#0c00ff"/><stop offset="0.7523" stop-color="#4900ff"/><stop offset="1.0023" stop-color="#7300ff"/></linearGradient><linearGradient id="g222" gradientUnits="userSpaceOnUse" x1="1369" y1="0" x2="1586" y2="0"><stop offset="0.0023" stop-color="#0002ff"/><stop offset="0.2880" stop-color="#0c00ff"/><stop offset="0.7673" stop-color="#4a00ff"/><stop offset="1.0023" stop-color="#7100ff"/></linearGradient><linearGradient id="g223" gradientUnits="userSpaceOnUse" x1="1371" y1="0" x2="1584" y2="0"><stop offset="0.0023" stop-color="#0001ff"/><stop offset="0.2981" stop-color="#0e00ff"/><stop offset="0.7958" stop-color="#4d00ff"/><stop offset="1.0023" stop-color="#6e00ff"/></linearGradient><linearGradient id="g224" gradientUnits="userSpaceOnUse" x1="1373" y1="0" x2="1582" y2="0"><stop offset="0.0024" stop-color="#0001ff"/><stop offset="0.3134" stop-color="#0f00ff"/><stop offset="0.8349" stop-color="#5100ff"/><stop offset="1.0024" stop-color="#6c00ff"/></linearGradient><linearGradient id="g225" gradientUnits="userSpaceOnUse" x1="1375" y1="0" x2="1580" y2="0"><stop offset="0.0024" stop-color="#0001ff"/><stop offset="0.3244" stop-color="#1100ff"/><stop offset="0.8659" stop-color="#5400ff"/><stop offset="1.0024" stop-color="#6a00ff"/></linearGradient><linearGradient id="g226" gradientUnits="userSpaceOnUse" x1="1376" y1="0" x2="1578" y2="0"><stop offset="0.0025" stop-color="#0001ff"/><stop offset="0.3391" stop-color="#1200ff"/><stop offset="0.8985" stop-color="#5700ff"/><stop offset="1.0025" stop-color="#6700ff"/></linearGradient><linearGradient id="g227" gradientUnits="userSpaceOnUse" x1="1378" y1="0" x2="1576" y2="0"><stop offset="0.0025" stop-color="#0000ff"/><stop offset="0.3561" stop-color="#1400ff"/><stop offset="0.9419" stop-color="#5c00ff"/><stop offset="1.0025" stop-color="#6500ff"/></linearGradient><linearGradient id="g228" gradientUnits="userSpaceOnUse" x1="1380" y1="0" x2="1574" y2="0"><stop offset="0.0026" stop-color="#0000ff"/><stop offset="0.3789" stop-color="#1600ff"/><stop offset="0.9923" stop-color="#6100ff"/><stop offset="1.0026" stop-color="#6300ff"/></linearGradient><linearGradient id="g229" gradientUnits="userSpaceOnUse" x1="1382" y1="0" x2="1572" y2="0"><stop offset="0.0026" stop-color="#0000ff"/><stop offset="0.4026" stop-color="#1800ff"/><stop offset="1.0026" stop-color="#6100ff"/></linearGradient><linearGradient id="g230" gradientUnits="userSpaceOnUse" x1="1384" y1="0" x2="1570" y2="0"><stop offset="0.0027" stop-color="#0000ff"/><stop offset="0.4274" stop-color="#1b00ff"/><stop offset="1.0027" stop-color="#5f00ff"/></linearGradient><linearGradient id="g231" gradientUnits="userSpaceOnUse" x1="1385" y1="0" x2="1569" y2="0"><stop offset="0.0027" stop-color="#0000ff"/><stop offset="0.4375" stop-color="#1b00ff"/><stop offset="1.0027" stop-color="#5d00ff"/></linearGradient><linearGradient id="g232" gradientUnits="userSpaceOnUse" x1="1388" y1="0" x2="1567" y2="0"><stop offset="0.0028" stop-color="#0000ff"/><stop offset="0.4721" stop-color="#1f00ff"/><stop offset="1.0028" stop-color="#5b00ff"/></linearGradient><linearGradient id="g233" gradientUnits="userSpaceOnUse" x1="1390" y1="0" x2="1565" y2="0"><stop offset="0.0029" stop-color="#0100ff"/><stop offset="0.4943" stop-color="#2100ff"/><stop offset="1.0029" stop-color="#5900ff"/></linearGradient><linearGradient id="g234" gradientUnits="userSpaceOnUse" x1="1392" y1="0" x2="1563" y2="0"><stop offset="0.0029" stop-color="#0100ff"/><stop offset="0.5175" stop-color="#2300ff"/><stop offset="1.0029" stop-color="#5700ff"/></linearGradient><linearGradient id="g235" gradientUnits="userSpaceOnUse" x1="1394" y1="0" x2="1561" y2="0"><stop offset="0.0030" stop-color="#0100ff"/><stop offset="0.5419" stop-color="#2500ff"/><stop offset="1.0030" stop-color="#5500ff"/></linearGradient><linearGradient id="g236" gradientUnits="userSpaceOnUse" x1="1396" y1="0" x2="1559" y2="0"><stop offset="0.0031" stop-color="#0200ff"/><stop offset="0.5675" stop-color="#2700ff"/><stop offset="1.0031" stop-color="#5300ff"/></linearGradient><linearGradient id="g237" gradientUnits="userSpaceOnUse" x1="1398" y1="0" x2="1557" y2="0"><stop offset="0.0031" stop-color="#0200ff"/><stop offset="0.5943" stop-color="#2900ff"/><stop offset="1.0031" stop-color="#5100ff"/></linearGradient><linearGradient id="g238" gradientUnits="userSpaceOnUse" x1="1400" y1="0" x2="1555" y2="0"><stop offset="0.0032" stop-color="#0300ff"/><stop offset="0.6226" stop-color="#2b00ff"/><stop offset="1.0032" stop-color="#4f00ff"/></linearGradient><linearGradient id="g239" gradientUnits="userSpaceOnUse" x1="1403" y1="0" x2="1553" y2="0"><stop offset="0.0033" stop-color="#0300ff"/><stop offset="0.6567" stop-color="#2d00ff"/><stop offset="1.0033" stop-color="#4d00ff"/></linearGradient><linearGradient id="g240" gradientUnits="userSpaceOnUse" x1="1404" y1="0" x2="1551" y2="0"><stop offset="0.0034" stop-color="#0400ff"/><stop offset="0.6769" stop-color="#2e00ff"/><stop offset="1.0034" stop-color="#4c00ff"/></linearGradient><linearGradient id="g241" gradientUnits="userSpaceOnUse" x1="1407" y1="0" x2="1549" y2="0"><stop offset="0.0035" stop-color="#0400ff"/><stop offset="0.7218" stop-color="#3100ff"/><stop offset="1.0035" stop-color="#4a00ff"/></linearGradient><linearGradient id="g242" gradientUnits="userSpaceOnUse" x1="1409" y1="0" x2="1547" y2="0"><stop offset="0.0036" stop-color="#0500ff"/><stop offset="0.7500" stop-color="#3300ff"/><stop offset="1.0036" stop-color="#4800ff"/></linearGradient><linearGradient id="g243" gradientUnits="userSpaceOnUse" x1="1411" y1="0" x2="1545" y2="0"><stop offset="0.0037" stop-color="#0500ff"/><stop offset="0.7873" stop-color="#3500ff"/><stop offset="1.0037" stop-color="#4600ff"/></linearGradient><linearGradient id="g244" gradientUnits="userSpaceOnUse" x1="1414" y1="0" x2="1543" y2="0"><stop offset="0.0039" stop-color="#0600ff"/><stop offset="0.8333" stop-color="#3700ff"/><stop offset="1.0039" stop-color="#4500ff"/></linearGradient><linearGradient id="g245" gradientUnits="userSpaceOnUse" x1="1416" y1="0" x2="1541" y2="0"><stop offset="0.0040" stop-color="#0700ff"/><stop offset="0.8760" stop-color="#3900ff"/><stop offset="1.0040" stop-color="#4300ff"/></linearGradient><linearGradient id="g246" gradientUnits="userSpaceOnUse" x1="1418" y1="0" x2="1539" y2="0"><stop offset="0.0041" stop-color="#0700ff"/><stop offset="0.9215" stop-color="#3b00ff"/><stop offset="1.0041" stop-color="#4100ff"/></linearGradient><linearGradient id="g247" gradientUnits="userSpaceOnUse" x1="1420" y1="0" x2="1538" y2="0"><stop offset="0.0042" stop-color="#0800ff"/><stop offset="0.9534" stop-color="#3d00ff"/><stop offset="1.0042" stop-color="#4000ff"/></linearGradient><linearGradient id="g248" gradientUnits="userSpaceOnUse" x1="1422" y1="0" x2="1536" y2="0"><stop offset="0.0044" stop-color="#0900ff"/><stop offset="1.0044" stop-color="#3f00ff"/></linearGradient><linearGradient id="g249" gradientUnits="userSpaceOnUse" x1="1425" y1="0" x2="1534" y2="0"><stop offset="0.0046" stop-color="#0a00ff"/><stop offset="1.0046" stop-color="#3d00ff"/></linearGradient><linearGradient id="g250" gradientUnits="userSpaceOnUse" x1="1427" y1="0" x2="1532" y2="0"><stop offset="0.0048" stop-color="#0a00ff"/><stop offset="1.0048" stop-color="#3c00ff"/></linearGradient><linearGradient id="g251" gradientUnits="userSpaceOnUse" x1="1429" y1="0" x2="1530" y2="0"><stop offset="0.0050" stop-color="#0b00ff"/><stop offset="1.0050" stop-color="#3a00ff"/></linearGradient><linearGradient id="g252" gradientUnits="userSpaceOnUse" x1="1432" y1="0" x2="1528" y2="0"><stop offset="0.0052" stop-color="#0c00ff"/><stop offset="1.0052" stop-color="#3900ff"/></linearGradient><linearGradient id="g253" gradientUnits="userSpaceOnUse" x1="1435" y1="0" x2="1526" y2="0"><stop offset="0.0055" stop-color="#0d00ff"/><stop offset="1.0055" stop-color="#3700ff"/></linearGradient><linearGradient id="g254" gradientUnits="userSpaceOnUse" x1="1437" y1="0" x2="1524" y2="0"><stop offset="0.0057" stop-color="#0d00ff"/><stop offset="1.0057" stop-color="#3600ff"/></linearGradient><linearGradient id="g255" gradientUnits="userSpaceOnUse" x1="1439" y1="0" x2="1522" y2="0"><stop offset="0.0060" stop-color="#0e00ff"/><stop offset="1.0060" stop-color="#3400ff"/></linearGradient><linearGradient id="g256" gradientUnits="userSpaceOnUse" x1="1442" y1="0" x2="1520" y2="0"><stop offset="0.0064" stop-color="#0f00ff"/><stop offset="1.0064" stop-color="#3300ff"/></linearGradient><linearGradient id="g257" gradientUnits="userSpaceOnUse" x1="1445" y1="0" x2="1518" y2="0"><stop offset="0.0068" stop-color="#1000ff"/><stop offset="1.0068" stop-color="#3200ff"/></linearGradient><linearGradient id="g258" gradientUnits="userSpaceOnUse" x1="1446" y1="0" x2="1516" y2="0"><stop offset="0.0071" stop-color="#1100ff"/><stop offset="1.0071" stop-color="#3000ff"/></linearGradient><linearGradient id="g259" gradientUnits="userSpaceOnUse" x1="1449" y1="0" x2="1514" y2="0"><stop offset="0.0077" stop-color="#1200ff"/><stop offset="1.0077" stop-color="#2f00ff"/></linearGradient><linearGradient id="g260" gradientUnits="userSpaceOnUse" x1="1452" y1="0" x2="1512" y2="0"><stop offset="0.0083" stop-color="#1300ff"/><stop offset="1.0083" stop-color="#2e00ff"/></linearGradient><linearGradient id="g261" gradientUnits="userSpaceOnUse" x1="1454" y1="0" x2="1510" y2="0"><stop offset="0.0089" stop-color="#1300ff"/><stop offset="1.0089" stop-color="#2c00ff"/></linearGradient><linearGradient id="g262" gradientUnits="userSpaceOnUse" x1="1457" y1="0" x2="1508" y2="0"><stop offset="0.0098" stop-color="#1400ff"/><stop offset="1.0098" stop-color="#2b00ff"/></linearGradient><linearGradient id="g263" gradientUnits="userSpaceOnUse" x1="1459" y1="0" x2="1506" y2="0"><stop offset="0.0106" stop-color="#1500ff"/><stop offset="1.0106" stop-color="#2a00ff"/></linearGradient><linearGradient id="g264" gradientUnits="userSpaceOnUse" x1="1461" y1="0" x2="1505" y2="0"><stop offset="0.0114" stop-color="#1600ff"/><stop offset="1.0114" stop-color="#2900ff"/></linearGradient><linearGradient id="g265" gradientUnits="userSpaceOnUse" x1="1463" y1="0" x2="1503" y2="0"><stop offset="0.0125" stop-color="#1700ff"/><stop offset="1.0125" stop-color="#2800ff"/></linearGradient><linearGradient id="g266" gradientUnits="userSpaceOnUse" x1="1465" y1="0" x2="1501" y2="0"><stop offset="0.0139" stop-color="#1700ff"/><stop offset="1.0139" stop-color="#2700ff"/></linearGradient><linearGradient id="g267" gradientUnits="userSpaceOnUse" x1="1468" y1="0" x2="1499" y2="0"><stop offset="0.0161" stop-color="#1800ff"/><stop offset="1.0161" stop-color="#2600ff"/></linearGradient><linearGradient id="g268" gradientUnits="userSpaceOnUse" x1="1470" y1="0" x2="1497" y2="0"><stop offset="0.0185" stop-color="#1900ff"/><stop offset="1.0185" stop-color="#2500ff"/></linearGradient><linearGradient id="g269" gradientUnits="userSpaceOnUse" x1="1473" y1="0" x2="1495" y2="0"><stop offset="0.0227" stop-color="#1a00ff"/><stop offset="1.0227" stop-color="#2400ff"/></linearGradient><linearGradient id="g270" gradientUnits="userSpaceOnUse" x1="1475" y1="0" x2="1493" y2="0"><stop offset="0.0278" stop-color="#1b00ff"/><stop offset="1.0278" stop-color="#2300ff"/></linearGradient><linearGradient id="g271" gradientUnits="userSpaceOnUse" x1="1478" y1="0" x2="1491" y2="0"><stop offset="0.0385" stop-color="#1c00ff"/><stop offset="1.0385" stop-color="#2200ff"/></linearGradient><clipPath id="tri"><path d="M1325.65 162.88 L1724.96 200.26 L1387.49 544.63 Z"/></clipPath><g id="cierows"><rect x="1233" y="136" width="10" height="2.5" fill="url(#g0)"/><rect x="1204" y="138" width="80" height="2.5" fill="url(#g1)"/><rect x="1196" y="140" width="112" height="2.5" fill="url(#g2)"/><rect x="1191" y="142" width="136" height="2.5" fill="url(#g3)"/><rect x="1188" y="144" width="158" height="2.5" fill="url(#g4)"/><rect x="1185" y="146" width="181" height="2.5" fill="url(#g5)"/><rect x="1182" y="148" width="202" height="2.5" fill="url(#g6)"/><rect x="1181" y="150" width="218" height="2.5" fill="url(#g7)"/><rect x="1180" y="152" width="239" height="2.5" fill="url(#g8)"/><rect x="1177" y="154" width="259" height="2.5" fill="url(#g9)"/><rect x="1176" y="156" width="278" height="2.5" fill="url(#g10)"/><rect x="1176" y="158" width="292" height="2.5" fill="url(#g11)"/><rect x="1175" y="160" width="312" height="2.5" fill="url(#g12)"/><rect x="1174" y="162" width="333" height="2.5" fill="url(#g13)"/><rect x="1173" y="164" width="349" height="2.5" fill="url(#g14)"/><rect x="1173" y="166" width="365" height="2.5" fill="url(#g15)"/><rect x="1173" y="168" width="381" height="2.5" fill="url(#g16)"/><rect x="1172" y="170" width="404" height="2.5" fill="url(#g17)"/><rect x="1172" y="172" width="420" height="2.5" fill="url(#g18)"/><rect x="1172" y="174" width="437" height="2.5" fill="url(#g19)"/><rect x="1172" y="176" width="454" height="2.5" fill="url(#g20)"/><rect x="1172" y="178" width="471" height="2.5" fill="url(#g21)"/><rect x="1172" y="180" width="487" height="2.5" fill="url(#g22)"/><rect x="1172" y="182" width="508" height="2.5" fill="url(#g23)"/><rect x="1172" y="184" width="524" height="2.5" fill="url(#g24)"/><rect x="1172" y="186" width="540" height="2.5" fill="url(#g25)"/><rect x="1172" y="188" width="559" height="2.5" fill="url(#g26)"/><rect x="1172" y="190" width="578" height="2.5" fill="url(#g27)"/><rect x="1172" y="192" width="596" height="2.5" fill="url(#g28)"/><rect x="1172" y="194" width="612" height="2.5" fill="url(#g29)"/><rect x="1172" y="196" width="630" height="2.5" fill="url(#g30)"/><rect x="1172" y="198" width="647" height="2.5" fill="url(#g31)"/><rect x="1173" y="200" width="664" height="2.5" fill="url(#g32)"/><rect x="1173" y="202" width="682" height="2.5" fill="url(#g33)"/><rect x="1173" y="204" width="698" height="2.5" fill="url(#g34)"/><rect x="1173" y="206" width="715" height="2.5" fill="url(#g35)"/><rect x="1174" y="208" width="732" height="2.5" fill="url(#g36)"/><rect x="1174" y="210" width="736" height="2.5" fill="url(#g37)"/><rect x="1175" y="212" width="735" height="2.5" fill="url(#g38)"/><rect x="1175" y="214" width="735" height="2.5" fill="url(#g39)"/><rect x="1175" y="216" width="735" height="2.5" fill="url(#g40)"/><rect x="1176" y="218" width="734" height="2.5" fill="url(#g41)"/><rect x="1176" y="220" width="734" height="2.5" fill="url(#g42)"/><rect x="1177" y="222" width="733" height="2.5" fill="url(#g43)"/><rect x="1177" y="224" width="733" height="2.5" fill="url(#g44)"/><rect x="1177" y="226" width="733" height="2.5" fill="url(#g45)"/><rect x="1178" y="228" width="732" height="2.5" fill="url(#g46)"/><rect x="1178" y="230" width="732" height="2.5" fill="url(#g47)"/><rect x="1179" y="232" width="731" height="2.5" fill="url(#g48)"/><rect x="1180" y="234" width="730" height="2.5" fill="url(#g49)"/><rect x="1180" y="236" width="730" height="2.5" fill="url(#g50)"/><rect x="1181" y="238" width="729" height="2.5" fill="url(#g51)"/><rect x="1181" y="240" width="729" height="2.5" fill="url(#g52)"/><rect x="1182" y="242" width="728" height="2.5" fill="url(#g53)"/><rect x="1183" y="244" width="727" height="2.5" fill="url(#g54)"/><rect x="1183" y="246" width="727" height="2.5" fill="url(#g55)"/><rect x="1184" y="248" width="724" height="2.5" fill="url(#g56)"/><rect x="1184" y="250" width="722" height="2.5" fill="url(#g57)"/><rect x="1184" y="252" width="720" height="2.5" fill="url(#g58)"/><rect x="1185" y="254" width="717" height="2.5" fill="url(#g59)"/><rect x="1186" y="256" width="714" height="2.5" fill="url(#g60)"/><rect x="1187" y="258" width="711" height="2.5" fill="url(#g61)"/><rect x="1188" y="260" width="708" height="2.5" fill="url(#g62)"/><rect x="1189" y="262" width="705" height="2.5" fill="url(#g63)"/><rect x="1189" y="264" width="703" height="2.5" fill="url(#g64)"/><rect x="1190" y="266" width="701" height="2.5" fill="url(#g65)"/><rect x="1190" y="268" width="699" height="2.5" fill="url(#g66)"/><rect x="1191" y="270" width="696" height="2.5" fill="url(#g67)"/><rect x="1192" y="272" width="693" height="2.5" fill="url(#g68)"/><rect x="1192" y="274" width="691" height="2.5" fill="url(#g69)"/><rect x="1193" y="276" width="688" height="2.5" fill="url(#g70)"/><rect x="1193" y="278" width="686" height="2.5" fill="url(#g71)"/><rect x="1194" y="280" width="683" height="2.5" fill="url(#g72)"/><rect x="1195" y="282" width="680" height="2.5" fill="url(#g73)"/><rect x="1196" y="284" width="677" height="2.5" fill="url(#g74)"/><rect x="1197" y="286" width="674" height="2.5" fill="url(#g75)"/><rect x="1198" y="288" width="671" height="2.5" fill="url(#g76)"/><rect x="1199" y="290" width="668" height="2.5" fill="url(#g77)"/><rect x="1199" y="292" width="666" height="2.5" fill="url(#g78)"/><rect x="1200" y="294" width="663" height="2.5" fill="url(#g79)"/><rect x="1200" y="296" width="661" height="2.5" fill="url(#g80)"/><rect x="1201" y="298" width="658" height="2.5" fill="url(#g81)"/><rect x="1202" y="300" width="656" height="2.5" fill="url(#g82)"/><rect x="1203" y="302" width="653" height="2.5" fill="url(#g83)"/><rect x="1203" y="304" width="651" height="2.5" fill="url(#g84)"/><rect x="1204" y="306" width="648" height="2.5" fill="url(#g85)"/><rect x="1205" y="308" width="645" height="2.5" fill="url(#g86)"/><rect x="1206" y="310" width="642" height="2.5" fill="url(#g87)"/><rect x="1207" y="312" width="639" height="2.5" fill="url(#g88)"/><rect x="1208" y="314" width="636" height="2.5" fill="url(#g89)"/><rect x="1209" y="316" width="633" height="2.5" fill="url(#g90)"/><rect x="1210" y="318" width="630" height="2.5" fill="url(#g91)"/><rect x="1211" y="320" width="627" height="2.5" fill="url(#g92)"/><rect x="1211" y="322" width="625" height="2.5" fill="url(#g93)"/><rect x="1212" y="324" width="622" height="2.5" fill="url(#g94)"/><rect x="1213" y="326" width="619" height="2.5" fill="url(#g95)"/><rect x="1214" y="328" width="616" height="2.5" fill="url(#g96)"/><rect x="1215" y="330" width="613" height="2.5" fill="url(#g97)"/><rect x="1216" y="332" width="611" height="2.5" fill="url(#g98)"/><rect x="1217" y="334" width="608" height="2.5" fill="url(#g99)"/><rect x="1218" y="336" width="605" height="2.5" fill="url(#g100)"/><rect x="1218" y="338" width="603" height="2.5" fill="url(#g101)"/><rect x="1219" y="340" width="600" height="2.5" fill="url(#g102)"/><rect x="1220" y="342" width="597" height="2.5" fill="url(#g103)"/><rect x="1221" y="344" width="594" height="2.5" fill="url(#g104)"/><rect x="1222" y="346" width="591" height="2.5" fill="url(#g105)"/><rect x="1223" y="348" width="588" height="2.5" fill="url(#g106)"/><rect x="1224" y="350" width="585" height="2.5" fill="url(#g107)"/><rect x="1225" y="352" width="582" height="2.5" fill="url(#g108)"/><rect x="1226" y="354" width="579" height="2.5" fill="url(#g109)"/><rect x="1227" y="356" width="576" height="2.5" fill="url(#g110)"/><rect x="1228" y="358" width="573" height="2.5" fill="url(#g111)"/><rect x="1229" y="360" width="570" height="2.5" fill="url(#g112)"/><rect x="1230" y="362" width="567" height="2.5" fill="url(#g113)"/><rect x="1231" y="364" width="564" height="2.5" fill="url(#g114)"/><rect x="1232" y="366" width="562" height="2.5" fill="url(#g115)"/><rect x="1233" y="368" width="559" height="2.5" fill="url(#g116)"/><rect x="1234" y="370" width="556" height="2.5" fill="url(#g117)"/><rect x="1235" y="372" width="553" height="2.5" fill="url(#g118)"/><rect x="1236" y="374" width="550" height="2.5" fill="url(#g119)"/><rect x="1237" y="376" width="547" height="2.5" fill="url(#g120)"/><rect x="1238" y="378" width="544" height="2.5" fill="url(#g121)"/><rect x="1239" y="380" width="541" height="2.5" fill="url(#g122)"/><rect x="1240" y="382" width="538" height="2.5" fill="url(#g123)"/><rect x="1241" y="384" width="535" height="2.5" fill="url(#g124)"/><rect x="1242" y="386" width="532" height="2.5" fill="url(#g125)"/><rect x="1243" y="388" width="529" height="2.5" fill="url(#g126)"/><rect x="1244" y="390" width="526" height="2.5" fill="url(#g127)"/><rect x="1245" y="392" width="523" height="2.5" fill="url(#g128)"/><rect x="1246" y="394" width="520" height="2.5" fill="url(#g129)"/><rect x="1247" y="396" width="517" height="2.5" fill="url(#g130)"/><rect x="1248" y="398" width="515" height="2.5" fill="url(#g131)"/><rect x="1249" y="400" width="512" height="2.5" fill="url(#g132)"/><rect x="1250" y="402" width="509" height="2.5" fill="url(#g133)"/><rect x="1251" y="404" width="506" height="2.5" fill="url(#g134)"/><rect x="1253" y="406" width="502" height="2.5" fill="url(#g135)"/><rect x="1254" y="408" width="499" height="2.5" fill="url(#g136)"/><rect x="1255" y="410" width="496" height="2.5" fill="url(#g137)"/><rect x="1256" y="412" width="493" height="2.5" fill="url(#g138)"/><rect x="1258" y="414" width="489" height="2.5" fill="url(#g139)"/><rect x="1259" y="416" width="486" height="2.5" fill="url(#g140)"/><rect x="1260" y="418" width="483" height="2.5" fill="url(#g141)"/><rect x="1261" y="420" width="480" height="2.5" fill="url(#g142)"/><rect x="1262" y="422" width="477" height="2.5" fill="url(#g143)"/><rect x="1263" y="424" width="474" height="2.5" fill="url(#g144)"/><rect x="1265" y="426" width="470" height="2.5" fill="url(#g145)"/><rect x="1266" y="428" width="467" height="2.5" fill="url(#g146)"/><rect x="1267" y="430" width="464" height="2.5" fill="url(#g147)"/><rect x="1268" y="432" width="462" height="2.5" fill="url(#g148)"/><rect x="1269" y="434" width="459" height="2.5" fill="url(#g149)"/><rect x="1270" y="436" width="456" height="2.5" fill="url(#g150)"/><rect x="1271" y="438" width="453" height="2.5" fill="url(#g151)"/><rect x="1272" y="440" width="450" height="2.5" fill="url(#g152)"/><rect x="1273" y="442" width="447" height="2.5" fill="url(#g153)"/><rect x="1274" y="444" width="444" height="2.5" fill="url(#g154)"/><rect x="1275" y="446" width="441" height="2.5" fill="url(#g155)"/><rect x="1277" y="448" width="437" height="2.5" fill="url(#g156)"/><rect x="1278" y="450" width="434" height="2.5" fill="url(#g157)"/><rect x="1279" y="452" width="431" height="2.5" fill="url(#g158)"/><rect x="1280" y="454" width="428" height="2.5" fill="url(#g159)"/><rect x="1282" y="456" width="424" height="2.5" fill="url(#g160)"/><rect x="1283" y="458" width="421" height="2.5" fill="url(#g161)"/><rect x="1284" y="460" width="418" height="2.5" fill="url(#g162)"/><rect x="1285" y="462" width="415" height="2.5" fill="url(#g163)"/><rect x="1287" y="464" width="411" height="2.5" fill="url(#g164)"/><rect x="1288" y="466" width="409" height="2.5" fill="url(#g165)"/><rect x="1289" y="468" width="406" height="2.5" fill="url(#g166)"/><rect x="1290" y="470" width="403" height="2.5" fill="url(#g167)"/><rect x="1292" y="472" width="399" height="2.5" fill="url(#g168)"/><rect x="1293" y="474" width="396" height="2.5" fill="url(#g169)"/><rect x="1294" y="476" width="393" height="2.5" fill="url(#g170)"/><rect x="1295" y="478" width="390" height="2.5" fill="url(#g171)"/><rect x="1297" y="480" width="386" height="2.5" fill="url(#g172)"/><rect x="1298" y="482" width="383" height="2.5" fill="url(#g173)"/><rect x="1299" y="484" width="380" height="2.5" fill="url(#g174)"/><rect x="1300" y="486" width="377" height="2.5" fill="url(#g175)"/><rect x="1302" y="488" width="373" height="2.5" fill="url(#g176)"/><rect x="1303" y="490" width="370" height="2.5" fill="url(#g177)"/><rect x="1305" y="492" width="366" height="2.5" fill="url(#g178)"/><rect x="1306" y="494" width="363" height="2.5" fill="url(#g179)"/><rect x="1307" y="496" width="360" height="2.5" fill="url(#g180)"/><rect x="1308" y="498" width="358" height="2.5" fill="url(#g181)"/><rect x="1309" y="500" width="355" height="2.5" fill="url(#g182)"/><rect x="1311" y="502" width="351" height="2.5" fill="url(#g183)"/><rect x="1312" y="504" width="348" height="2.5" fill="url(#g184)"/><rect x="1314" y="506" width="344" height="2.5" fill="url(#g185)"/><rect x="1315" y="508" width="341" height="2.5" fill="url(#g186)"/><rect x="1316" y="510" width="338" height="2.5" fill="url(#g187)"/><rect x="1318" y="512" width="334" height="2.5" fill="url(#g188)"/><rect x="1319" y="514" width="331" height="2.5" fill="url(#g189)"/><rect x="1321" y="516" width="327" height="2.5" fill="url(#g190)"/><rect x="1322" y="518" width="324" height="2.5" fill="url(#g191)"/><rect x="1323" y="520" width="321" height="2.5" fill="url(#g192)"/><rect x="1324" y="522" width="318" height="2.5" fill="url(#g193)"/><rect x="1326" y="524" width="314" height="2.5" fill="url(#g194)"/><rect x="1327" y="526" width="311" height="2.5" fill="url(#g195)"/><rect x="1329" y="528" width="307" height="2.5" fill="url(#g196)"/><rect x="1331" y="530" width="303" height="2.5" fill="url(#g197)"/><rect x="1332" y="532" width="301" height="2.5" fill="url(#g198)"/><rect x="1334" y="534" width="297" height="2.5" fill="url(#g199)"/><rect x="1335" y="536" width="294" height="2.5" fill="url(#g200)"/><rect x="1337" y="538" width="290" height="2.5" fill="url(#g201)"/><rect x="1338" y="540" width="287" height="2.5" fill="url(#g202)"/><rect x="1339" y="542" width="284" height="2.5" fill="url(#g203)"/><rect x="1341" y="544" width="280" height="2.5" fill="url(#g204)"/><rect x="1342" y="546" width="277" height="2.5" fill="url(#g205)"/><rect x="1344" y="548" width="273" height="2.5" fill="url(#g206)"/><rect x="1345" y="550" width="270" height="2.5" fill="url(#g207)"/><rect x="1347" y="552" width="266" height="2.5" fill="url(#g208)"/><rect x="1349" y="554" width="262" height="2.5" fill="url(#g209)"/><rect x="1350" y="556" width="259" height="2.5" fill="url(#g210)"/><rect x="1352" y="558" width="255" height="2.5" fill="url(#g211)"/><rect x="1353" y="560" width="252" height="2.5" fill="url(#g212)"/><rect x="1355" y="562" width="248" height="2.5" fill="url(#g213)"/><rect x="1357" y="564" width="245" height="2.5" fill="url(#g214)"/><rect x="1358" y="566" width="242" height="2.5" fill="url(#g215)"/><rect x="1360" y="568" width="238" height="2.5" fill="url(#g216)"/><rect x="1361" y="570" width="235" height="2.5" fill="url(#g217)"/><rect x="1363" y="572" width="231" height="2.5" fill="url(#g218)"/><rect x="1365" y="574" width="227" height="2.5" fill="url(#g219)"/><rect x="1366" y="576" width="224" height="2.5" fill="url(#g220)"/><rect x="1368" y="578" width="220" height="2.5" fill="url(#g221)"/><rect x="1369" y="580" width="217" height="2.5" fill="url(#g222)"/><rect x="1371" y="582" width="213" height="2.5" fill="url(#g223)"/><rect x="1373" y="584" width="209" height="2.5" fill="url(#g224)"/><rect x="1375" y="586" width="205" height="2.5" fill="url(#g225)"/><rect x="1376" y="588" width="202" height="2.5" fill="url(#g226)"/><rect x="1378" y="590" width="198" height="2.5" fill="url(#g227)"/><rect x="1380" y="592" width="194" height="2.5" fill="url(#g228)"/><rect x="1382" y="594" width="190" height="2.5" fill="url(#g229)"/><rect x="1384" y="596" width="186" height="2.5" fill="url(#g230)"/><rect x="1385" y="598" width="184" height="2.5" fill="url(#g231)"/><rect x="1388" y="600" width="179" height="2.5" fill="url(#g232)"/><rect x="1390" y="602" width="175" height="2.5" fill="url(#g233)"/><rect x="1392" y="604" width="171" height="2.5" fill="url(#g234)"/><rect x="1394" y="606" width="167" height="2.5" fill="url(#g235)"/><rect x="1396" y="608" width="163" height="2.5" fill="url(#g236)"/><rect x="1398" y="610" width="159" height="2.5" fill="url(#g237)"/><rect x="1400" y="612" width="155" height="2.5" fill="url(#g238)"/><rect x="1403" y="614" width="150" height="2.5" fill="url(#g239)"/><rect x="1404" y="616" width="147" height="2.5" fill="url(#g240)"/><rect x="1407" y="618" width="142" height="2.5" fill="url(#g241)"/><rect x="1409" y="620" width="138" height="2.5" fill="url(#g242)"/><rect x="1411" y="622" width="134" height="2.5" fill="url(#g243)"/><rect x="1414" y="624" width="129" height="2.5" fill="url(#g244)"/><rect x="1416" y="626" width="125" height="2.5" fill="url(#g245)"/><rect x="1418" y="628" width="121" height="2.5" fill="url(#g246)"/><rect x="1420" y="630" width="118" height="2.5" fill="url(#g247)"/><rect x="1422" y="632" width="114" height="2.5" fill="url(#g248)"/><rect x="1425" y="634" width="109" height="2.5" fill="url(#g249)"/><rect x="1427" y="636" width="105" height="2.5" fill="url(#g250)"/><rect x="1429" y="638" width="101" height="2.5" fill="url(#g251)"/><rect x="1432" y="640" width="96" height="2.5" fill="url(#g252)"/><rect x="1435" y="642" width="91" height="2.5" fill="url(#g253)"/><rect x="1437" y="644" width="87" height="2.5" fill="url(#g254)"/><rect x="1439" y="646" width="83" height="2.5" fill="url(#g255)"/><rect x="1442" y="648" width="78" height="2.5" fill="url(#g256)"/><rect x="1445" y="650" width="73" height="2.5" fill="url(#g257)"/><rect x="1446" y="652" width="70" height="2.5" fill="url(#g258)"/><rect x="1449" y="654" width="65" height="2.5" fill="url(#g259)"/><rect x="1452" y="656" width="60" height="2.5" fill="url(#g260)"/><rect x="1454" y="658" width="56" height="2.5" fill="url(#g261)"/><rect x="1457" y="660" width="51" height="2.5" fill="url(#g262)"/><rect x="1459" y="662" width="47" height="2.5" fill="url(#g263)"/><rect x="1461" y="664" width="44" height="2.5" fill="url(#g264)"/><rect x="1463" y="666" width="40" height="2.5" fill="url(#g265)"/><rect x="1465" y="668" width="36" height="2.5" fill="url(#g266)"/><rect x="1468" y="670" width="31" height="2.5" fill="url(#g267)"/><rect x="1470" y="672" width="27" height="2.5" fill="url(#g268)"/><rect x="1473" y="674" width="22" height="2.5" fill="url(#g269)"/><rect x="1475" y="676" width="18" height="2.5" fill="url(#g270)"/><rect x="1478" y="678" width="13" height="2.5" fill="url(#g271)"/></g><linearGradient id="insA" x1="0" y1="0" x2="1" y2="0.4"><stop offset="0" stop-color="#6f9a00"/><stop offset="0.5" stop-color="#8f9a00"/><stop offset="1" stop-color="#9a7a00"/></linearGradient><linearGradient id="insB" x1="0" y1="0" x2="1" y2="1"><stop offset="0" stop-color="#b0ff10"/><stop offset="0.45" stop-color="#ffff10"/><stop offset="1" stop-color="#ffaa00"/></linearGradient><linearGradient id="rr" x1="0" y1="0" x2="0" y2="1"><stop offset="0" stop-color="#ff8080"/><stop offset="0.12" stop-color="#ff0000"/><stop offset="0.55" stop-color="#f00000"/><stop offset="1" stop-color="#8a0000"/></linearGradient><linearGradient id="gg" x1="0" y1="0" x2="0" y2="1"><stop offset="0" stop-color="#40a040"/><stop offset="0.15" stop-color="#008800"/><stop offset="0.6" stop-color="#008000"/><stop offset="1" stop-color="#004800"/></linearGradient><linearGradient id="bb" x1="0" y1="0" x2="0" y2="1"><stop offset="0" stop-color="#6868ff"/><stop offset="0.08" stop-color="#2020ff"/><stop offset="0.5" stop-color="#0000f0"/><stop offset="1" stop-color="#000070"/></linearGradient><linearGradient id="th" x1="0" y1="0" x2="0" y2="1"><stop offset="0" stop-color="#303030"/><stop offset="0.5" stop-color="#2a2a2a"/><stop offset="0.51" stop-color="#141414"/><stop offset="1" stop-color="#121212"/></linearGradient><linearGradient id="lc" x1="0" y1="0" x2="0" y2="1"><stop offset="0" stop-color="#2c2c2c"/><stop offset="1" stop-color="#1a1a1a"/></linearGradient><linearGradient id="barbg" x1="0" y1="0" x2="0" y2="1"><stop offset="0" stop-color="#444444"/><stop offset="1" stop-color="#242424"/></linearGradient><linearGradient id="btn" x1="0" y1="0" x2="0" y2="1"><stop offset="0" stop-color="#b2b2b2"/><stop offset="0.5" stop-color="#8e8e8e"/><stop offset="1" stop-color="#5e5e5e"/></linearGradient><linearGradient id="btnsel" x1="0" y1="0" x2="0" y2="1"><stop offset="0" stop-color="#1c1c1c"/><stop offset="1" stop-color="#383838"/></linearGradient><linearGradient id="cbtn" x1="0" y1="0" x2="0" y2="1"><stop offset="0" stop-color="#7a7a7a"/><stop offset="1" stop-color="#c4c4c4"/></linearGradient><linearGradient id="tbtn" x1="0" y1="0" x2="0" y2="1"><stop offset="0" stop-color="#bdbdbd"/><stop offset="1" stop-color="#7c7c7c"/></linearGradient></defs><text x="6.3" y="133.8" font-size="49" fill="#f2f2f2" stroke="#f2f2f2" stroke-width="1.08" textLength="386.0" lengthAdjust="spacingAndGlyphs">Saturation Sweeps</text><text x="266.5" y="194.6" font-size="23" fill="#f2f2f2" stroke="#f2f2f2" stroke-width="0.51" text-anchor="end" textLength="125.0" lengthAdjust="spacingAndGlyphs">dE Formula:</text><rect x="275.5" y="171.5" width="154.5" height="28.5" fill="url(#dd)" stroke="#262626" stroke-width="1"/><text x="281.0" y="195.7" font-size="19.5" fill="#f0f0f0" textLength="40.0" lengthAdjust="spacingAndGlyphs">2000</text><path d="M413.3 183.6 L423.3 183.6 L418.3 189.8 Z" fill="#050505"/><text x="714.5" y="124.0" font-size="23" fill="#f2f2f2" stroke="#f2f2f2" stroke-width="0.51" text-anchor="end" textLength="72.5" lengthAdjust="spacingAndGlyphs">Levels:</text><rect x="722.0" y="101.0" width="390.0" height="29.0" fill="url(#dd)" stroke="#262626" stroke-width="1"/><text x="728.0" y="125.3" font-size="19.5" fill="#f0f0f0" textLength="102.0" lengthAdjust="spacingAndGlyphs">20% Sweeps</text><path d="M1094.8 112.6 L1105.8 112.6 L1100.3 119.2 Z" fill="#050505"/><text x="207.5" y="231.7" font-size="16.5" fill="#d6d6d6" text-anchor="middle" textLength="91.0" lengthAdjust="spacingAndGlyphs">DeltaE 2000</text><rect x="48.3" y="237.8" width="359.7" height="444.8" fill="#232323" /><line x1="48.3" y1="237.8" x2="48.3" y2="682.6" stroke="#a9a9a9" stroke-width="1.5" /><line x1="48.3" y1="682.6" x2="48.3" y2="689.5" stroke="#a9a9a9" stroke-width="1.5" /><text x="48.3" y="707.8" font-size="16.5" fill="#d6d6d6" text-anchor="middle">0</text><line x1="96.0" y1="237.8" x2="96.0" y2="682.6" stroke="#a9a9a9" stroke-width="1.5" /><line x1="96.0" y1="682.6" x2="96.0" y2="689.5" stroke="#a9a9a9" stroke-width="1.5" /><text x="96.0" y="707.8" font-size="16.5" fill="#d6d6d6" text-anchor="middle">2</text><line x1="143.7" y1="237.8" x2="143.7" y2="682.6" stroke="#a9a9a9" stroke-width="1.5" /><line x1="143.7" y1="682.6" x2="143.7" y2="689.5" stroke="#a9a9a9" stroke-width="1.5" /><text x="143.7" y="707.8" font-size="16.5" fill="#d6d6d6" text-anchor="middle">4</text><line x1="191.5" y1="237.8" x2="191.5" y2="682.6" stroke="#a9a9a9" stroke-width="1.5" /><line x1="191.5" y1="682.6" x2="191.5" y2="689.5" stroke="#a9a9a9" stroke-width="1.5" /><text x="191.5" y="707.8" font-size="16.5" fill="#d6d6d6" text-anchor="middle">6</text><line x1="239.2" y1="237.8" x2="239.2" y2="682.6" stroke="#a9a9a9" stroke-width="1.5" /><line x1="239.2" y1="682.6" x2="239.2" y2="689.5" stroke="#a9a9a9" stroke-width="1.5" /><text x="239.2" y="707.8" font-size="16.5" fill="#d6d6d6" text-anchor="middle">8</text><line x1="286.9" y1="237.8" x2="286.9" y2="682.6" stroke="#a9a9a9" stroke-width="1.5" /><line x1="286.9" y1="682.6" x2="286.9" y2="689.5" stroke="#a9a9a9" stroke-width="1.5" /><text x="286.9" y="707.8" font-size="16.5" fill="#d6d6d6" text-anchor="middle">10</text><line x1="334.6" y1="237.8" x2="334.6" y2="682.6" stroke="#a9a9a9" stroke-width="1.5" /><line x1="334.6" y1="682.6" x2="334.6" y2="689.5" stroke="#a9a9a9" stroke-width="1.5" /><text x="334.6" y="707.8" font-size="16.5" fill="#d6d6d6" text-anchor="middle">12</text><line x1="382.3" y1="237.8" x2="382.3" y2="682.6" stroke="#a9a9a9" stroke-width="1.5" /><line x1="382.3" y1="682.6" x2="382.3" y2="689.5" stroke="#a9a9a9" stroke-width="1.5" /><text x="382.3" y="707.8" font-size="16.5" fill="#d6d6d6" text-anchor="middle">14</text><line x1="408.0" y1="237.8" x2="408.0" y2="682.6" stroke="#a9a9a9" stroke-width="1.5" /><line x1="47.3" y1="237.8" x2="408.8" y2="237.8" stroke="#a9a9a9" stroke-width="1.5" /><line x1="42.3" y1="682.6" x2="408.8" y2="682.6" stroke="#a9a9a9" stroke-width="1.5" /><line x1="42.0" y1="237.8" x2="48.3" y2="237.8" stroke="#a9a9a9" stroke-width="1.5" /><line x1="42.0" y1="311.9" x2="48.3" y2="311.9" stroke="#a9a9a9" stroke-width="1.5" /><line x1="42.0" y1="386.1" x2="48.3" y2="386.1" stroke="#a9a9a9" stroke-width="1.5" /><line x1="42.0" y1="460.2" x2="48.3" y2="460.2" stroke="#a9a9a9" stroke-width="1.5" /><line x1="42.0" y1="534.3" x2="48.3" y2="534.3" stroke="#a9a9a9" stroke-width="1.5" /><line x1="42.0" y1="608.5" x2="48.3" y2="608.5" stroke="#a9a9a9" stroke-width="1.5" /><line x1="42.0" y1="682.6" x2="48.3" y2="682.6" stroke="#a9a9a9" stroke-width="1.5" /><text x="47.0" y="281.4" font-size="17" fill="#d6d6d6" text-anchor="end">100%</text><text x="47.0" y="355.5" font-size="17" fill="#d6d6d6" text-anchor="end">80%</text><text x="47.0" y="429.7" font-size="17" fill="#d6d6d6" text-anchor="end">60%</text><text x="47.0" y="503.8" font-size="17" fill="#d6d6d6" text-anchor="end">40%</text><text x="47.0" y="577.9" font-size="17" fill="#d6d6d6" text-anchor="end">20%</text><text x="47.0" y="653.6" font-size="17" fill="#d6d6d6" text-anchor="end">100</text><rect x="48.3" y="245.6" width="96.5" height="6.5" fill="#050505" /><rect x="48.3" y="246.6" width="95.5" height="4.5" fill="url(#b00)" /><rect x="48.3" y="253.4" width="57.6" height="6.5" fill="#050505" /><rect x="48.3" y="254.4" width="56.6" height="4.5" fill="url(#b01)" /><rect x="48.3" y="261.3" width="19.7" height="6.5" fill="#050505" /><rect x="48.3" y="262.3" width="18.7" height="4.5" fill="url(#b02)" /><rect x="48.3" y="269.1" width="57.1" height="6.5" fill="#050505" /><rect x="48.3" y="270.1" width="56.1" height="4.5" fill="url(#b03)" /><rect x="48.3" y="277.0" width="58.1" height="6.5" fill="#050505" /><rect x="48.3" y="278.0" width="57.1" height="4.5" fill="url(#b04)" /><rect x="48.3" y="284.9" width="30.7" height="6.5" fill="#050505" /><rect x="48.3" y="285.9" width="29.7" height="4.5" fill="url(#b05)" /><rect x="48.3" y="319.7" width="76.3" height="6.5" fill="#050505" /><rect x="48.3" y="320.7" width="75.3" height="4.5" fill="url(#b10)" /><rect x="48.3" y="327.6" width="51.6" height="6.5" fill="#050505" /><rect x="48.3" y="328.6" width="50.6" height="4.5" fill="url(#b11)" /><rect x="48.3" y="335.4" width="22.6" height="6.5" fill="#050505" /><rect x="48.3" y="336.4" width="21.6" height="4.5" fill="url(#b12)" /><rect x="48.3" y="343.3" width="48.5" height="6.5" fill="#050505" /><rect x="48.3" y="344.3" width="47.5" height="4.5" fill="url(#b13)" /><rect x="48.3" y="351.1" width="53.3" height="6.5" fill="#050505" /><rect x="48.3" y="352.1" width="52.3" height="4.5" fill="url(#b14)" /><rect x="48.3" y="359.0" width="29.3" height="6.5" fill="#050505" /><rect x="48.3" y="360.0" width="28.3" height="4.5" fill="url(#b15)" /><rect x="48.3" y="393.9" width="64.1" height="6.5" fill="#050505" /><rect x="48.3" y="394.9" width="63.1" height="4.5" fill="url(#b20)" /><rect x="48.3" y="401.7" width="41.8" height="6.5" fill="#050505" /><rect x="48.3" y="402.7" width="40.8" height="4.5" fill="url(#b21)" /><rect x="48.3" y="409.6" width="27.4" height="6.5" fill="#050505" /><rect x="48.3" y="410.6" width="26.4" height="4.5" fill="url(#b22)" /><rect x="48.3" y="417.4" width="37.0" height="6.5" fill="#050505" /><rect x="48.3" y="418.4" width="36.0" height="4.5" fill="url(#b23)" /><rect x="48.3" y="425.3" width="51.4" height="6.5" fill="#050505" /><rect x="48.3" y="426.3" width="50.4" height="4.5" fill="url(#b24)" /><rect x="48.3" y="433.1" width="27.9" height="6.5" fill="#050505" /><rect x="48.3" y="434.1" width="26.9" height="4.5" fill="url(#b25)" /><rect x="48.3" y="468.0" width="60.5" height="6.5" fill="#050505" /><rect x="48.3" y="469.0" width="59.5" height="4.5" fill="url(#b30)" /><rect x="48.3" y="475.9" width="33.4" height="6.5" fill="#050505" /><rect x="48.3" y="476.9" width="32.4" height="4.5" fill="url(#b31)" /><rect x="48.3" y="483.7" width="40.3" height="6.5" fill="#050505" /><rect x="48.3" y="484.7" width="39.3" height="4.5" fill="url(#b32)" /><rect x="48.3" y="491.6" width="29.1" height="6.5" fill="#050505" /><rect x="48.3" y="492.6" width="28.1" height="4.5" fill="url(#b33)" /><rect x="48.3" y="499.4" width="46.6" height="6.5" fill="#050505" /><rect x="48.3" y="500.4" width="45.6" height="4.5" fill="url(#b34)" /><rect x="48.3" y="507.2" width="32.4" height="6.5" fill="#050505" /><rect x="48.3" y="508.2" width="31.4" height="4.5" fill="url(#b35)" /><rect x="48.3" y="542.1" width="54.5" height="6.5" fill="#050505" /><rect x="48.3" y="543.1" width="53.5" height="4.5" fill="url(#b40)" /><rect x="48.3" y="550.0" width="30.5" height="6.5" fill="#050505" /><rect x="48.3" y="551.0" width="29.5" height="4.5" fill="url(#b41)" /><rect x="48.3" y="557.8" width="35.5" height="6.5" fill="#050505" /><rect x="48.3" y="558.8" width="34.5" height="4.5" fill="url(#b42)" /><rect x="48.3" y="565.7" width="30.5" height="6.5" fill="#050505" /><rect x="48.3" y="566.7" width="29.5" height="4.5" fill="url(#b43)" /><rect x="48.3" y="573.5" width="37.2" height="6.5" fill="#050505" /><rect x="48.3" y="574.5" width="36.2" height="4.5" fill="url(#b44)" /><rect x="48.3" y="581.4" width="40.3" height="6.5" fill="#050505" /><rect x="48.3" y="582.4" width="39.3" height="4.5" fill="url(#b45)" /><rect x="48.3" y="663.4" width="25.5" height="6.0" fill="#050505" /><rect x="48.3" y="664.4" width="24.5" height="4.0" fill="url(#bw)" /><text x="537.0" y="169.7" font-size="17.5" fill="#d6d6d6" text-anchor="middle">DeltaL</text><rect x="469.7" y="174.8" width="165.8" height="325.9" fill="#232323" /><line x1="462.7" y1="174.8" x2="635.5" y2="174.8" stroke="#a9a9a9" stroke-width="1.5" /><text x="462.2" y="183.0" font-size="17" fill="#d6d6d6" text-anchor="end">15</text><line x1="462.7" y1="229.1" x2="635.5" y2="229.1" stroke="#a9a9a9" stroke-width="1.5" /><text x="462.2" y="237.3" font-size="17" fill="#d6d6d6" text-anchor="end">10</text><line x1="462.7" y1="283.4" x2="635.5" y2="283.4" stroke="#a9a9a9" stroke-width="1.5" /><text x="462.2" y="291.6" font-size="17" fill="#d6d6d6" text-anchor="end">5</text><line x1="462.7" y1="337.8" x2="635.5" y2="337.8" stroke="#a9a9a9" stroke-width="1.5" /><text x="462.2" y="345.9" font-size="17" fill="#d6d6d6" text-anchor="end">0</text><line x1="462.7" y1="392.1" x2="635.5" y2="392.1" stroke="#a9a9a9" stroke-width="1.5" /><text x="462.2" y="400.3" font-size="17" fill="#d6d6d6" text-anchor="end">-5</text><line x1="462.7" y1="446.4" x2="635.5" y2="446.4" stroke="#a9a9a9" stroke-width="1.5" /><text x="462.2" y="454.6" font-size="17" fill="#d6d6d6" text-anchor="end">-10</text><line x1="462.7" y1="500.7" x2="635.5" y2="500.7" stroke="#a9a9a9" stroke-width="1.5" /><text x="462.2" y="508.9" font-size="17" fill="#d6d6d6" text-anchor="end">-15</text><line x1="469.7" y1="174.8" x2="469.7" y2="507.7" stroke="#a9a9a9" stroke-width="1.5" /><line x1="635.5" y1="174.8" x2="635.5" y2="507.7" stroke="#a9a9a9" stroke-width="1.5" /><text x="552.0" y="519.5" font-size="16" fill="#d6d6d6" text-anchor="middle">100%</text><rect x="485.5" y="325.3" width="133.1" height="13.2" fill="#000" /><rect x="486.9" y="326.6" width="130.3" height="10.9" fill="url(#yb)" /><text x="764.7" y="169.7" font-size="17.5" fill="#d6d6d6" text-anchor="middle">DeltaC</text><rect x="697.2" y="174.8" width="166.1" height="325.9" fill="#232323" /><line x1="690.2" y1="174.8" x2="863.3" y2="174.8" stroke="#a9a9a9" stroke-width="1.5" /><text x="689.7" y="183.0" font-size="17" fill="#d6d6d6" text-anchor="end">15</text><line x1="690.2" y1="229.1" x2="863.3" y2="229.1" stroke="#a9a9a9" stroke-width="1.5" /><text x="689.7" y="237.3" font-size="17" fill="#d6d6d6" text-anchor="end">10</text><line x1="690.2" y1="283.4" x2="863.3" y2="283.4" stroke="#a9a9a9" stroke-width="1.5" /><text x="689.7" y="291.6" font-size="17" fill="#d6d6d6" text-anchor="end">5</text><line x1="690.2" y1="337.8" x2="863.3" y2="337.8" stroke="#a9a9a9" stroke-width="1.5" /><text x="689.7" y="345.9" font-size="17" fill="#d6d6d6" text-anchor="end">0</text><line x1="690.2" y1="392.1" x2="863.3" y2="392.1" stroke="#a9a9a9" stroke-width="1.5" /><text x="689.7" y="400.3" font-size="17" fill="#d6d6d6" text-anchor="end">-5</text><line x1="690.2" y1="446.4" x2="863.3" y2="446.4" stroke="#a9a9a9" stroke-width="1.5" /><text x="689.7" y="454.6" font-size="17" fill="#d6d6d6" text-anchor="end">-10</text><line x1="690.2" y1="500.7" x2="863.3" y2="500.7" stroke="#a9a9a9" stroke-width="1.5" /><text x="689.7" y="508.9" font-size="17" fill="#d6d6d6" text-anchor="end">-15</text><line x1="697.2" y1="174.8" x2="697.2" y2="507.7" stroke="#a9a9a9" stroke-width="1.5" /><line x1="863.3" y1="174.8" x2="863.3" y2="507.7" stroke="#a9a9a9" stroke-width="1.5" /><text x="780.0" y="519.5" font-size="16" fill="#d6d6d6" text-anchor="middle">100%</text><rect x="713.5" y="318.8" width="133.0" height="19.7" fill="#000" /><rect x="714.9" y="320.1" width="130.2" height="17.4" fill="url(#yb)" /><text x="991.8" y="169.7" font-size="17.5" fill="#d6d6d6" text-anchor="middle">DeltaH</text><rect x="924.5" y="174.8" width="166.3" height="325.9" fill="#232323" /><line x1="917.5" y1="174.8" x2="1090.8" y2="174.8" stroke="#a9a9a9" stroke-width="1.5" /><text x="917.0" y="183.0" font-size="17" fill="#d6d6d6" text-anchor="end">15</text><line x1="917.5" y1="229.1" x2="1090.8" y2="229.1" stroke="#a9a9a9" stroke-width="1.5" /><text x="917.0" y="237.3" font-size="17" fill="#d6d6d6" text-anchor="end">10</text><line x1="917.5" y1="283.4" x2="1090.8" y2="283.4" stroke="#a9a9a9" stroke-width="1.5" /><text x="917.0" y="291.6" font-size="17" fill="#d6d6d6" text-anchor="end">5</text><line x1="917.5" y1="337.8" x2="1090.8" y2="337.8" stroke="#a9a9a9" stroke-width="1.5" /><text x="917.0" y="345.9" font-size="17" fill="#d6d6d6" text-anchor="end">0</text><line x1="917.5" y1="392.1" x2="1090.8" y2="392.1" stroke="#a9a9a9" stroke-width="1.5" /><text x="917.0" y="400.3" font-size="17" fill="#d6d6d6" text-anchor="end">-5</text><line x1="917.5" y1="446.4" x2="1090.8" y2="446.4" stroke="#a9a9a9" stroke-width="1.5" /><text x="917.0" y="454.6" font-size="17" fill="#d6d6d6" text-anchor="end">-10</text><line x1="917.5" y1="500.7" x2="1090.8" y2="500.7" stroke="#a9a9a9" stroke-width="1.5" /><text x="917.0" y="508.9" font-size="17" fill="#d6d6d6" text-anchor="end">-15</text><line x1="924.5" y1="174.8" x2="924.5" y2="507.7" stroke="#a9a9a9" stroke-width="1.5" /><line x1="1090.8" y1="174.8" x2="1090.8" y2="507.7" stroke="#a9a9a9" stroke-width="1.5" /><text x="1007.0" y="519.5" font-size="16" fill="#d6d6d6" text-anchor="middle">100%</text><rect x="940.8" y="338.5" width="133.2" height="13.8" fill="#000" /><rect x="942.2" y="339.8" width="130.4" height="11.5" fill="url(#yb)" /><rect x="431.0" y="531.0" width="682.0" height="188.0" fill="#000000" /><rect x="454.6" y="540.0" width="114.9" height="151.3" fill="#f4f4f4" /><rect x="456.1" y="541.5" width="111.9" height="75.5" fill="#c7c6a9" /><rect x="456.1" y="617.0" width="111.9" height="72.8" fill="#c3c2a2" /><text x="512.0" y="709.5" font-size="14" fill="#f4f4f4" stroke="#f4f4f4" stroke-width="0.42" text-anchor="middle">20%</text><rect x="588.0" y="540.0" width="114.5" height="151.3" fill="#f4f4f4" /><rect x="589.5" y="541.5" width="111.5" height="75.5" fill="#c6c68c" /><rect x="589.5" y="617.0" width="111.5" height="72.8" fill="#c3c286" /><text x="645.2" y="709.5" font-size="14" fill="#f4f4f4" stroke="#f4f4f4" stroke-width="0.42" text-anchor="middle">40%</text><rect x="721.5" y="540.0" width="114.5" height="151.3" fill="#f4f4f4" /><rect x="723.0" y="541.5" width="111.5" height="75.5" fill="#c7c672" /><rect x="723.0" y="617.0" width="111.5" height="72.8" fill="#c3c26c" /><text x="778.8" y="709.5" font-size="14" fill="#f4f4f4" stroke="#f4f4f4" stroke-width="0.42" text-anchor="middle">60%</text><rect x="855.0" y="540.0" width="113.7" height="151.3" fill="#f4f4f4" /><rect x="856.5" y="541.5" width="110.7" height="75.5" fill="#c5c44f" /><rect x="856.5" y="617.0" width="110.7" height="72.8" fill="#c1c049" /><text x="911.9" y="709.5" font-size="14" fill="#f4f4f4" stroke="#f4f4f4" stroke-width="0.42" text-anchor="middle">80%</text><rect x="988.4" y="540.0" width="113.6" height="151.3" fill="#f4f4f4" /><rect x="989.9" y="541.5" width="110.6" height="75.5" fill="#c8c600" /><rect x="989.9" y="617.0" width="110.6" height="72.8" fill="#c3c100" /><text x="1045.2" y="709.5" font-size="14" fill="#f4f4f4" stroke="#f4f4f4" stroke-width="0.42" text-anchor="middle">100%</text><text x="0.0" y="0.0" font-size="14" fill="#f4f4f4" stroke="#f4f4f4" stroke-width="0.42" text-anchor="middle" transform="translate(446,573) rotate(-90)">Actual</text><text x="0.0" y="0.0" font-size="14" fill="#f4f4f4" stroke="#f4f4f4" stroke-width="0.42" text-anchor="middle" transform="translate(446,658.5) rotate(-90)">Target</text><rect x="1121.5" y="92.0" width="800.0" height="643.0" fill="#c8c40c" /><rect x="1129.5" y="100.0" width="783.2" height="626.4" fill="#333333" /><text x="1521.0" y="120.5" font-size="16.5" fill="#d6d6d6" text-anchor="middle">CIE 1976 u'v'</text><rect x="1172.4" y="125.8" width="737.1" height="567.8" fill="#232323" /><g clip-path="url(#plotc)"><g clip-path="url(#loc)"><rect x="1172" y="130" width="740" height="560" fill="#000"/><use href="#cierows" opacity="0.6"/></g><g clip-path="url(#tri)"><use href="#cierows"/></g></g><rect x="1172.4" y="125.8" width="737.0999999999999" height="567.8000000000001" fill="none" stroke="#c8c8c8" stroke-width="1.5"/><line x1="1172.4" y1="693.6" x2="1172.4" y2="700.1" stroke="#c8c8c8" stroke-width="1.5" /><text x="1172.4" y="719.0" font-size="16" fill="#d6d6d6" text-anchor="middle">0</text><line x1="1165.9" y1="693.6" x2="1172.4" y2="693.6" stroke="#c8c8c8" stroke-width="1.5" /><text x="1165.4" y="702.1" font-size="16.5" fill="#d6d6d6" text-anchor="end">0</text><line x1="1233.7" y1="693.6" x2="1233.7" y2="700.1" stroke="#c8c8c8" stroke-width="1.5" /><text x="1233.7" y="719.0" font-size="16" fill="#d6d6d6" text-anchor="middle">0,05</text><line x1="1165.9" y1="646.4" x2="1172.4" y2="646.4" stroke="#c8c8c8" stroke-width="1.5" /><text x="1165.4" y="654.7" font-size="16.5" fill="#d6d6d6" text-anchor="end">0,05</text><line x1="1295.0" y1="693.6" x2="1295.0" y2="700.1" stroke="#c8c8c8" stroke-width="1.5" /><text x="1295.0" y="719.0" font-size="16" fill="#d6d6d6" text-anchor="middle">0,1</text><line x1="1165.9" y1="599.2" x2="1172.4" y2="599.2" stroke="#c8c8c8" stroke-width="1.5" /><text x="1165.4" y="607.2" font-size="16.5" fill="#d6d6d6" text-anchor="end">0,1</text><line x1="1356.3" y1="693.6" x2="1356.3" y2="700.1" stroke="#c8c8c8" stroke-width="1.5" /><text x="1356.3" y="719.0" font-size="16" fill="#d6d6d6" text-anchor="middle">0,15</text><line x1="1165.9" y1="552.1" x2="1172.4" y2="552.1" stroke="#c8c8c8" stroke-width="1.5" /><text x="1165.4" y="559.8" font-size="16.5" fill="#d6d6d6" text-anchor="end">0,15</text><line x1="1417.6" y1="693.6" x2="1417.6" y2="700.1" stroke="#c8c8c8" stroke-width="1.5" /><text x="1417.6" y="719.0" font-size="16" fill="#d6d6d6" text-anchor="middle">0,2</text><line x1="1165.9" y1="504.9" x2="1172.4" y2="504.9" stroke="#c8c8c8" stroke-width="1.5" /><text x="1165.4" y="512.3" font-size="16.5" fill="#d6d6d6" text-anchor="end">0,2</text><line x1="1478.9" y1="693.6" x2="1478.9" y2="700.1" stroke="#c8c8c8" stroke-width="1.5" /><text x="1478.9" y="719.0" font-size="16" fill="#d6d6d6" text-anchor="middle">0,25</text><line x1="1165.9" y1="457.7" x2="1172.4" y2="457.7" stroke="#c8c8c8" stroke-width="1.5" /><text x="1165.4" y="464.9" font-size="16.5" fill="#d6d6d6" text-anchor="end">0,25</text><line x1="1540.2" y1="693.6" x2="1540.2" y2="700.1" stroke="#c8c8c8" stroke-width="1.5" /><text x="1540.2" y="719.0" font-size="16" fill="#d6d6d6" text-anchor="middle">0,3</text><line x1="1165.9" y1="410.5" x2="1172.4" y2="410.5" stroke="#c8c8c8" stroke-width="1.5" /><text x="1165.4" y="417.5" font-size="16.5" fill="#d6d6d6" text-anchor="end">0,3</text><line x1="1601.5" y1="693.6" x2="1601.5" y2="700.1" stroke="#c8c8c8" stroke-width="1.5" /><text x="1601.5" y="719.0" font-size="16" fill="#d6d6d6" text-anchor="middle">0,35</text><line x1="1165.9" y1="363.4" x2="1172.4" y2="363.4" stroke="#c8c8c8" stroke-width="1.5" /><text x="1165.4" y="370.0" font-size="16.5" fill="#d6d6d6" text-anchor="end">0,35</text><line x1="1662.8" y1="693.6" x2="1662.8" y2="700.1" stroke="#c8c8c8" stroke-width="1.5" /><text x="1662.8" y="719.0" font-size="16" fill="#d6d6d6" text-anchor="middle">0,4</text><line x1="1165.9" y1="316.2" x2="1172.4" y2="316.2" stroke="#c8c8c8" stroke-width="1.5" /><text x="1165.4" y="322.6" font-size="16.5" fill="#d6d6d6" text-anchor="end">0,4</text><line x1="1724.1" y1="693.6" x2="1724.1" y2="700.1" stroke="#c8c8c8" stroke-width="1.5" /><text x="1724.1" y="719.0" font-size="16" fill="#d6d6d6" text-anchor="middle">0,45</text><line x1="1165.9" y1="269.0" x2="1172.4" y2="269.0" stroke="#c8c8c8" stroke-width="1.5" /><text x="1165.4" y="275.2" font-size="16.5" fill="#d6d6d6" text-anchor="end">0,45</text><line x1="1785.4" y1="693.6" x2="1785.4" y2="700.1" stroke="#c8c8c8" stroke-width="1.5" /><text x="1785.4" y="719.0" font-size="16" fill="#d6d6d6" text-anchor="middle">0,5</text><line x1="1165.9" y1="221.9" x2="1172.4" y2="221.9" stroke="#c8c8c8" stroke-width="1.5" /><text x="1165.4" y="227.7" font-size="16.5" fill="#d6d6d6" text-anchor="end">0,5</text><line x1="1846.7" y1="693.6" x2="1846.7" y2="700.1" stroke="#c8c8c8" stroke-width="1.5" /><text x="1846.7" y="719.0" font-size="16" fill="#d6d6d6" text-anchor="middle">0,55</text><line x1="1165.9" y1="174.7" x2="1172.4" y2="174.7" stroke="#c8c8c8" stroke-width="1.5" /><text x="1165.4" y="180.3" font-size="16.5" fill="#d6d6d6" text-anchor="end">0,55</text><rect x="1317.6" y="153.8" width="14" height="14" fill="rgb(0,224,0)" fill-opacity="0.7" stroke="#f4f4f4" stroke-width="2"/><rect x="1331.6" y="167.5" width="14" height="14" fill="rgb(34,224,34)" fill-opacity="0.7" stroke="#f4f4f4" stroke-width="2"/><rect x="1346.0" y="181.9" width="14" height="14" fill="rgb(71,224,71)" fill-opacity="0.7" stroke="#f4f4f4" stroke-width="2"/><rect x="1363.5" y="199.4" width="14" height="14" fill="rgb(111,224,111)" fill-opacity="0.7" stroke="#f4f4f4" stroke-width="2"/><rect x="1383.6" y="218.1" width="14" height="14" fill="rgb(157,224,157)" fill-opacity="0.7" stroke="#f4f4f4" stroke-width="2"/><rect x="1334.7" y="256.2" width="14" height="14" fill="rgb(0,224,224)" fill-opacity="0.7" stroke="#f4f4f4" stroke-width="2"/><rect x="1349.1" y="252.8" width="14" height="14" fill="rgb(34,224,224)" fill-opacity="0.7" stroke="#f4f4f4" stroke-width="2"/><rect x="1363.5" y="250.3" width="14" height="14" fill="rgb(71,224,224)" fill-opacity="0.7" stroke="#f4f4f4" stroke-width="2"/><rect x="1379.5" y="248.0" width="14" height="14" fill="rgb(111,224,224)" fill-opacity="0.7" stroke="#f4f4f4" stroke-width="2"/><rect x="1393.9" y="246.2" width="14" height="14" fill="rgb(157,224,224)" fill-opacity="0.7" stroke="#f4f4f4" stroke-width="2"/><rect x="1463.5" y="233.9" width="14" height="14" fill="rgb(224,157,157)" fill-opacity="0.7" stroke="#f4f4f4" stroke-width="2"/><rect x="1524.5" y="223.0" width="14" height="14" fill="rgb(224,111,111)" fill-opacity="0.7" stroke="#f4f4f4" stroke-width="2"/><rect x="1581.0" y="215.2" width="14" height="14" fill="rgb(224,71,71)" fill-opacity="0.7" stroke="#f4f4f4" stroke-width="2"/><rect x="1643.6" y="204.3" width="14" height="14" fill="rgb(224,34,34)" fill-opacity="0.7" stroke="#f4f4f4" stroke-width="2"/><rect x="1717.4" y="191.5" width="14" height="14" fill="rgb(224,0,0)" fill-opacity="0.7" stroke="#f4f4f4" stroke-width="2"/><rect x="1427.8" y="262.3" width="14" height="14" fill="rgb(224,157,224)" fill-opacity="0.7" stroke="#f4f4f4" stroke-width="2"/><rect x="1449.7" y="284.0" width="14" height="14" fill="rgb(224,111,224)" fill-opacity="0.7" stroke="#f4f4f4" stroke-width="2"/><rect x="1471.4" y="307.7" width="14" height="14" fill="rgb(224,71,224)" fill-opacity="0.7" stroke="#f4f4f4" stroke-width="2"/><rect x="1501.5" y="337.2" width="14" height="14" fill="rgb(224,34,224)" fill-opacity="0.7" stroke="#f4f4f4" stroke-width="2"/><rect x="1538.9" y="373.6" width="14" height="14" fill="rgb(224,0,224)" fill-opacity="0.7" stroke="#f4f4f4" stroke-width="2"/><rect x="1403.4" y="277.9" width="14" height="14" fill="rgb(157,157,224)" fill-opacity="0.7" stroke="#f4f4f4" stroke-width="2"/><rect x="1400.1" y="320.0" width="14" height="14" fill="rgb(111,111,224)" fill-opacity="0.7" stroke="#f4f4f4" stroke-width="2"/><rect x="1395.7" y="372.2" width="14" height="14" fill="rgb(71,71,224)" fill-opacity="0.7" stroke="#f4f4f4" stroke-width="2"/><rect x="1389.7" y="437.9" width="14" height="14" fill="rgb(34,34,224)" fill-opacity="0.7" stroke="#f4f4f4" stroke-width="2"/><rect x="1380.3" y="535.9" width="14" height="14" fill="rgb(0,0,224)" fill-opacity="0.7" stroke="#f4f4f4" stroke-width="2"/><rect x="1414.8" y="162.4" width="14" height="14" fill="rgb(224,224,0)" fill-opacity="0.7" stroke="#f4f4f4" stroke-width="2"/><rect x="1413.7" y="177.0" width="14" height="14" fill="rgb(224,224,34)" fill-opacity="0.7" stroke="#f4f4f4" stroke-width="2"/><rect x="1413.0" y="192.1" width="14" height="14" fill="rgb(224,224,71)" fill-opacity="0.7" stroke="#f4f4f4" stroke-width="2"/><rect x="1411.7" y="207.6" width="14" height="14" fill="rgb(224,224,111)" fill-opacity="0.7" stroke="#f4f4f4" stroke-width="2"/><rect x="1410.7" y="223.3" width="14" height="14" fill="rgb(224,224,157)" fill-opacity="0.7" stroke="#f4f4f4" stroke-width="2"/><circle cx="1312.3" cy="160.5" r="5" fill="rgb(75,164,75)" fill-opacity="0.88" stroke="#111" stroke-width="1.6"/><circle cx="1327.8" cy="173.3" r="5" fill="rgb(88,164,88)" fill-opacity="0.88" stroke="#111" stroke-width="1.6"/><circle cx="1346.5" cy="190.6" r="5" fill="rgb(103,164,103)" fill-opacity="0.88" stroke="#111" stroke-width="1.6"/><circle cx="1367.1" cy="208.0" r="5" fill="rgb(119,164,119)" fill-opacity="0.88" stroke="#111" stroke-width="1.6"/><circle cx="1390.3" cy="228.3" r="5" fill="rgb(137,164,137)" fill-opacity="0.88" stroke="#111" stroke-width="1.6"/><circle cx="1330.8" cy="265.9" r="5" fill="rgb(75,164,164)" fill-opacity="0.88" stroke="#111" stroke-width="1.6"/><circle cx="1347.9" cy="262.8" r="5" fill="rgb(88,164,164)" fill-opacity="0.88" stroke="#111" stroke-width="1.6"/><circle cx="1367.1" cy="259.5" r="5" fill="rgb(103,164,164)" fill-opacity="0.88" stroke="#111" stroke-width="1.6"/><circle cx="1384.6" cy="256.3" r="5" fill="rgb(119,164,164)" fill-opacity="0.88" stroke="#111" stroke-width="1.6"/><circle cx="1399.6" cy="255.0" r="5" fill="rgb(137,164,164)" fill-opacity="0.88" stroke="#111" stroke-width="1.6"/><circle cx="1473.5" cy="240.9" r="5" fill="rgb(164,137,137)" fill-opacity="0.88" stroke="#111" stroke-width="1.6"/><circle cx="1539.4" cy="229.6" r="5" fill="rgb(164,119,119)" fill-opacity="0.88" stroke="#111" stroke-width="1.6"/><circle cx="1602.4" cy="218.8" r="5" fill="rgb(164,103,103)" fill-opacity="0.88" stroke="#111" stroke-width="1.6"/><circle cx="1673.2" cy="206.4" r="5" fill="rgb(164,88,88)" fill-opacity="0.88" stroke="#111" stroke-width="1.6"/><circle cx="1737.2" cy="195.6" r="5" fill="rgb(164,75,75)" fill-opacity="0.88" stroke="#111" stroke-width="1.6"/><circle cx="1436.2" cy="269.3" r="5" fill="rgb(164,137,164)" fill-opacity="0.88" stroke="#111" stroke-width="1.6"/><circle cx="1459.7" cy="289.5" r="5" fill="rgb(164,119,164)" fill-opacity="0.88" stroke="#111" stroke-width="1.6"/><circle cx="1483.3" cy="311.3" r="5" fill="rgb(164,103,164)" fill-opacity="0.88" stroke="#111" stroke-width="1.6"/><circle cx="1517.7" cy="341.6" r="5" fill="rgb(164,88,164)" fill-opacity="0.88" stroke="#111" stroke-width="1.6"/><circle cx="1557.1" cy="375.7" r="5" fill="rgb(164,75,164)" fill-opacity="0.88" stroke="#111" stroke-width="1.6"/><circle cx="1412.1" cy="284.9" r="5" fill="rgb(137,137,164)" fill-opacity="0.88" stroke="#111" stroke-width="1.6"/><circle cx="1407.1" cy="325.8" r="5" fill="rgb(119,119,164)" fill-opacity="0.88" stroke="#111" stroke-width="1.6"/><circle cx="1400.9" cy="380.4" r="5" fill="rgb(103,103,164)" fill-opacity="0.88" stroke="#111" stroke-width="1.6"/><circle cx="1391.8" cy="454.8" r="5" fill="rgb(88,88,164)" fill-opacity="0.88" stroke="#111" stroke-width="1.6"/><circle cx="1381.1" cy="551.6" r="5" fill="rgb(75,75,164)" fill-opacity="0.88" stroke="#111" stroke-width="1.6"/><circle cx="1423.2" cy="168.0" r="5" fill="rgb(164,164,75)" fill-opacity="0.88" stroke="#111" stroke-width="1.6"/><circle cx="1423.5" cy="182.4" r="5" fill="rgb(164,164,88)" fill-opacity="0.88" stroke="#111" stroke-width="1.6"/><circle cx="1421.5" cy="198.2" r="5" fill="rgb(164,164,103)" fill-opacity="0.88" stroke="#111" stroke-width="1.6"/><circle cx="1420.2" cy="213.9" r="5" fill="rgb(164,164,119)" fill-opacity="0.88" stroke="#111" stroke-width="1.6"/><circle cx="1417.0" cy="231.0" r="5" fill="rgb(164,164,137)" fill-opacity="0.88" stroke="#111" stroke-width="1.6"/><rect x="1406.6" y="243.4" width="14" height="14" fill="none" stroke="#000" stroke-width="2.2"/><circle cx="1415.4" cy="250.2" r="5" fill="#fff" stroke="#111" stroke-width="1.6"/><rect x="1654.6" y="515.6" width="250.4" height="172.4" fill="#2a2a2a" /><rect x="1657.9" y="518.3" width="244.7" height="166.4" fill="url(#insA)" stroke="#a8a898" stroke-width="1.5"/><path d="M1658.6 536.7 L1902 666.8 L1902 684 L1658.6 684 Z" fill="url(#insB)"/><rect x="1771" y="592.3" width="16.5" height="16.4" fill="none" stroke="#f4f4f4" stroke-width="2"/><circle cx="1797.7" cy="596" r="4.6" fill="rgba(150,150,60,0.6)" stroke="#111" stroke-width="1.6"/><text x="57.3" y="771.2" font-size="33.5" fill="#f2f2f2" stroke="#f2f2f2" stroke-width="0.74" textLength="268.0" lengthAdjust="spacingAndGlyphs">Avg dE2000: 1,81</text><text x="50.3" y="818.5" font-size="33.5" fill="#f2f2f2" stroke="#f2f2f2" stroke-width="0.74" textLength="281.5" lengthAdjust="spacingAndGlyphs">Max dE2000: 4,04</text><text x="14.3" y="874.0" font-size="34" fill="#f2f2f2" stroke="#f2f2f2" stroke-width="0.75" textLength="255.0" lengthAdjust="spacingAndGlyphs">Current Reading</text><text x="16.2" y="913.7" font-size="27.5" fill="#f2f2f2" stroke="#f2f2f2" stroke-width="0.60" textLength="117.5" lengthAdjust="spacingAndGlyphs">x: 0,4231</text><text x="195.9" y="913.7" font-size="27.5" fill="#f2f2f2" stroke="#f2f2f2" stroke-width="0.60" textLength="119.0" lengthAdjust="spacingAndGlyphs">y: 0,5067</text><text x="16.2" y="961.3" font-size="27.5" fill="#f2f2f2" stroke="#f2f2f2" stroke-width="0.60" textLength="94.5" lengthAdjust="spacingAndGlyphs">fL: 63,2</text><text x="16.2" y="999.4" font-size="27.5" fill="#f2f2f2" stroke="#f2f2f2" stroke-width="0.60" textLength="184.0" lengthAdjust="spacingAndGlyphs">cd/m²: 216,56</text><text x="536.7" y="773.0" font-size="16.5" fill="#d6d6d6" text-anchor="middle">RGB Balance</text><rect x="406.9" y="780.3" width="291.1" height="206.9" fill="#232323" /><line x1="399.9" y1="780.3" x2="698.0" y2="780.3" stroke="#a9a9a9" stroke-width="1.5" /><text x="399.4" y="787.6" font-size="17" fill="#d6d6d6" text-anchor="end">20</text><line x1="399.9" y1="832.0" x2="698.0" y2="832.0" stroke="#a9a9a9" stroke-width="1.5" /><text x="399.4" y="839.3" font-size="17" fill="#d6d6d6" text-anchor="end">10</text><line x1="399.9" y1="883.8" x2="698.0" y2="883.8" stroke="#a9a9a9" stroke-width="1.5" /><text x="399.4" y="891.0" font-size="17" fill="#d6d6d6" text-anchor="end">0</text><line x1="399.9" y1="935.5" x2="698.0" y2="935.5" stroke="#a9a9a9" stroke-width="1.5" /><text x="399.4" y="942.8" font-size="17" fill="#d6d6d6" text-anchor="end">-10</text><line x1="399.9" y1="987.2" x2="698.0" y2="987.2" stroke="#a9a9a9" stroke-width="1.5" /><text x="399.4" y="994.5" font-size="17" fill="#d6d6d6" text-anchor="end">-20</text><line x1="406.9" y1="780.3" x2="406.9" y2="994.2" stroke="#a9a9a9" stroke-width="1.5" /><line x1="698.0" y1="780.3" x2="698.0" y2="994.2" stroke="#a9a9a9" stroke-width="1.5" /><text x="552.4" y="1005.3" font-size="16" fill="#d6d6d6" text-anchor="middle">100%</text><rect x="435.8" y="852.8" width="77.2" height="31.4" fill="#000" /><rect x="437.1" y="854.1" width="74.6" height="28.8" fill="url(#rr)" /><rect x="514.3" y="865.5" width="77.2" height="18.7" fill="#000" /><rect x="515.6" y="866.8" width="74.6" height="16.1" fill="url(#gg)" /><rect x="592.8" y="884.2" width="77.2" height="78.8" fill="#000" /><rect x="594.1" y="885.5" width="74.6" height="76.2" fill="url(#bb)" /><rect x="723.9" y="744.6" width="830.4" height="32.0" fill="#000" /><rect x="745.9" y="744.6" width="808.4" height="32.0" fill="url(#th)" /><text x="0" y="0" transform="translate(937.5,766.9) scale(1.1,1)" font-size="18.5" fill="#f2f2f2" stroke="#f2f2f2" stroke-width="0.55" textLength="41.5" lengthAdjust="spacing">20%</text><text x="0" y="0" transform="translate(1062.0,766.9) scale(1.1,1)" font-size="18.5" fill="#f2f2f2" stroke="#f2f2f2" stroke-width="0.55" textLength="41.5" lengthAdjust="spacing">40%</text><text x="0" y="0" transform="translate(1187.0,766.9) scale(1.1,1)" font-size="18.5" fill="#f2f2f2" stroke="#f2f2f2" stroke-width="0.55" textLength="41.5" lengthAdjust="spacing">60%</text><text x="0" y="0" transform="translate(1312.0,766.9) scale(1.1,1)" font-size="18.5" fill="#f2f2f2" stroke="#f2f2f2" stroke-width="0.55" textLength="41.5" lengthAdjust="spacing">80%</text><text x="0" y="0" transform="translate(1437.0,766.9) scale(1.1,1)" font-size="18.5" fill="#f2f2f2" stroke="#f2f2f2" stroke-width="0.55" textLength="54.5" lengthAdjust="spacing">100%</text><rect x="723.9" y="776.6" width="22.0" height="29.7" fill="url(#lc)" /><rect x="745.9" y="776.6" width="808.4" height="29.7" fill="#3e3e3e" /><text x="0" y="0" transform="translate(753.4,798.8) scale(1.12,1)" font-size="20" fill="#f0f0f0" stroke="#f0f0f0" stroke-width="0.20" textLength="81.2" lengthAdjust="spacing">x: CIE31</text><text x="0" y="0" transform="translate(937.5,798.8) scale(1.12,1)" font-size="20" fill="#f0f0f0" stroke="#f0f0f0" stroke-width="0.20" textLength="69.6" lengthAdjust="spacing">0,3338</text><text x="0" y="0" transform="translate(1062.0,798.8) scale(1.12,1)" font-size="20" fill="#f0f0f0" stroke="#f0f0f0" stroke-width="0.20" textLength="69.6" lengthAdjust="spacing">0,3558</text><text x="0" y="0" transform="translate(1187.0,798.8) scale(1.12,1)" font-size="20" fill="#f0f0f0" stroke="#f0f0f0" stroke-width="0.20" textLength="69.6" lengthAdjust="spacing">0,3780</text><text x="0" y="0" transform="translate(1312.0,798.8) scale(1.12,1)" font-size="20" fill="#f0f0f0" stroke="#f0f0f0" stroke-width="0.20" textLength="69.6" lengthAdjust="spacing">0,4003</text><text x="0" y="0" transform="translate(1437.0,798.8) scale(1.12,1)" font-size="20" fill="#f0f0f0" stroke="#f0f0f0" stroke-width="0.20" textLength="69.6" lengthAdjust="spacing">0,4231</text><rect x="723.9" y="806.3" width="22.0" height="29.7" fill="url(#lc)" /><rect x="745.9" y="806.3" width="808.4" height="29.7" fill="#838383" /><text x="0" y="0" transform="translate(753.4,828.5) scale(1.12,1)" font-size="20" fill="#f0f0f0" stroke="#f0f0f0" stroke-width="0.20" textLength="81.2" lengthAdjust="spacing">y: CIE31</text><text x="0" y="0" transform="translate(937.5,828.5) scale(1.12,1)" font-size="20" fill="#f0f0f0" stroke="#f0f0f0" stroke-width="0.20" textLength="69.6" lengthAdjust="spacing">0,3607</text><text x="0" y="0" transform="translate(1062.0,828.5) scale(1.12,1)" font-size="20" fill="#f0f0f0" stroke="#f0f0f0" stroke-width="0.20" textLength="69.6" lengthAdjust="spacing">0,3963</text><text x="0" y="0" transform="translate(1187.0,828.5) scale(1.12,1)" font-size="20" fill="#f0f0f0" stroke="#f0f0f0" stroke-width="0.20" textLength="69.6" lengthAdjust="spacing">0,4324</text><text x="0" y="0" transform="translate(1312.0,828.5) scale(1.12,1)" font-size="20" fill="#f0f0f0" stroke="#f0f0f0" stroke-width="0.20" textLength="69.6" lengthAdjust="spacing">0,4685</text><text x="0" y="0" transform="translate(1437.0,828.5) scale(1.12,1)" font-size="20" fill="#f0f0f0" stroke="#f0f0f0" stroke-width="0.20" textLength="69.6" lengthAdjust="spacing">0,5067</text><rect x="723.9" y="836.0" width="22.0" height="29.7" fill="url(#lc)" /><rect x="745.9" y="836.0" width="808.4" height="29.7" fill="#3e3e3e" /><text x="0" y="0" transform="translate(753.4,858.2) scale(1.12,1)" font-size="20" fill="#f0f0f0" stroke="#f0f0f0" stroke-width="0.20" textLength="12.5" lengthAdjust="spacing">Y</text><text x="0" y="0" transform="translate(937.5,858.2) scale(1.12,1)" font-size="20" fill="#f0f0f0" stroke="#f0f0f0" stroke-width="0.20" textLength="94.8" lengthAdjust="spacing">228,1467</text><text x="0" y="0" transform="translate(1062.0,858.2) scale(1.12,1)" font-size="20" fill="#f0f0f0" stroke="#f0f0f0" stroke-width="0.20" textLength="94.8" lengthAdjust="spacing">224,4843</text><text x="0" y="0" transform="translate(1187.0,858.2) scale(1.12,1)" font-size="20" fill="#f0f0f0" stroke="#f0f0f0" stroke-width="0.20" textLength="94.8" lengthAdjust="spacing">221,3798</text><text x="0" y="0" transform="translate(1312.0,858.2) scale(1.12,1)" font-size="20" fill="#f0f0f0" stroke="#f0f0f0" stroke-width="0.20" textLength="94.8" lengthAdjust="spacing">218,8746</text><text x="0" y="0" transform="translate(1437.0,858.2) scale(1.12,1)" font-size="20" fill="#f0f0f0" stroke="#f0f0f0" stroke-width="0.20" textLength="94.8" lengthAdjust="spacing">216,5564</text><rect x="723.9" y="865.7" width="22.0" height="29.7" fill="url(#lc)" /><rect x="745.9" y="865.7" width="808.4" height="29.7" fill="#838383" /><text x="0" y="0" transform="translate(753.4,887.9) scale(1.12,1)" font-size="20" fill="#f0f0f0" stroke="#f0f0f0" stroke-width="0.20" textLength="147.3" lengthAdjust="spacing">Target x:CIE31</text><text x="0" y="0" transform="translate(937.5,887.9) scale(1.12,1)" font-size="20" fill="#f0f0f0" stroke="#f0f0f0" stroke-width="0.20" textLength="69.6" lengthAdjust="spacing">0,3344</text><text x="0" y="0" transform="translate(1062.0,887.9) scale(1.12,1)" font-size="20" fill="#f0f0f0" stroke="#f0f0f0" stroke-width="0.20" textLength="69.6" lengthAdjust="spacing">0,3564</text><text x="0" y="0" transform="translate(1187.0,887.9) scale(1.12,1)" font-size="20" fill="#f0f0f0" stroke="#f0f0f0" stroke-width="0.20" textLength="69.6" lengthAdjust="spacing">0,3773</text><text x="0" y="0" transform="translate(1312.0,887.9) scale(1.12,1)" font-size="20" fill="#f0f0f0" stroke="#f0f0f0" stroke-width="0.20" textLength="69.6" lengthAdjust="spacing">0,3969</text><text x="0" y="0" transform="translate(1437.0,887.9) scale(1.12,1)" font-size="20" fill="#f0f0f0" stroke="#f0f0f0" stroke-width="0.20" textLength="69.6" lengthAdjust="spacing">0,4193</text><rect x="723.9" y="895.4" width="22.0" height="29.7" fill="url(#lc)" /><rect x="745.9" y="895.4" width="808.4" height="29.7" fill="#3e3e3e" /><text x="0" y="0" transform="translate(753.4,917.6) scale(1.12,1)" font-size="20" fill="#f0f0f0" stroke="#f0f0f0" stroke-width="0.20" textLength="147.3" lengthAdjust="spacing">Target y:CIE31</text><text x="0" y="0" transform="translate(937.5,917.6) scale(1.12,1)" font-size="20" fill="#f0f0f0" stroke="#f0f0f0" stroke-width="0.20" textLength="69.6" lengthAdjust="spacing">0,3648</text><text x="0" y="0" transform="translate(1062.0,917.6) scale(1.12,1)" font-size="20" fill="#f0f0f0" stroke="#f0f0f0" stroke-width="0.20" textLength="69.6" lengthAdjust="spacing">0,4013</text><text x="0" y="0" transform="translate(1187.0,917.6) scale(1.12,1)" font-size="20" fill="#f0f0f0" stroke="#f0f0f0" stroke-width="0.20" textLength="69.6" lengthAdjust="spacing">0,4358</text><text x="0" y="0" transform="translate(1312.0,917.6) scale(1.12,1)" font-size="20" fill="#f0f0f0" stroke="#f0f0f0" stroke-width="0.20" textLength="69.6" lengthAdjust="spacing">0,4682</text><text x="0" y="0" transform="translate(1437.0,917.6) scale(1.12,1)" font-size="20" fill="#f0f0f0" stroke="#f0f0f0" stroke-width="0.20" textLength="69.6" lengthAdjust="spacing">0,5053</text><rect x="723.9" y="925.1" width="22.0" height="29.7" fill="url(#lc)" /><rect x="745.9" y="925.1" width="808.4" height="29.7" fill="#838383" /><text x="0" y="0" transform="translate(753.4,947.3) scale(1.12,1)" font-size="20" fill="#f0f0f0" stroke="#f0f0f0" stroke-width="0.20" textLength="85.7" lengthAdjust="spacing">Target Y</text><text x="0" y="0" transform="translate(937.5,947.3) scale(1.12,1)" font-size="20" fill="#f0f0f0" stroke="#f0f0f0" stroke-width="0.20" textLength="94.8" lengthAdjust="spacing">219,0589</text><text x="0" y="0" transform="translate(1062.0,947.3) scale(1.12,1)" font-size="20" fill="#f0f0f0" stroke="#f0f0f0" stroke-width="0.20" textLength="94.8" lengthAdjust="spacing">215,2138</text><text x="0" y="0" transform="translate(1187.0,947.3) scale(1.12,1)" font-size="20" fill="#f0f0f0" stroke="#f0f0f0" stroke-width="0.20" textLength="94.8" lengthAdjust="spacing">212,2593</text><text x="0" y="0" transform="translate(1312.0,947.3) scale(1.12,1)" font-size="20" fill="#f0f0f0" stroke="#f0f0f0" stroke-width="0.20" textLength="94.8" lengthAdjust="spacing">209,9407</text><text x="0" y="0" transform="translate(1437.0,947.3) scale(1.12,1)" font-size="20" fill="#f0f0f0" stroke="#f0f0f0" stroke-width="0.20" textLength="94.8" lengthAdjust="spacing">207,6991</text><rect x="723.9" y="954.8" width="22.0" height="29.7" fill="url(#lc)" /><rect x="745.9" y="954.8" width="808.4" height="29.7" fill="#3e3e3e" /><text x="0" y="0" transform="translate(753.4,977.0) scale(1.12,1)" font-size="20" fill="#f0f0f0" stroke="#f0f0f0" stroke-width="0.20" textLength="85.7" lengthAdjust="spacing">ΔE 2000</text><text x="0" y="0" transform="translate(937.5,977.0) scale(1.12,1)" font-size="20" fill="#f0f0f0" stroke="#f0f0f0" stroke-width="0.20" textLength="69.6" lengthAdjust="spacing">1,6536</text><text x="0" y="0" transform="translate(1062.0,977.0) scale(1.12,1)" font-size="20" fill="#f0f0f0" stroke="#f0f0f0" stroke-width="0.20" textLength="69.6" lengthAdjust="spacing">1,3536</text><text x="0" y="0" transform="translate(1187.0,977.0) scale(1.12,1)" font-size="20" fill="#f0f0f0" stroke="#f0f0f0" stroke-width="0.20" textLength="69.6" lengthAdjust="spacing">1,1451</text><text x="0" y="0" transform="translate(1312.0,977.0) scale(1.12,1)" font-size="20" fill="#f0f0f0" stroke="#f0f0f0" stroke-width="0.20" textLength="69.6" lengthAdjust="spacing">1,2409</text><text x="0" y="0" transform="translate(1437.0,977.0) scale(1.12,1)" font-size="20" fill="#f0f0f0" stroke="#f0f0f0" stroke-width="0.20" textLength="69.6" lengthAdjust="spacing">1,2876</text><rect x="723.9" y="984.5" width="22.0" height="29.7" fill="url(#lc)" /><rect x="745.9" y="984.5" width="808.4" height="29.7" fill="#838383" /><text x="0" y="0" transform="translate(753.4,1006.7) scale(1.12,1)" font-size="20" fill="#f0f0f0" stroke="#f0f0f0" stroke-width="0.20" textLength="58.4" lengthAdjust="spacing">dEITP</text><text x="0" y="0" transform="translate(937.5,1006.7) scale(1.12,1)" font-size="20" fill="#f0f0f0" stroke="#f0f0f0" stroke-width="0.20" textLength="69.6" lengthAdjust="spacing">3,6102</text><text x="0" y="0" transform="translate(1062.0,1006.7) scale(1.12,1)" font-size="20" fill="#f0f0f0" stroke="#f0f0f0" stroke-width="0.20" textLength="69.6" lengthAdjust="spacing">3,9353</text><text x="0" y="0" transform="translate(1187.0,1006.7) scale(1.12,1)" font-size="20" fill="#f0f0f0" stroke="#f0f0f0" stroke-width="0.20" textLength="69.6" lengthAdjust="spacing">3,6371</text><text x="0" y="0" transform="translate(1312.0,1006.7) scale(1.12,1)" font-size="20" fill="#f0f0f0" stroke="#f0f0f0" stroke-width="0.20" textLength="69.6" lengthAdjust="spacing">3,7832</text><text x="0" y="0" transform="translate(1437.0,1006.7) scale(1.12,1)" font-size="20" fill="#f0f0f0" stroke="#f0f0f0" stroke-width="0.20" textLength="69.6" lengthAdjust="spacing">4,4151</text><rect x="0.0" y="1094.3" width="1920.0" height="74.7" fill="url(#barbg)" /><rect x="-4" y="1094.8" width="56.8" height="72" rx="4" fill="url(#btn)"/><circle cx="26.3" cy="1105.5" r="9" fill="url(#cbtn)"/><path d="M21.5 1108.5 L31 1108.5 L26.2 1102.8 Z" fill="#1a1a1a"/><rect x="5.6" y="1126" width="42" height="36.4" rx="3.5" fill="#ffff00" stroke="#3a3a1a" stroke-width="1.2"/><rect x="60.5" y="1094.8" width="178.5" height="72" rx="5" fill="url(#btn)"/><rect x="66.0" y="1101" width="167.5" height="43" rx="4" fill="#c3c2a2" stroke="#7a7a66" stroke-width="1.5"/><text x="149.8" y="1162.8" font-size="13" fill="#262626" text-anchor="middle" font-weight="bold">20%</text><rect x="241.7" y="1094.8" width="178.2" height="72" rx="5" fill="url(#btn)"/><rect x="247.2" y="1101" width="167.2" height="43" rx="4" fill="#c3c286" stroke="#7a7a66" stroke-width="1.5"/><text x="330.8" y="1162.8" font-size="13" fill="#262626" text-anchor="middle" font-weight="bold">40%</text><rect x="422.7" y="1094.8" width="178.1" height="72" rx="5" fill="url(#btn)"/><rect x="428.2" y="1101" width="167.1" height="43" rx="4" fill="#c3c26c" stroke="#7a7a66" stroke-width="1.5"/><text x="511.8" y="1162.8" font-size="13" fill="#262626" text-anchor="middle" font-weight="bold">60%</text><rect x="603.9" y="1094.8" width="178.1" height="72" rx="5" fill="url(#btn)"/><rect x="609.4" y="1101" width="167.1" height="43" rx="4" fill="#c1c049" stroke="#7a7a66" stroke-width="1.5"/><text x="693.0" y="1162.8" font-size="13" fill="#262626" text-anchor="middle" font-weight="bold">80%</text><rect x="785.0" y="1094.8" width="178.0" height="72" rx="5" fill="url(#btnsel)"/><rect x="790.5" y="1101" width="167.0" height="43" rx="4" fill="#c3c100" stroke="#3c3c00" stroke-width="1.5"/><text x="874.0" y="1162.8" font-size="13" fill="#f4f4f4" text-anchor="middle" font-weight="bold">100%</text><rect x="1537.7" y="1094.8" width="57" height="80" rx="4" fill="url(#btn)"/><line x1="1537.7" y1="1117.5" x2="1594.6" y2="1117.5" stroke="#5a5a5a" stroke-width="1.2" /><circle cx="1566" cy="1106" r="10" fill="url(#cbtn)"/><path d="M1560.5 1109.5 L1571.5 1109.5 L1566 1103 Z" fill="#1a1a1a"/><rect x="1549" y="1125.5" width="34" height="34" rx="4" fill="#d0d0d0" stroke="#1a1a1a" stroke-width="3"/><rect x="1558" y="1135" width="16.6" height="15.8" fill="#0a0a0a"/><rect x="1864.8" y="1094.8" width="56.0" height="36.0" fill="#2a2a2a" /><circle cx="1893" cy="1113" r="11" fill="#222"/><rect x="1596.0" y="1094.8" width="55.3" height="35.8" fill="url(#tbtn)"/><circle cx="1623.7" cy="1113.1999999999998" r="11.6" fill="url(#cbtn)"/><rect x="1651.3" y="1094.8" width="53.1" height="35.8" fill="url(#tbtn)"/><line x1="1651.3" y1="1094.8" x2="1651.3" y2="1130.6" stroke="#2e2e2e" stroke-width="1.8" /><circle cx="1677.8" cy="1113.1999999999998" r="11.6" fill="url(#cbtn)"/><rect x="1704.4" y="1094.8" width="53.6" height="35.8" fill="url(#tbtn)"/><line x1="1704.4" y1="1094.8" x2="1704.4" y2="1130.6" stroke="#2e2e2e" stroke-width="1.8" /><circle cx="1731.2" cy="1113.1999999999998" r="11.6" fill="url(#cbtn)"/><rect x="1758.0" y="1094.8" width="53.7" height="35.8" fill="url(#tbtn)"/><line x1="1758.0" y1="1094.8" x2="1758.0" y2="1130.6" stroke="#2e2e2e" stroke-width="1.8" /><circle cx="1784.8" cy="1113.1999999999998" r="11.6" fill="url(#cbtn)"/><rect x="1811.7" y="1094.8" width="53.1" height="35.8" fill="url(#tbtn)"/><line x1="1811.7" y1="1094.8" x2="1811.7" y2="1130.6" stroke="#2e2e2e" stroke-width="1.8" /><circle cx="1838.2" cy="1113.1999999999998" r="11.6" fill="url(#cbtn)"/><rect x="1619.2" y="1108.2" width="9" height="9" fill="#2a2a2a"/><path d="M1673.8 1107 L1683.8 1113 L1673.8 1119 Z" fill="#2a2a2a"/><path d="M1727.4 1107.0 L1724.8 1107.0 L1724.8 1119.6 L1727.4 1119.6 M1735.0 1107.0 L1737.6 1107.0 L1737.6 1119.6 L1735.0 1119.6" fill="none" stroke="#2a2a2a" stroke-width="2.4"/><rect x="1728.6" y="1112.3" width="2" height="2" fill="#2a2a2a"/><rect x="1731.8" y="1112.3" width="2" height="2" fill="#2a2a2a"/><ellipse cx="1780.6" cy="1112.6" rx="3.6" ry="3.1" fill="none" stroke="#2a2a2a" stroke-width="2.1"/><ellipse cx="1789.0" cy="1112.6" rx="3.6" ry="3.1" fill="none" stroke="#2a2a2a" stroke-width="2.1"/><path d="M1843.8 1110.3 A6 6 0 0 0 1832.5 1113.7 M1832.7 1116.7 A6 6 0 0 0 1844.0 1113.3" fill="none" stroke="#2a2a2a" stroke-width="2.3"/><path d="M1840.8 1109.7 L1845.8 1106.3 L1845.8 1112.3 Z M1835.8 1117.3 L1830.7 1120.7 L1830.7 1114.7 Z" fill="#2a2a2a"/><rect x="1596" y="1132" width="162" height="40" rx="3" fill="url(#tbtn)"/><rect x="1758.8" y="1132" width="165" height="40" rx="3" fill="url(#tbtn)"/><circle cx="1632.5" cy="1149.8" r="11.5" fill="url(#cbtn)"/><circle cx="1886.7" cy="1149.8" r="11.5" fill="url(#cbtn)"/><text x="1632.5" y="1156.0" font-size="20" fill="#333" text-anchor="middle" font-weight="bold">«</text><text x="1886.7" y="1156.0" font-size="20" fill="#333" text-anchor="middle" font-weight="bold">»</text><text x="1664.8" y="1159.0" font-size="26" fill="#353535" textLength="59.5" lengthAdjust="spacingAndGlyphs" font-weight="bold">Back</text><text x="1791.9" y="1159.0" font-size="26" fill="#353535" textLength="61.5" lengthAdjust="spacingAndGlyphs" font-weight="bold">Next</text></svg></body></html>
